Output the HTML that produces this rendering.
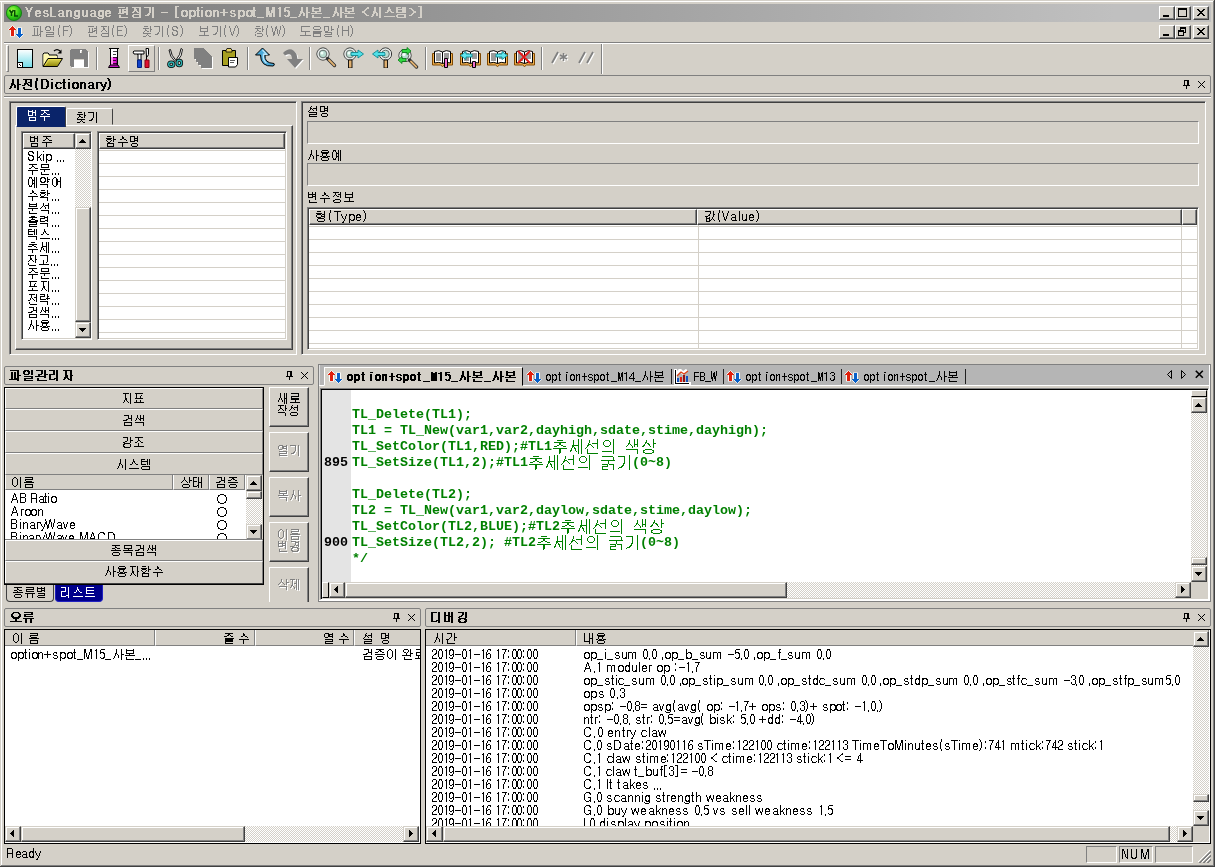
<!DOCTYPE html>
<html lang="ko"><head><meta charset="utf-8"><title>YesLanguage 편집기 - [option+spot_M15_사본_사본 &lt;시스템&gt;]</title>
<style>
html,body{margin:0;padding:0;background:#d4d0c8;overflow:hidden}
#app{position:relative;width:1215px;height:867px;overflow:hidden;background:#d4d0c8;
 font:12px/14px "Liberation Sans",sans-serif}
#app div{position:absolute;box-sizing:border-box}
.t{position:absolute;color:transparent;white-space:pre;overflow:hidden;
 font:12px/16px "Liberation Sans",sans-serif}
.t svg{position:absolute;left:0;top:0;fill:#000;shape-rendering:crispEdges}
svg{display:block}
/* classic 3d edges */
.sk{border:1px solid;border-color:#808080 #fff #fff #808080;
 box-shadow:inset 1px 1px #404040,inset -1px -1px #d4d0c8}
.sk1{border:1px solid;border-color:#808080 #fff #fff #808080}
.rs{border:1px solid;border-color:#fff #404040 #404040 #fff;
 box-shadow:inset -1px -1px #808080,inset 1px 1px #d4d0c8}
.rs1{border:1px solid;border-color:#fff #808080 #808080 #fff}
.sb{border:1px solid;border-color:#d4d0c8 #404040 #404040 #d4d0c8;
 box-shadow:inset -1px -1px #808080,inset 1px 1px #fff;background:#d4d0c8}
.trk{background:conic-gradient(#fff 25%,#d4d0c8 0 50%,#fff 0 75%,#d4d0c8 0) 0 0/2px 2px}
.cap{border:1px solid #808080;border-radius:2px;background:#d4d0c8}
.code{position:absolute;font:bold 13.33px/16px "Liberation Mono",monospace;color:#008000;
 white-space:pre;letter-spacing:0;will-change:transform}
.code .k{display:inline-block;position:relative;height:16px;vertical-align:top;
 color:transparent;overflow:hidden;font:12px/16px "Liberation Sans",sans-serif}
.code .k svg{position:absolute;left:0;top:0;fill:#008000;shape-rendering:crispEdges}
.ic{position:absolute}
</style></head>
<body>
<div id="app">
<svg width="0" height="0" style="position:absolute"><defs><path id="g0" d="M0 2h2v1h-2zm6 0h2v1h-2zm-5 1h2v1h-2zm4 0h2v1h-2zm-4 1h2v1h-2zm4 0h2v1h-2zm-3 1h4v1h-4zm0 1h4v1h-4zm1 1h2v1h-2zm0 1h2v1h-2zm0 1h2v1h-2zm0 1h2v1h-2zm0 1h2v1h-2z"/><path id="g1" d="M2 5h4v1h-4zm-1 1h6v1h-6zm0 1h2v1h-2zm4 0h2v1h-2zm-4 1h6v1h-6zm0 1h2v1h-2zm0 1h2v1h-2zm4 0h2v1h-2zm-3 1h4v1h-4z"/><path id="g2" d="M2 5h4v1h-4zm-1 1h2v1h-2zm3 0h2v1h-2zm-3 1h2v1h-2zm1 1h4v1h-4zm3 1h2v1h-2zm-4 1h2v1h-2zm4 0h2v1h-2zm-3 1h4v1h-4z"/><path id="g3" d="M1 2h2v1h-2zm0 1h2v1h-2zm0 1h2v1h-2zm0 1h2v1h-2zm0 1h2v1h-2zm0 1h2v1h-2zm0 1h2v1h-2zm0 1h2v1h-2zm0 1h2v1h-2zm0 1h6v1h-6z"/><path id="g4" d="M2 5h4v1h-4zm-1 1h2v1h-2zm4 0h2v1h-2zm0 1h2v1h-2zm-3 1h5v1h-5zm-1 1h2v1h-2zm4 0h2v1h-2zm-4 1h2v1h-2zm4 0h2v1h-2zm-3 1h6v1h-6z"/><path id="g5" d="M1 5h5v1h-5zm0 1h3v1h-3zm4 0h2v1h-2zm-4 1h2v1h-2zm4 0h2v1h-2zm-4 1h2v1h-2zm4 0h2v1h-2zm-4 1h2v1h-2zm4 0h2v1h-2zm-4 1h2v1h-2zm4 0h2v1h-2zm-4 1h2v1h-2zm4 0h2v1h-2z"/><path id="g6" d="M2 5h5v1h-5zm-1 1h6v1h-6zm0 1h2v1h-2zm4 0h2v1h-2zm-4 1h2v1h-2zm4 0h2v1h-2zm-4 1h2v1h-2zm4 0h2v1h-2zm-4 1h6v1h-6zm1 1h5v1h-5zm-2 1h2v1h-2zm5 0h2v1h-2zm-4 1h5v1h-5z"/><path id="g7" d="M1 5h2v1h-2zm4 0h2v1h-2zm-4 1h2v1h-2zm4 0h2v1h-2zm-4 1h2v1h-2zm4 0h2v1h-2zm-4 1h2v1h-2zm4 0h2v1h-2zm-4 1h2v1h-2zm4 0h2v1h-2zm-4 1h2v1h-2zm3 0h3v1h-3zm-2 1h5v1h-5z"/><path id="g8" d=""/><path id="g9" d="M1 2h7v1h-7zm8 0h2v1h-2zm0 1h2v1h-2zm-7 1h2v1h-2zm3 0h6v1h-6zm-3 1h2v1h-2zm3 0h2v1h-2zm4 0h2v1h-2zm-7 1h2v1h-2zm3 0h6v1h-6zm-3 1h2v1h-2zm3 0h6v1h-6zm-4 1h6v1h-6zm8 0h2v1h-2zm0 1h2v1h-2zm-7 1h2v1h-2zm0 1h2v1h-2zm0 1h9v1h-9z"/><path id="ga" d="M2 2h9v1h-9zm2 1h2v1h-2zm5 0h2v1h-2zm-5 1h3v1h-3zm5 0h2v1h-2zm-5 1h3v1h-3zm5 0h2v1h-2zm-6 1h2v1h-2zm3 0h2v1h-2zm3 0h2v1h-2zm-7 1h2v1h-2zm5 0h4v1h-4zm2 1h2v1h-2zm-6 1h8v1h-8zm-1 1h2v1h-2zm7 0h2v1h-2zm-7 1h2v1h-2zm7 0h2v1h-2zm-6 1h8v1h-8z"/><path id="gb" d="M1 2h7v1h-7zm8 0h2v1h-2zm-3 1h2v1h-2zm3 0h2v1h-2zm-3 1h2v1h-2zm3 0h2v1h-2zm-3 1h2v1h-2zm3 0h2v1h-2zm-3 1h2v1h-2zm3 0h2v1h-2zm-3 1h2v1h-2zm3 0h2v1h-2zm-4 1h2v1h-2zm4 0h2v1h-2zm-5 1h3v1h-3zm5 0h2v1h-2zm-7 1h4v1h-4zm7 0h2v1h-2zm0 1h2v1h-2zm0 1h2v1h-2z"/><path id="gc" d="M1 7h7v1h-7z"/><path id="gd" d="M2 1h4v1h-4zm0 1h2v1h-2zm0 1h2v1h-2zm0 1h2v1h-2zm0 1h2v1h-2zm0 1h2v1h-2zm0 1h2v1h-2zm0 1h2v1h-2zm0 1h2v1h-2zm0 1h2v1h-2zm0 1h2v1h-2zm0 1h4v1h-4z"/><path id="ge" d="M2 5h5v1h-5zm-1 1h3v1h-3zm4 0h3v1h-3zm-4 1h2v1h-2zm5 0h2v1h-2zm-5 1h2v1h-2zm5 0h2v1h-2zm-5 1h2v1h-2zm5 0h2v1h-2zm-5 1h3v1h-3zm4 0h3v1h-3zm-3 1h5v1h-5z"/><path id="gf" d="M1 5h6v1h-6zm0 1h3v1h-3zm4 0h3v1h-3zm-4 1h2v1h-2zm5 0h2v1h-2zm-5 1h2v1h-2zm5 0h2v1h-2zm-5 1h2v1h-2zm5 0h2v1h-2zm-5 1h3v1h-3zm4 0h3v1h-3zm-4 1h6v1h-6zm0 1h2v1h-2zm0 1h2v1h-2z"/><path id="gg" d="M1 2h2v1h-2zm0 1h2v1h-2zm0 1h2v1h-2zm-1 1h4v1h-4zm1 1h2v1h-2zm0 1h2v1h-2zm0 1h2v1h-2zm0 1h2v1h-2zm0 1h2v1h-2zm0 1h3v1h-3z"/><path id="gh" d="M1 2h2v1h-2zm0 3h2v1h-2zm0 1h2v1h-2zm0 1h2v1h-2zm0 1h2v1h-2zm0 1h2v1h-2zm0 1h2v1h-2zm0 1h2v1h-2z"/><path id="gi" d="M3 4h2v1h-2zm0 1h2v1h-2zm0 1h2v1h-2zm-3 1h8v1h-8zm3 1h2v1h-2zm0 1h2v1h-2zm0 1h2v1h-2z"/><path id="gj" d="M0 12h7v1h-7z"/><path id="gk" d="M1 2h3v1h-3zm6 0h3v1h-3zm-6 1h3v1h-3zm6 0h3v1h-3zm-6 1h3v1h-3zm6 0h3v1h-3zm-6 1h3v1h-3zm5 0h4v1h-4zm-5 1h4v1h-4zm5 0h4v1h-4zm-5 1h4v1h-4zm5 0h4v1h-4zm-5 1h6v1h-6zm7 0h2v1h-2zm-7 1h6v1h-6zm7 0h2v1h-2zm-7 1h2v1h-2zm3 0h3v1h-3zm4 0h2v1h-2zm-7 1h2v1h-2zm3 0h3v1h-3zm4 0h2v1h-2z"/><path id="gl" d="M3 2h2v1h-2zm-1 1h3v1h-3zm1 1h2v1h-2zm0 1h2v1h-2zm0 1h2v1h-2zm0 1h2v1h-2zm0 1h2v1h-2zm0 1h2v1h-2zm0 1h2v1h-2zm0 1h2v1h-2z"/><path id="gm" d="M2 2h5v1h-5zm-1 1h2v1h-2zm0 1h2v1h-2zm0 1h5v1h-5zm0 1h2v1h-2zm3 0h3v1h-3zm1 1h2v1h-2zm0 1h2v1h-2zm0 1h2v1h-2zm-4 1h2v1h-2zm3 0h3v1h-3zm-2 1h4v1h-4z"/><path id="gn" d="M4 2h2v1h-2zm5 0h2v1h-2zm-5 1h2v1h-2zm5 0h2v1h-2zm-5 1h2v1h-2zm5 0h2v1h-2zm-5 1h2v1h-2zm5 0h2v1h-2zm-6 1h3v1h-3zm6 0h2v1h-2zm-6 1h4v1h-4zm6 0h4v1h-4zm-6 1h2v1h-2zm3 0h2v1h-2zm3 0h2v1h-2zm-7 1h2v1h-2zm4 0h2v1h-2zm3 0h2v1h-2zm-7 1h2v1h-2zm4 0h2v1h-2zm3 0h2v1h-2zm-8 1h2v1h-2zm8 0h2v1h-2zm0 1h2v1h-2z"/><path id="go" d="M2 2h2v1h-2zm7 0h2v1h-2zm-7 1h9v1h-9zm0 1h2v1h-2zm7 0h2v1h-2zm-7 1h2v1h-2zm7 0h2v1h-2zm-7 1h9v1h-9zm3 1h2v1h-2zm-4 1h11v1h-11zm1 2h2v1h-2zm0 1h2v1h-2zm0 1h9v1h-9z"/><path id="gp" d="M6 2h2v1h-2zm-1 1h3v1h-3zm-1 1h2v1h-2zm-1 1h2v1h-2zm-2 1h3v1h-3zm0 1h3v1h-3zm2 1h2v1h-2zm1 1h2v1h-2zm1 1h3v1h-3z"/><path id="gq" d="M4 2h2v1h-2zm5 0h2v1h-2zm-5 1h2v1h-2zm5 0h2v1h-2zm-5 1h2v1h-2zm5 0h2v1h-2zm-5 1h2v1h-2zm5 0h2v1h-2zm-6 1h3v1h-3zm6 0h2v1h-2zm-6 1h4v1h-4zm6 0h2v1h-2zm-6 1h2v1h-2zm3 0h2v1h-2zm3 0h2v1h-2zm-7 1h2v1h-2zm4 0h2v1h-2zm3 0h2v1h-2zm-7 1h2v1h-2zm4 0h2v1h-2zm3 0h2v1h-2zm-8 1h2v1h-2zm8 0h2v1h-2zm0 1h2v1h-2z"/><path id="gr" d="M5 2h2v1h-2zm0 1h2v1h-2zm0 1h3v1h-3zm-1 1h4v1h-4zm0 1h2v1h-2zm3 0h2v1h-2zm-5 1h3v1h-3zm6 0h3v1h-3zm-7 4h11v1h-11z"/><path id="gs" d="M1 2h5v1h-5zm6 0h4v1h-4zm-6 1h2v1h-2zm6 0h4v1h-4zm-6 1h10v1h-10zm0 1h2v1h-2zm6 0h4v1h-4zm-6 1h2v1h-2zm6 0h4v1h-4zm-6 1h10v1h-10zm1 2h9v1h-9zm-1 1h2v1h-2zm8 0h2v1h-2zm-8 1h2v1h-2zm8 0h2v1h-2zm-7 1h9v1h-9z"/><path id="gt" d="M1 3h3v1h-3zm2 1h2v1h-2zm1 1h2v1h-2zm1 1h3v1h-3zm0 1h3v1h-3zm-1 1h2v1h-2zm-1 1h2v1h-2zm-2 1h3v1h-3z"/><path id="gu" d="M1 1h4v1h-4zm2 1h2v1h-2zm0 1h2v1h-2zm0 1h2v1h-2zm0 1h2v1h-2zm0 1h2v1h-2zm0 1h2v1h-2zm0 1h2v1h-2zm0 1h2v1h-2zm0 1h2v1h-2zm0 1h2v1h-2zm-2 1h4v1h-4z"/><path id="gv" d="M1 2h6v1h-6zm7 0h1v1h-1zm0 1h1v1h-1zm-6 1h1v1h-1zm3 0h1v1h-1zm3 0h1v1h-1zm-6 1h1v1h-1zm3 0h1v1h-1zm3 0h1v1h-1zm-6 1h1v1h-1zm3 0h1v1h-1zm3 0h1v1h-1zm-6 1h1v1h-1zm3 0h1v1h-1zm3 0h3v1h-3zm-6 1h1v1h-1zm3 0h1v1h-1zm3 0h1v1h-1zm-6 1h1v1h-1zm3 0h1v1h-1zm3 0h1v1h-1zm-6 1h1v1h-1zm3 0h1v1h-1zm2 0h2v1h-2zm-7 1h7v1h-7zm8 0h1v1h-1zm0 1h1v1h-1z"/><path id="gw" d="M2 2h4v1h-4zm7 0h1v1h-1zm-8 1h2v1h-2zm4 0h2v1h-2zm4 0h1v1h-1zm-8 1h1v1h-1zm5 0h1v1h-1zm3 0h1v1h-1zm-8 1h1v1h-1zm5 0h1v1h-1zm3 0h1v1h-1zm-7 1h4v1h-4zm7 0h1v1h-1zm-7 2h8v1h-8zm7 1h1v1h-1zm-7 1h8v1h-8zm0 1h1v1h-1zm0 1h8v1h-8z"/><path id="gx" d="M2 1h1v1h-1zm0 1h1v1h-1zm0 1h1v1h-1zm-1 1h1v1h-1zm0 1h1v1h-1zm0 1h1v1h-1zm0 1h1v1h-1zm0 1h1v1h-1zm0 1h1v1h-1zm0 1h1v1h-1zm1 1h1v1h-1zm0 1h1v1h-1z"/><path id="gy" d="M1 2h6v1h-6zm0 1h1v1h-1zm0 1h1v1h-1zm0 1h1v1h-1zm0 1h5v1h-5zm0 1h1v1h-1zm0 1h1v1h-1zm0 1h1v1h-1zm0 1h1v1h-1zm0 1h1v1h-1z"/><path id="gz" d="M0 1h1v1h-1zm1 1h1v1h-1zm0 1h1v1h-1zm1 1h1v1h-1zm0 1h1v1h-1zm0 1h1v1h-1zm0 1h1v1h-1zm0 1h1v1h-1zm0 1h1v1h-1zm-1 1h1v1h-1zm0 1h1v1h-1zm-1 1h1v1h-1z"/><path id="g10" d="M1 2h6v1h-6zm8 0h1v1h-1zm0 1h1v1h-1zm-7 1h1v1h-1zm3 0h1v1h-1zm2 0h3v1h-3zm-5 1h1v1h-1zm3 0h1v1h-1zm4 0h1v1h-1zm-7 1h1v1h-1zm3 0h1v1h-1zm2 0h3v1h-3zm-5 1h1v1h-1zm3 0h3v1h-3zm4 0h1v1h-1zm-8 1h5v1h-5zm8 0h1v1h-1zm0 1h1v1h-1zm-7 1h1v1h-1zm0 1h1v1h-1zm0 1h8v1h-8z"/><path id="g11" d="M2 2h6v1h-6zm7 0h1v1h-1zm-5 1h1v1h-1zm5 0h1v1h-1zm-5 1h2v1h-2zm5 0h1v1h-1zm-5 1h2v1h-2zm5 0h1v1h-1zm-6 1h1v1h-1zm3 0h1v1h-1zm3 0h1v1h-1zm-7 1h1v1h-1zm5 0h1v1h-1zm2 0h1v1h-1zm0 1h1v1h-1zm-6 1h7v1h-7zm-1 1h1v1h-1zm7 0h1v1h-1zm-7 1h1v1h-1zm7 0h1v1h-1zm-6 1h7v1h-7z"/><path id="g12" d="M1 2h6v1h-6zm0 1h1v1h-1zm0 1h1v1h-1zm0 1h1v1h-1zm0 1h5v1h-5zm0 1h1v1h-1zm0 1h1v1h-1zm0 1h1v1h-1zm0 1h1v1h-1zm0 1h6v1h-6z"/><path id="g13" d="M3 2h4v1h-4zm6 0h1v1h-1zm0 1h1v1h-1zm-7 1h6v1h-6zm7 0h1v1h-1zm-5 1h1v1h-1zm5 0h2v1h-2zm-5 1h2v1h-2zm5 0h1v1h-1zm-6 1h1v1h-1zm3 0h2v1h-2zm3 0h1v1h-1zm-7 1h1v1h-1zm0 1h8v1h-8zm4 1h1v1h-1zm-1 1h1v1h-1zm2 0h1v1h-1zm-5 1h3v1h-3zm6 0h2v1h-2z"/><path id="g14" d="M1 2h6v1h-6zm8 0h1v1h-1zm-3 1h1v1h-1zm3 0h1v1h-1zm-3 1h1v1h-1zm3 0h1v1h-1zm-3 1h1v1h-1zm3 0h1v1h-1zm-3 1h1v1h-1zm3 0h1v1h-1zm-3 1h1v1h-1zm3 0h1v1h-1zm-4 1h1v1h-1zm4 0h1v1h-1zm-5 1h2v1h-2zm5 0h1v1h-1zm-7 1h3v1h-3zm7 0h1v1h-1zm0 1h1v1h-1zm0 1h1v1h-1z"/><path id="g15" d="M2 2h4v1h-4zm-1 1h1v1h-1zm4 0h2v1h-2zm-4 1h1v1h-1zm5 0h1v1h-1zm-5 1h2v1h-2zm1 1h4v1h-4zm3 1h2v1h-2zm-4 1h1v1h-1zm5 0h1v1h-1zm-5 1h1v1h-1zm5 0h1v1h-1zm-5 1h2v1h-2zm4 0h2v1h-2zm-3 1h4v1h-4z"/><path id="g16" d="M2 2h1v1h-1zm7 0h1v1h-1zm-7 1h1v1h-1zm7 0h1v1h-1zm-7 1h8v1h-8zm0 1h1v1h-1zm7 0h1v1h-1zm-7 1h1v1h-1zm7 0h1v1h-1zm-7 1h8v1h-8zm4 1h1v1h-1zm0 1h1v1h-1zm0 1h1v1h-1zm-5 1h10v1h-10z"/><path id="g17" d="M0 2h1v1h-1zm6 0h1v1h-1zm-6 1h1v1h-1zm6 0h1v1h-1zm-5 1h1v1h-1zm4 0h1v1h-1zm-4 1h1v1h-1zm4 0h1v1h-1zm-4 1h1v1h-1zm4 0h1v1h-1zm-4 1h1v1h-1zm3 0h1v1h-1zm-2 1h1v1h-1zm2 0h1v1h-1zm-2 1h1v1h-1zm2 0h1v1h-1zm-2 1h2v1h-2zm1 1h1v1h-1z"/><path id="g18" d="M3 2h4v1h-4zm6 0h1v1h-1zm0 1h1v1h-1zm-7 1h6v1h-6zm7 0h1v1h-1zm-5 1h1v1h-1zm5 0h2v1h-2zm-5 1h2v1h-2zm5 0h1v1h-1zm-6 1h1v1h-1zm3 0h2v1h-2zm3 0h1v1h-1zm-7 1h1v1h-1zm2 1h5v1h-5zm-2 1h1v1h-1zm7 0h1v1h-1zm-7 1h1v1h-1zm7 0h1v1h-1zm-5 1h5v1h-5z"/><path id="g19" d="M0 2h1v1h-1zm5 0h1v1h-1zm4 0h1v1h-1zm-9 1h1v1h-1zm4 0h2v1h-2zm5 0h1v1h-1zm-8 1h1v1h-1zm3 0h2v1h-2zm5 0h1v1h-1zm-8 1h1v1h-1zm3 0h1v1h-1zm2 0h1v1h-1zm3 0h1v1h-1zm-8 1h1v1h-1zm3 0h1v1h-1zm2 0h1v1h-1zm2 0h1v1h-1zm-7 1h1v1h-1zm2 0h1v1h-1zm3 0h1v1h-1zm2 0h1v1h-1zm-6 1h2v1h-2zm4 0h1v1h-1zm2 0h1v1h-1zm-6 1h2v1h-2zm4 0h1v1h-1zm2 0h1v1h-1zm-6 1h2v1h-2zm5 0h1v1h-1zm-5 1h1v1h-1zm5 0h1v1h-1z"/><path id="g1a" d="M2 2h9v1h-9zm0 1h1v1h-1zm0 1h1v1h-1zm0 1h1v1h-1zm0 1h1v1h-1zm0 1h9v1h-9zm4 1h1v1h-1zm0 1h1v1h-1zm0 1h1v1h-1zm-5 1h11v1h-11z"/><path id="g1b" d="M3 2h6v1h-6zm-1 1h1v1h-1zm7 0h1v1h-1zm-7 1h1v1h-1zm7 0h1v1h-1zm-6 1h6v1h-6zm-1 2h9v1h-9zm0 1h8v1h-8zm0 1h8v1h-8zm0 1h1v1h-1zm7 0h1v1h-1zm-7 1h1v1h-1zm7 0h1v1h-1zm-7 1h8v1h-8z"/><path id="g1c" d="M1 2h5v1h-5zm7 0h1v1h-1zm-7 1h1v1h-1zm4 0h1v1h-1zm3 0h1v1h-1zm-7 1h1v1h-1zm4 0h1v1h-1zm3 0h1v1h-1zm-7 1h1v1h-1zm4 0h1v1h-1zm3 0h3v1h-3zm-7 1h1v1h-1zm4 0h1v1h-1zm3 0h1v1h-1zm-6 1h3v1h-3zm0 1h7v1h-7zm6 1h1v1h-1zm-6 1h7v1h-7zm-1 1h1v1h-1zm1 1h7v1h-7z"/><path id="g1d" d="M1 2h1v1h-1zm6 0h1v1h-1zm-6 1h1v1h-1zm6 0h1v1h-1zm-6 1h1v1h-1zm6 0h1v1h-1zm-6 1h1v1h-1zm6 0h1v1h-1zm-6 1h7v1h-7zm0 1h1v1h-1zm6 0h1v1h-1zm-6 1h1v1h-1zm6 0h1v1h-1zm-6 1h1v1h-1zm6 0h1v1h-1zm-6 1h1v1h-1zm6 0h1v1h-1zm-6 1h1v1h-1zm6 0h1v1h-1z"/><path id="g1e" d="M1 2h5v1h-5zm0 1h1v1h-1zm5 0h1v1h-1zm-5 1h1v1h-1zm5 0h1v1h-1zm-5 1h1v1h-1zm5 0h1v1h-1zm-5 1h1v1h-1zm5 0h1v1h-1zm-5 1h6v1h-6zm0 1h1v1h-1zm5 0h1v1h-1zm-5 1h1v1h-1zm5 0h1v1h-1zm-5 1h1v1h-1zm5 0h1v1h-1zm-5 1h1v1h-1zm5 0h1v1h-1z"/><path id="g1f" d="M2 5h3v1h-3zm-1 1h2v1h-2zm3 0h2v1h-2zm-3 1h1v1h-1zm4 0h1v1h-1zm-4 1h5v1h-5zm0 1h1v1h-1zm0 1h1v1h-1zm4 0h1v1h-1zm-3 1h3v1h-3z"/><path id="g1g" d="M2 5h3v1h-3zm-1 1h1v1h-1zm4 0h1v1h-1zm0 1h1v1h-1zm-3 1h4v1h-4zm-1 1h1v1h-1zm4 0h1v1h-1zm-4 1h1v1h-1zm4 0h1v1h-1zm-3 1h5v1h-5z"/><path id="g1h" d="M5 2h1v1h-1zm0 1h1v1h-1zm0 1h1v1h-1zm-3 1h4v1h-4zm-1 1h2v1h-2zm3 0h2v1h-2zm-3 1h1v1h-1zm4 0h1v1h-1zm-4 1h1v1h-1zm4 0h1v1h-1zm-4 1h1v1h-1zm4 0h1v1h-1zm-4 1h2v1h-2zm3 0h2v1h-2zm-2 1h4v1h-4z"/><path id="g1i" d="M0 5h1v1h-1zm5 0h1v1h-1zm-5 1h1v1h-1zm5 0h1v1h-1zm-4 1h1v1h-1zm3 0h1v1h-1zm-3 1h1v1h-1zm3 0h1v1h-1zm-2 1h1v1h-1zm2 0h1v1h-1zm-1 1h1v1h-1zm0 1h1v1h-1zm-1 1h1v1h-1zm-1 1h2v1h-2z"/><path id="g1j" d="M1 2h2v1h-2zm5 0h1v1h-1zm-5 1h2v1h-2zm5 0h1v1h-1zm-5 1h1v1h-1zm2 0h1v1h-1zm3 0h1v1h-1zm-5 1h1v1h-1zm2 0h1v1h-1zm3 0h1v1h-1zm-5 1h1v1h-1zm2 0h1v1h-1zm3 0h1v1h-1zm-5 1h1v1h-1zm3 0h1v1h-1zm2 0h1v1h-1zm-5 1h1v1h-1zm3 0h1v1h-1zm2 0h1v1h-1zm-5 1h1v1h-1zm3 0h1v1h-1zm2 0h1v1h-1zm-5 1h1v1h-1zm4 0h2v1h-2zm-4 1h1v1h-1zm5 0h1v1h-1z"/><path id="g1k" d="M1 2h1v1h-1zm5 0h1v1h-1zm-5 1h1v1h-1zm5 0h1v1h-1zm-5 1h1v1h-1zm5 0h1v1h-1zm-5 1h1v1h-1zm5 0h1v1h-1zm-5 1h1v1h-1zm5 0h1v1h-1zm-5 1h1v1h-1zm5 0h1v1h-1zm-5 1h1v1h-1zm5 0h1v1h-1zm-5 1h1v1h-1zm5 0h1v1h-1zm-5 1h2v1h-2zm4 0h2v1h-2zm-3 1h4v1h-4z"/><path id="g1l" d="M1 2h2v1h-2zm6 0h2v1h-2zm-6 1h2v1h-2zm6 0h2v1h-2zm-6 1h2v1h-2zm6 0h2v1h-2zm-6 1h2v1h-2zm5 0h1v1h-1zm2 0h1v1h-1zm-7 1h1v1h-1zm2 0h1v1h-1zm3 0h1v1h-1zm2 0h1v1h-1zm-7 1h1v1h-1zm2 0h1v1h-1zm3 0h1v1h-1zm2 0h1v1h-1zm-7 1h1v1h-1zm2 0h1v1h-1zm2 0h1v1h-1zm3 0h1v1h-1zm-7 1h1v1h-1zm2 0h1v1h-1zm2 0h1v1h-1zm3 0h1v1h-1zm-7 1h1v1h-1zm3 0h2v1h-2zm4 0h1v1h-1zm-7 1h1v1h-1zm3 0h2v1h-2zm4 0h1v1h-1z"/><path id="g1m" d="M2 2h9v1h-9zm2 1h2v1h-2zm5 0h2v1h-2zm-5 1h2v1h-2zm5 0h2v1h-2zm-5 1h2v1h-2zm3 0h4v1h-4zm-4 1h4v1h-4zm6 0h2v1h-2zm-6 1h2v1h-2zm3 0h2v1h-2zm3 0h2v1h-2zm-8 1h3v1h-3zm6 0h4v1h-4zm2 1h2v1h-2zm-7 1h2v1h-2zm0 1h2v1h-2zm1 1h8v1h-8z"/><path id="g1n" d="M2 1h2v1h-2zm0 1h2v1h-2zm0 1h2v1h-2zm-1 1h2v1h-2zm0 1h2v1h-2zm0 1h2v1h-2zm0 1h2v1h-2zm0 1h2v1h-2zm0 1h2v1h-2zm0 1h2v1h-2zm1 1h2v1h-2zm0 1h2v1h-2z"/><path id="g1o" d="M1 2h6v1h-6zm0 1h2v1h-2zm5 0h2v1h-2zm-5 1h2v1h-2zm5 0h3v1h-3zm-5 1h2v1h-2zm6 0h2v1h-2zm-6 1h2v1h-2zm6 0h2v1h-2zm-6 1h2v1h-2zm6 0h2v1h-2zm-6 1h2v1h-2zm6 0h2v1h-2zm-6 1h2v1h-2zm5 0h3v1h-3zm-5 1h2v1h-2zm5 0h2v1h-2zm-5 1h6v1h-6z"/><path id="g1p" d="M2 5h5v1h-5zm0 1h2v1h-2zm4 0h2v1h-2zm-5 1h2v1h-2zm0 1h2v1h-2zm0 1h2v1h-2zm1 1h2v1h-2zm4 0h2v1h-2zm-4 1h5v1h-5z"/><path id="g1q" d="M1 5h4v1h-4zm0 1h2v1h-2zm0 1h2v1h-2zm0 1h2v1h-2zm0 1h2v1h-2zm0 1h2v1h-2zm0 1h2v1h-2z"/><path id="g1r" d="M0 5h2v1h-2zm5 0h2v1h-2zm-5 1h2v1h-2zm5 0h2v1h-2zm-4 1h2v1h-2zm3 0h2v1h-2zm-3 1h2v1h-2zm3 0h2v1h-2zm-2 1h4v1h-4zm1 1h2v1h-2zm0 1h2v1h-2zm-1 1h2v1h-2zm-1 1h3v1h-3z"/><path id="g1s" d="M0 1h2v1h-2zm1 1h2v1h-2zm0 1h2v1h-2zm1 1h2v1h-2zm0 1h2v1h-2zm0 1h2v1h-2zm0 1h2v1h-2zm0 1h2v1h-2zm0 1h2v1h-2zm-1 1h2v1h-2zm0 1h2v1h-2zm-1 1h2v1h-2z"/><path id="g1t" d="M1 2h1v1h-1zm4 0h1v1h-1zm3 0h1v1h-1zm-7 1h5v1h-5zm7 0h1v1h-1zm-7 1h1v1h-1zm4 0h4v1h-4zm-4 1h1v1h-1zm4 0h1v1h-1zm3 0h1v1h-1zm-7 1h1v1h-1zm4 0h1v1h-1zm3 0h1v1h-1zm-7 1h5v1h-5zm7 0h1v1h-1zm-6 2h7v1h-7zm0 1h1v1h-1zm6 0h1v1h-1zm-6 1h1v1h-1zm6 0h1v1h-1zm-6 1h7v1h-7z"/><path id="g1u" d="M2 2h8v1h-8zm3 1h1v1h-1zm0 1h2v1h-2zm-1 1h1v1h-1zm3 0h1v1h-1zm-5 1h2v1h-2zm6 0h3v1h-3zm-7 2h10v1h-10zm4 1h1v1h-1zm0 1h1v1h-1zm0 1h1v1h-1zm0 1h1v1h-1z"/><path id="g1v" d="M1 2h1v1h-1zm0 1h1v1h-1zm0 1h1v1h-1zm0 1h1v1h-1zm4 0h1v1h-1zm-4 1h1v1h-1zm3 0h1v1h-1zm-3 1h1v1h-1zm2 0h1v1h-1zm-2 1h3v1h-3zm0 1h1v1h-1zm3 0h1v1h-1zm-3 1h1v1h-1zm3 0h1v1h-1zm-3 1h1v1h-1zm4 0h1v1h-1z"/><path id="g1w" d="M1 2h1v1h-1zm0 3h1v1h-1zm0 1h1v1h-1zm0 1h1v1h-1zm0 1h1v1h-1zm0 1h1v1h-1zm0 1h1v1h-1zm0 1h1v1h-1z"/><path id="g1x" d="M1 5h5v1h-5zm0 1h2v1h-2zm4 0h2v1h-2zm-4 1h1v1h-1zm5 0h1v1h-1zm-5 1h1v1h-1zm5 0h1v1h-1zm-5 1h1v1h-1zm5 0h1v1h-1zm-5 1h2v1h-2zm4 0h2v1h-2zm-4 1h1v1h-1zm2 0h3v1h-3zm-2 1h1v1h-1zm0 1h1v1h-1z"/><path id="g1y" d=""/><path id="g1z" d="M1 11h1v1h-1zm0 1h1v1h-1z"/><path id="g20" d="M2 2h8v1h-8zm0 1h1v1h-1zm7 0h1v1h-1zm-7 1h1v1h-1zm7 0h1v1h-1zm-7 1h8v1h-8zm-1 2h10v1h-10zm4 1h1v1h-1zm0 1h1v1h-1zm-3 1h1v1h-1zm0 1h1v1h-1zm0 1h8v1h-8z"/><path id="g21" d="M2 2h3v1h-3zm5 0h1v1h-1zm2 0h1v1h-1zm-7 1h1v1h-1zm2 0h1v1h-1zm3 0h1v1h-1zm2 0h1v1h-1zm-8 1h1v1h-1zm4 0h1v1h-1zm2 0h1v1h-1zm2 0h1v1h-1zm-8 1h1v1h-1zm4 0h3v1h-3zm4 0h1v1h-1zm-8 1h1v1h-1zm4 0h1v1h-1zm2 0h1v1h-1zm2 0h1v1h-1zm-8 1h1v1h-1zm4 0h1v1h-1zm2 0h1v1h-1zm2 0h1v1h-1zm-8 1h1v1h-1zm4 0h3v1h-3zm4 0h1v1h-1zm-8 1h1v1h-1zm4 0h1v1h-1zm2 0h1v1h-1zm2 0h1v1h-1zm-7 1h1v1h-1zm2 0h1v1h-1zm3 0h1v1h-1zm2 0h1v1h-1zm-7 1h3v1h-3zm5 0h1v1h-1zm2 0h1v1h-1zm-2 1h1v1h-1zm2 0h1v1h-1z"/><path id="g22" d="M2 2h4v1h-4zm6 0h1v1h-1zm-7 1h2v1h-2zm4 0h2v1h-2zm3 0h1v1h-1zm-7 1h1v1h-1zm5 0h1v1h-1zm2 0h3v1h-3zm-7 1h1v1h-1zm5 0h1v1h-1zm2 0h1v1h-1zm-7 1h2v1h-2zm4 0h2v1h-2zm3 0h2v1h-2zm-6 1h4v1h-4zm6 0h1v1h-1zm-7 2h8v1h-8zm7 1h1v1h-1zm0 1h1v1h-1zm0 1h1v1h-1z"/><path id="g23" d="M3 2h2v1h-2zm6 0h1v1h-1zm-7 1h1v1h-1zm3 0h1v1h-1zm4 0h1v1h-1zm-8 1h1v1h-1zm4 0h2v1h-2zm4 0h1v1h-1zm-8 1h1v1h-1zm4 0h2v1h-2zm4 0h1v1h-1zm-8 1h1v1h-1zm4 0h5v1h-5zm-4 1h1v1h-1zm4 0h2v1h-2zm4 0h1v1h-1zm-8 1h1v1h-1zm4 0h2v1h-2zm4 0h1v1h-1zm-8 1h1v1h-1zm4 0h2v1h-2zm4 0h1v1h-1zm-7 1h1v1h-1zm3 0h1v1h-1zm4 0h1v1h-1zm-6 1h2v1h-2zm6 0h1v1h-1zm0 1h1v1h-1z"/><path id="g24" d="M5 2h1v1h-1zm0 1h2v1h-2zm0 1h2v1h-2zm-2 1h2v1h-2zm4 0h2v1h-2zm2 1h1v1h-1zm-8 2h10v1h-10zm4 1h1v1h-1zm0 1h1v1h-1zm0 1h1v1h-1zm0 1h1v1h-1z"/><path id="g25" d="M2 2h4v1h-4zm6 0h1v1h-1zm0 1h1v1h-1zm-7 1h6v1h-6zm7 0h1v1h-1zm-6 1h4v1h-4zm6 0h3v1h-3zm-7 1h1v1h-1zm5 0h1v1h-1zm2 0h1v1h-1zm-7 1h1v1h-1zm4 0h1v1h-1zm3 0h1v1h-1zm-6 1h3v1h-3zm-1 1h8v1h-8zm7 1h1v1h-1zm0 1h1v1h-1zm0 1h1v1h-1z"/><path id="g26" d="M2 2h1v1h-1zm7 0h1v1h-1zm-7 1h8v1h-8zm0 1h1v1h-1zm7 0h1v1h-1zm-7 1h8v1h-8zm-1 2h10v1h-10zm4 1h1v1h-1zm0 1h1v1h-1zm-3 1h1v1h-1zm0 1h1v1h-1zm0 1h8v1h-8z"/><path id="g27" d="M4 2h1v1h-1zm5 0h1v1h-1zm-5 1h1v1h-1zm5 0h1v1h-1zm-5 1h1v1h-1zm2 0h4v1h-4zm-3 1h1v1h-1zm2 0h1v1h-1zm4 0h1v1h-1zm-7 1h1v1h-1zm4 0h1v1h-1zm3 0h1v1h-1zm-8 1h1v1h-1zm5 0h1v1h-1zm3 0h1v1h-1zm-7 2h8v1h-8zm7 1h1v1h-1zm0 1h1v1h-1zm0 1h1v1h-1z"/><path id="g28" d="M4 2h4v1h-4zm-2 1h8v1h-8zm3 1h1v1h-1zm-1 1h4v1h-4zm-2 1h2v1h-2zm6 0h3v1h-3zm-7 1h10v1h-10zm1 1h8v1h-8zm7 1h1v1h-1zm-7 1h8v1h-8zm0 1h1v1h-1zm0 1h8v1h-8z"/><path id="g29" d="M1 2h5v1h-5zm7 0h1v1h-1zm-3 1h4v1h-4zm-4 1h5v1h-5zm7 0h1v1h-1zm-7 1h1v1h-1zm7 0h1v1h-1zm-7 1h1v1h-1zm5 0h3v1h-3zm-5 1h5v1h-5zm7 0h1v1h-1zm-7 2h8v1h-8zm7 1h1v1h-1zm0 1h1v1h-1zm0 1h1v1h-1z"/><path id="g2a" d="M1 2h4v1h-4zm6 0h1v1h-1zm2 0h1v1h-1zm-8 1h1v1h-1zm6 0h1v1h-1zm2 0h1v1h-1zm-8 1h7v1h-7zm8 0h1v1h-1zm-8 1h1v1h-1zm6 0h1v1h-1zm2 0h1v1h-1zm-8 1h1v1h-1zm6 0h1v1h-1zm2 0h1v1h-1zm-8 1h5v1h-5zm6 0h1v1h-1zm2 0h1v1h-1zm-8 2h9v1h-9zm8 1h1v1h-1zm0 1h1v1h-1zm0 1h1v1h-1z"/><path id="g2b" d="M5 2h1v1h-1zm0 1h1v1h-1zm0 1h2v1h-2zm-1 1h1v1h-1zm2 0h1v1h-1zm-2 1h1v1h-1zm3 0h1v1h-1zm-5 1h2v1h-2zm6 0h2v1h-2zm-7 4h10v1h-10z"/><path id="g2c" d="M4 2h4v1h-4zm-2 2h8v1h-8zm3 1h2v1h-2zm-4 1h4v1h-4zm6 0h2v1h-2zm2 1h1v1h-1zm-8 2h10v1h-10zm4 1h1v1h-1zm0 1h1v1h-1zm0 1h1v1h-1z"/><path id="g2d" d="M3 2h1v1h-1zm4 0h1v1h-1zm2 0h1v1h-1zm-6 1h1v1h-1zm4 0h1v1h-1zm2 0h1v1h-1zm-6 1h1v1h-1zm4 0h1v1h-1zm2 0h1v1h-1zm-6 1h1v1h-1zm4 0h1v1h-1zm2 0h1v1h-1zm-6 1h5v1h-5zm6 0h1v1h-1zm-7 1h2v1h-2zm5 0h1v1h-1zm2 0h1v1h-1zm-7 1h1v1h-1zm2 0h1v1h-1zm3 0h1v1h-1zm2 0h1v1h-1zm-7 1h1v1h-1zm2 0h1v1h-1zm3 0h1v1h-1zm2 0h1v1h-1zm-8 1h1v1h-1zm4 0h1v1h-1zm2 0h1v1h-1zm2 0h1v1h-1zm-8 1h1v1h-1zm6 0h1v1h-1zm2 0h1v1h-1zm-2 1h1v1h-1zm2 0h1v1h-1z"/><path id="g2e" d="M2 2h6v1h-6zm7 0h1v1h-1zm-5 1h1v1h-1zm5 0h1v1h-1zm-5 1h1v1h-1zm5 0h1v1h-1zm-5 1h2v1h-2zm5 0h1v1h-1zm-5 1h2v1h-2zm5 0h2v1h-2zm-6 1h1v1h-1zm3 0h1v1h-1zm3 0h1v1h-1zm-7 1h1v1h-1zm5 0h1v1h-1zm2 0h1v1h-1zm0 1h1v1h-1zm-7 1h1v1h-1zm0 1h1v1h-1zm1 1h7v1h-7z"/><path id="g2f" d="M2 2h8v1h-8zm7 1h1v1h-1zm0 1h1v1h-1zm0 1h1v1h-1zm0 1h1v1h-1zm-4 1h1v1h-1zm4 0h1v1h-1zm-4 1h1v1h-1zm4 0h1v1h-1zm-4 1h1v1h-1zm3 0h1v1h-1zm-3 1h1v1h-1zm-4 1h10v1h-10z"/><path id="g2g" d="M2 2h8v1h-8zm1 1h1v1h-1zm0 1h1v1h-1zm5 0h1v1h-1zm-5 1h1v1h-1zm4 0h1v1h-1zm-4 1h1v1h-1zm4 0h1v1h-1zm-5 1h8v1h-8zm3 2h1v1h-1zm0 1h1v1h-1zm-4 1h10v1h-10z"/><path id="g2h" d="M2 2h6v1h-6zm7 0h1v1h-1zm-5 1h1v1h-1zm5 0h1v1h-1zm-5 1h1v1h-1zm5 0h1v1h-1zm-5 1h1v1h-1zm5 0h1v1h-1zm-5 1h1v1h-1zm5 0h1v1h-1zm-5 1h2v1h-2zm5 0h1v1h-1zm-5 1h2v1h-2zm5 0h1v1h-1zm-6 1h1v1h-1zm2 0h1v1h-1zm4 0h1v1h-1zm-6 1h1v1h-1zm3 0h1v1h-1zm3 0h1v1h-1zm-7 1h1v1h-1zm5 0h1v1h-1zm2 0h1v1h-1zm0 1h1v1h-1z"/><path id="g2i" d="M2 2h6v1h-6zm7 0h1v1h-1zm-5 1h1v1h-1zm5 0h1v1h-1zm-5 1h1v1h-1zm5 0h1v1h-1zm-5 1h1v1h-1zm3 0h3v1h-3zm-4 1h1v1h-1zm2 0h1v1h-1zm4 0h1v1h-1zm-6 1h1v1h-1zm3 0h1v1h-1zm3 0h1v1h-1zm-8 1h2v1h-2zm6 0h1v1h-1zm2 0h1v1h-1zm0 1h1v1h-1zm-7 1h1v1h-1zm0 1h1v1h-1zm1 1h7v1h-7z"/><path id="g2j" d="M1 2h5v1h-5zm7 0h1v1h-1zm-3 1h1v1h-1zm3 0h1v1h-1zm-7 1h5v1h-5zm7 0h2v1h-2zm-7 1h1v1h-1zm7 0h1v1h-1zm-7 1h1v1h-1zm6 0h4v1h-4zm-6 1h6v1h-6zm7 0h1v1h-1zm-7 2h8v1h-8zm7 1h1v1h-1zm0 1h1v1h-1zm0 1h1v1h-1z"/><path id="g2k" d="M2 2h5v1h-5zm7 0h1v1h-1zm-3 1h1v1h-1zm3 0h1v1h-1zm-3 1h1v1h-1zm3 0h1v1h-1zm-3 1h4v1h-4zm-2 1h2v1h-2zm5 0h1v1h-1zm-8 1h4v1h-4zm8 0h1v1h-1zm-7 2h8v1h-8zm0 1h1v1h-1zm7 0h1v1h-1zm-7 1h1v1h-1zm7 0h1v1h-1zm-7 1h8v1h-8z"/><path id="g2l" d="M3 2h1v1h-1zm3 0h1v1h-1zm3 0h1v1h-1zm-6 1h1v1h-1zm3 0h1v1h-1zm3 0h1v1h-1zm-6 1h1v1h-1zm3 0h1v1h-1zm3 0h1v1h-1zm-7 1h1v1h-1zm2 0h1v1h-1zm2 0h4v1h-4zm-4 1h1v1h-1zm3 0h2v1h-2zm4 0h1v1h-1zm-8 1h1v1h-1zm5 0h1v1h-1zm3 0h1v1h-1zm-8 2h9v1h-9zm8 1h1v1h-1zm0 1h1v1h-1zm0 1h1v1h-1z"/><path id="g2m" d="M4 2h1v1h-1zm5 0h1v1h-1zm-5 1h1v1h-1zm5 0h1v1h-1zm-5 1h1v1h-1zm5 0h1v1h-1zm-5 1h1v1h-1zm5 0h1v1h-1zm-6 1h2v1h-2zm6 0h1v1h-1zm-6 1h1v1h-1zm2 0h1v1h-1zm4 0h3v1h-3zm-6 1h1v1h-1zm3 0h1v1h-1zm3 0h1v1h-1zm-7 1h1v1h-1zm4 0h1v1h-1zm3 0h1v1h-1zm-7 1h1v1h-1zm4 0h1v1h-1zm3 0h1v1h-1zm-8 1h1v1h-1zm8 0h1v1h-1zm0 1h1v1h-1z"/><path id="g2n" d="M3 2h6v1h-6zm-1 1h1v1h-1zm7 0h1v1h-1zm-7 1h8v1h-8zm1 1h6v1h-6zm0 1h1v1h-1zm4 0h1v1h-1zm-4 1h1v1h-1zm4 0h1v1h-1zm-6 1h2v1h-2zm3 0h3v1h-3zm4 0h3v1h-3zm-5 1h6v1h-6zm-1 1h1v1h-1zm7 0h1v1h-1zm-7 1h1v1h-1zm7 0h1v1h-1zm-6 1h6v1h-6z"/><path id="g2o" d="M2 2h4v1h-4zm6 0h1v1h-1zm0 1h1v1h-1zm-7 1h6v1h-6zm7 0h1v1h-1zm-6 1h4v1h-4zm6 0h3v1h-3zm-7 1h1v1h-1zm5 0h1v1h-1zm2 0h1v1h-1zm-6 1h1v1h-1zm3 0h1v1h-1zm3 0h1v1h-1zm-5 1h2v1h-2zm-1 1h7v1h-7zm0 1h1v1h-1zm6 0h1v1h-1zm-6 1h1v1h-1zm6 0h1v1h-1zm-6 1h7v1h-7z"/><path id="g2p" d="M1 2h5v1h-5zm7 0h1v1h-1zm-7 1h1v1h-1zm4 0h1v1h-1zm3 0h1v1h-1zm-7 1h1v1h-1zm4 0h4v1h-4zm-4 1h1v1h-1zm4 0h1v1h-1zm3 0h1v1h-1zm-7 1h1v1h-1zm4 0h4v1h-4zm-4 1h5v1h-5zm7 0h1v1h-1zm-5 2h5v1h-5zm-1 1h1v1h-1zm6 0h1v1h-1zm-6 1h1v1h-1zm6 0h1v1h-1zm-5 1h5v1h-5z"/><path id="g2q" d="M4 2h1v1h-1zm5 0h1v1h-1zm-6 1h1v1h-1zm6 0h1v1h-1zm-6 1h2v1h-2zm3 0h4v1h-4zm-3 1h1v1h-1zm2 0h1v1h-1zm4 0h1v1h-1zm-7 1h1v1h-1zm4 0h1v1h-1zm3 0h1v1h-1zm-8 1h1v1h-1zm1 1h8v1h-8zm7 1h1v1h-1zm-7 1h8v1h-8zm0 1h1v1h-1zm0 1h8v1h-8z"/><path id="g2r" d="M1 2h1v1h-1zm4 0h1v1h-1zm3 0h1v1h-1zm-7 1h1v1h-1zm4 0h1v1h-1zm3 0h1v1h-1zm-7 1h8v1h-8zm0 1h1v1h-1zm4 0h1v1h-1zm3 0h1v1h-1zm-7 1h1v1h-1zm4 0h4v1h-4zm-4 1h5v1h-5zm7 0h1v1h-1zm0 1h1v1h-1zm0 1h1v1h-1zm-6 1h1v1h-1zm0 1h1v1h-1zm0 1h8v1h-8z"/><path id="g2s" d="M2 2h6v1h-6zm7 0h1v1h-1zm-5 1h1v1h-1zm5 0h1v1h-1zm-5 1h1v1h-1zm3 0h3v1h-3zm-4 1h1v1h-1zm2 0h1v1h-1zm4 0h1v1h-1zm-7 1h1v1h-1zm4 0h2v1h-2zm3 0h1v1h-1zm0 1h1v1h-1zm-5 2h5v1h-5zm-2 1h2v1h-2zm7 0h1v1h-1zm-7 1h1v1h-1zm7 0h1v1h-1zm-6 1h6v1h-6z"/><path id="g2t" d="M2 2h4v1h-4zm7 0h1v1h-1zm0 1h1v1h-1zm-8 1h6v1h-6zm8 0h1v1h-1zm-7 1h4v1h-4zm5 0h3v1h-3zm-6 1h1v1h-1zm5 0h1v1h-1zm3 0h1v1h-1zm-8 1h1v1h-1zm5 0h4v1h-4zm-4 1h4v1h-4zm7 0h1v1h-1zm-6 1h6v1h-6zm-1 1h1v1h-1zm7 0h1v1h-1zm-7 1h1v1h-1zm7 0h1v1h-1zm-6 1h6v1h-6z"/><path id="g2u" d="M0 2h7v1h-7zm3 1h1v1h-1zm0 1h1v1h-1zm0 1h1v1h-1zm0 1h1v1h-1zm0 1h1v1h-1zm0 1h1v1h-1zm0 1h1v1h-1zm0 1h1v1h-1zm0 1h1v1h-1z"/><path id="g2v" d="M1 2h6v1h-6zm8 0h1v1h-1zm-3 1h1v1h-1zm3 0h1v1h-1zm-3 1h1v1h-1zm3 0h1v1h-1zm-4 1h1v1h-1zm4 0h2v1h-2zm-5 1h2v1h-2zm5 0h1v1h-1zm-8 1h3v1h-3zm8 0h1v1h-1zm-7 1h1v1h-1zm3 0h1v1h-1zm3 0h1v1h-1zm-6 1h4v1h-4zm6 0h1v1h-1zm-6 1h1v1h-1zm3 0h1v1h-1zm2 0h1v1h-1zm2 0h1v1h-1zm-7 1h1v1h-1zm3 0h2v1h-2zm5 0h1v1h-1zm-8 1h4v1h-4z"/><path id="g2w" d="M1 2h1v1h-1zm0 1h1v1h-1zm0 1h1v1h-1zm0 1h1v1h-1zm0 1h1v1h-1zm0 1h1v1h-1zm0 1h1v1h-1zm0 1h1v1h-1zm0 1h1v1h-1zm0 1h1v1h-1z"/><path id="g2x" d="M1 5h1v1h-1zm4 0h1v1h-1zm-4 1h1v1h-1zm4 0h1v1h-1zm-4 1h1v1h-1zm4 0h1v1h-1zm-4 1h1v1h-1zm4 0h1v1h-1zm-4 1h1v1h-1zm4 0h1v1h-1zm-4 1h1v1h-1zm3 0h2v1h-2zm-2 1h4v1h-4z"/><path id="g2y" d="M1 2h9v1h-9zm7 1h2v1h-2zm-6 1h2v1h-2zm3 0h2v1h-2zm3 0h2v1h-2zm-6 1h2v1h-2zm3 0h2v1h-2zm3 0h2v1h-2zm-6 1h2v1h-2zm3 0h2v1h-2zm3 0h2v1h-2zm-6 1h2v1h-2zm3 0h2v1h-2zm3 0h4v1h-4zm-6 1h2v1h-2zm3 0h2v1h-2zm3 0h2v1h-2zm-6 1h2v1h-2zm3 0h2v1h-2zm3 0h2v1h-2zm-6 1h2v1h-2zm3 0h5v1h-5zm-5 1h10v1h-10zm8 1h2v1h-2z"/><path id="g2z" d="M2 2h5v1h-5zm7 0h2v1h-2zm-8 1h3v1h-3zm4 0h3v1h-3zm4 0h2v1h-2zm-8 1h2v1h-2zm5 0h2v1h-2zm3 0h2v1h-2zm-8 1h2v1h-2zm5 0h2v1h-2zm3 0h2v1h-2zm-7 1h5v1h-5zm7 0h2v1h-2zm-7 2h9v1h-9zm7 1h2v1h-2zm-7 1h9v1h-9zm0 1h2v1h-2zm0 1h9v1h-9z"/><path id="g30" d="M1 2h7v1h-7zm8 0h2v1h-2zm-3 1h2v1h-2zm3 0h2v1h-2zm-3 1h2v1h-2zm3 0h2v1h-2zm-3 1h2v1h-2zm3 0h2v1h-2zm-6 1h4v1h-4zm6 0h4v1h-4zm-6 1h2v1h-2zm6 0h2v1h-2zm-9 1h11v1h-11zm9 1h2v1h-2zm-7 1h2v1h-2zm0 1h2v1h-2zm0 1h10v1h-10z"/><path id="g31" d="M1 2h6v1h-6zm7 0h2v1h-2zm-3 1h2v1h-2zm3 0h2v1h-2zm-3 1h2v1h-2zm3 0h2v1h-2zm-3 1h2v1h-2zm3 0h2v1h-2zm-7 1h6v1h-6zm7 0h2v1h-2zm-7 1h2v1h-2zm7 0h2v1h-2zm-7 1h2v1h-2zm7 0h2v1h-2zm-7 1h2v1h-2zm7 0h2v1h-2zm-7 1h2v1h-2zm5 0h4v1h-4zm-5 1h6v1h-6zm7 0h2v1h-2zm0 1h2v1h-2z"/><path id="g32" d="M2 2h9v1h-9zm2 1h2v1h-2zm5 0h2v1h-2zm-5 1h2v1h-2zm5 0h2v1h-2zm-5 1h2v1h-2zm5 0h2v1h-2zm-5 1h2v1h-2zm5 0h2v1h-2zm-5 1h3v1h-3zm5 0h3v1h-3zm-5 1h3v1h-3zm5 0h2v1h-2zm-6 1h4v1h-4zm6 0h2v1h-2zm-6 1h2v1h-2zm3 0h2v1h-2zm3 0h2v1h-2zm-7 1h2v1h-2zm5 0h4v1h-4zm2 1h2v1h-2z"/><path id="g33" d="M2 2h8v1h-8zm1 1h1v1h-1zm0 1h1v1h-1zm5 0h1v1h-1zm-5 1h1v1h-1zm4 0h1v1h-1zm-4 1h1v1h-1zm4 0h1v1h-1zm-5 1h8v1h-8zm1 2h1v1h-1zm4 0h1v1h-1zm-4 1h1v1h-1zm4 0h1v1h-1zm-6 1h10v1h-10z"/><path id="g34" d="M2 2h5v1h-5zm7 0h1v1h-1zm-3 1h1v1h-1zm3 0h1v1h-1zm-3 1h1v1h-1zm3 0h1v1h-1zm-3 1h1v1h-1zm3 0h3v1h-3zm-5 1h2v1h-2zm5 0h1v1h-1zm-7 1h2v1h-2zm7 0h1v1h-1zm-6 1h6v1h-6zm-1 1h2v1h-2zm7 0h1v1h-1zm-7 1h1v1h-1zm7 0h1v1h-1zm-7 1h2v1h-2zm7 0h1v1h-1zm-6 1h6v1h-6z"/><path id="g35" d="M2 2h8v1h-8zm3 1h1v1h-1zm0 1h1v1h-1zm0 1h2v1h-2zm-1 1h1v1h-1zm3 0h1v1h-1zm-5 1h2v1h-2zm6 0h2v1h-2zm-3 1h1v1h-1zm0 1h1v1h-1zm0 1h1v1h-1zm-4 1h10v1h-10z"/><path id="g36" d="M4 2h1v1h-1zm5 0h1v1h-1zm-5 1h1v1h-1zm5 0h1v1h-1zm-5 1h1v1h-1zm5 0h1v1h-1zm-5 1h1v1h-1zm5 0h1v1h-1zm-6 1h2v1h-2zm6 0h1v1h-1zm-6 1h1v1h-1zm2 0h1v1h-1zm4 0h1v1h-1zm-6 1h1v1h-1zm3 0h1v1h-1zm3 0h1v1h-1zm-7 1h1v1h-1zm4 0h1v1h-1zm3 0h1v1h-1zm-7 1h1v1h-1zm4 0h1v1h-1zm3 0h1v1h-1zm-8 1h1v1h-1zm8 0h1v1h-1zm0 1h1v1h-1z"/><path id="g37" d="M1 2h4v1h-4zm6 0h1v1h-1zm2 0h1v1h-1zm-8 1h1v1h-1zm6 0h1v1h-1zm2 0h1v1h-1zm-8 1h7v1h-7zm8 0h1v1h-1zm-8 1h1v1h-1zm6 0h1v1h-1zm2 0h1v1h-1zm-8 1h1v1h-1zm6 0h1v1h-1zm2 0h1v1h-1zm-8 1h5v1h-5zm6 0h1v1h-1zm2 0h1v1h-1zm-7 2h8v1h-8zm-1 1h1v1h-1zm8 0h1v1h-1zm-8 1h1v1h-1zm8 0h1v1h-1zm-7 1h8v1h-8z"/><path id="g38" d="M3 2h2v1h-2zm6 0h1v1h-1zm-7 1h1v1h-1zm3 0h1v1h-1zm4 0h1v1h-1zm-8 1h1v1h-1zm5 0h1v1h-1zm3 0h1v1h-1zm-8 1h1v1h-1zm5 0h1v1h-1zm3 0h1v1h-1zm-8 1h1v1h-1zm5 0h1v1h-1zm3 0h1v1h-1zm-8 1h1v1h-1zm5 0h1v1h-1zm3 0h1v1h-1zm-8 1h1v1h-1zm5 0h1v1h-1zm3 0h1v1h-1zm-8 1h1v1h-1zm5 0h1v1h-1zm3 0h1v1h-1zm-7 1h1v1h-1zm3 0h1v1h-1zm4 0h1v1h-1zm-6 1h2v1h-2zm6 0h1v1h-1zm0 1h1v1h-1z"/><path id="g39" d="M2 2h8v1h-8zm7 1h1v1h-1zm-7 1h8v1h-8zm0 1h1v1h-1zm1 1h6v1h-6zm-2 1h10v1h-10zm1 2h8v1h-8zm0 1h1v1h-1zm7 0h1v1h-1zm-7 1h1v1h-1zm7 0h1v1h-1zm-7 1h8v1h-8z"/><path id="g3a" d="M4 2h1v1h-1zm5 0h1v1h-1zm-5 1h1v1h-1zm5 0h1v1h-1zm-5 1h1v1h-1zm5 0h1v1h-1zm-6 1h1v1h-1zm2 0h1v1h-1zm4 0h3v1h-3zm-7 1h1v1h-1zm4 0h1v1h-1zm3 0h1v1h-1zm-8 1h1v1h-1zm6 0h1v1h-1zm2 0h1v1h-1zm-6 2h6v1h-6zm-1 1h1v1h-1zm7 0h1v1h-1zm-7 1h1v1h-1zm7 0h1v1h-1zm-6 1h6v1h-6z"/><path id="g3b" d="M1 2h4v1h-4zm5 0h1v1h-1zm3 0h1v1h-1zm-8 1h1v1h-1zm5 0h1v1h-1zm3 0h1v1h-1zm-8 1h1v1h-1zm5 0h1v1h-1zm3 0h1v1h-1zm-8 1h1v1h-1zm5 0h1v1h-1zm3 0h1v1h-1zm-8 1h4v1h-4zm5 0h1v1h-1zm3 0h1v1h-1zm-8 1h1v1h-1zm5 0h4v1h-4zm-5 1h1v1h-1zm5 0h1v1h-1zm3 0h1v1h-1zm-8 1h1v1h-1zm5 0h1v1h-1zm3 0h1v1h-1zm-8 1h1v1h-1zm4 0h2v1h-2zm4 0h1v1h-1zm-8 1h4v1h-4zm5 0h1v1h-1zm3 0h1v1h-1zm-3 1h1v1h-1zm3 0h1v1h-1z"/><path id="g3c" d="M2 2h8v1h-8zm3 1h2v1h-2zm-1 1h1v1h-1zm2 0h2v1h-2zm-5 1h3v1h-3zm7 0h2v1h-2zm-7 2h10v1h-10zm2 2h6v1h-6zm-1 1h1v1h-1zm7 0h1v1h-1zm-7 1h1v1h-1zm7 0h1v1h-1zm-6 1h6v1h-6z"/><path id="g3d" d="M3 2h1v1h-1zm0 1h2v1h-2zm-1 1h1v1h-1zm2 0h1v1h-1zm-2 1h1v1h-1zm2 0h1v1h-1zm-2 1h1v1h-1zm3 0h1v1h-1zm-4 1h1v1h-1zm4 0h1v1h-1zm-4 1h5v1h-5zm0 1h1v1h-1zm5 0h1v1h-1zm-6 1h1v1h-1zm6 0h1v1h-1zm-6 1h1v1h-1zm6 0h1v1h-1z"/><path id="g3e" d="M1 2h5v1h-5zm0 1h1v1h-1zm5 0h1v1h-1zm-5 1h1v1h-1zm5 0h1v1h-1zm-5 1h1v1h-1zm5 0h1v1h-1zm-5 1h5v1h-5zm0 1h1v1h-1zm5 0h1v1h-1zm-5 1h1v1h-1zm5 0h1v1h-1zm-5 1h1v1h-1zm5 0h1v1h-1zm-5 1h1v1h-1zm5 0h1v1h-1zm-5 1h5v1h-5z"/><path id="g3f" d="M1 2h1v1h-1zm0 1h1v1h-1zm0 1h1v1h-1zm-1 1h3v1h-3zm1 1h1v1h-1zm0 1h1v1h-1zm0 1h1v1h-1zm0 1h1v1h-1zm0 1h1v1h-1zm0 1h2v1h-2z"/><path id="g3g" d="M2 5h4v1h-4zm-1 1h2v1h-2zm4 0h2v1h-2zm-4 1h1v1h-1zm5 0h1v1h-1zm-5 1h1v1h-1zm5 0h1v1h-1zm-5 1h1v1h-1zm5 0h1v1h-1zm-5 1h2v1h-2zm4 0h2v1h-2zm-3 1h4v1h-4z"/><path id="g3h" d="M1 5h3v1h-3zm0 1h1v1h-1zm0 1h1v1h-1zm0 1h1v1h-1zm0 1h1v1h-1zm0 1h1v1h-1zm0 1h1v1h-1z"/><path id="g3i" d="M1 5h1v1h-1zm2 0h2v1h-2zm-2 1h2v1h-2zm4 0h1v1h-1zm-4 1h1v1h-1zm4 0h1v1h-1zm-4 1h1v1h-1zm4 0h1v1h-1zm-4 1h1v1h-1zm4 0h1v1h-1zm-4 1h1v1h-1zm4 0h1v1h-1zm-4 1h1v1h-1zm4 0h1v1h-1z"/><path id="g3j" d="M0 5h1v1h-1zm4 0h1v1h-1zm-4 1h1v1h-1zm4 0h1v1h-1zm-3 1h1v1h-1zm2 0h1v1h-1zm-2 1h1v1h-1zm2 0h1v1h-1zm-2 1h1v1h-1zm2 0h1v1h-1zm-2 1h2v1h-2zm1 1h1v1h-1z"/><path id="g3k" d="M3 2h4v1h-4zm-1 1h1v1h-1zm4 0h2v1h-2zm-5 1h1v1h-1zm6 0h1v1h-1zm-6 1h1v1h-1zm0 1h1v1h-1zm0 1h1v1h-1zm0 1h1v1h-1zm0 1h1v1h-1zm6 0h1v1h-1zm-5 1h1v1h-1zm4 0h2v1h-2zm-3 1h4v1h-4z"/><path id="g3l" d="M1 2h5v1h-5zm0 1h1v1h-1zm5 0h1v1h-1zm-5 1h1v1h-1zm5 0h2v1h-2zm-5 1h1v1h-1zm6 0h1v1h-1zm-6 1h1v1h-1zm6 0h1v1h-1zm-6 1h1v1h-1zm6 0h1v1h-1zm-6 1h1v1h-1zm6 0h1v1h-1zm-6 1h1v1h-1zm5 0h2v1h-2zm-5 1h1v1h-1zm5 0h1v1h-1zm-5 1h5v1h-5z"/><path id="g3m" d="M2 2h8v1h-8zm3 1h1v1h-1zm0 1h2v1h-2zm-3 1h3v1h-3zm5 0h3v1h-3zm-2 1h1v1h-1zm-4 1h10v1h-10zm2 2h6v1h-6zm-1 1h1v1h-1zm7 0h1v1h-1zm-7 1h1v1h-1zm7 0h1v1h-1zm-6 1h6v1h-6z"/><path id="g3n" d="M2 2h8v1h-8zm0 1h1v1h-1zm7 0h1v1h-1zm-7 1h1v1h-1zm7 0h1v1h-1zm-7 1h8v1h-8zm4 1h1v1h-1zm-5 1h10v1h-10zm1 2h8v1h-8zm7 1h1v1h-1zm0 1h1v1h-1zm0 1h1v1h-1z"/><path id="g3o" d="M2 2h6v1h-6zm7 0h1v1h-1zm-5 1h1v1h-1zm5 0h1v1h-1zm-5 1h1v1h-1zm5 0h1v1h-1zm-5 1h1v1h-1zm5 0h1v1h-1zm-5 1h1v1h-1zm5 0h1v1h-1zm-5 1h2v1h-2zm5 0h2v1h-2zm-5 1h2v1h-2zm5 0h1v1h-1zm-6 1h1v1h-1zm2 0h1v1h-1zm4 0h1v1h-1zm-6 1h1v1h-1zm3 0h1v1h-1zm3 0h1v1h-1zm-7 1h1v1h-1zm5 0h1v1h-1zm2 0h1v1h-1zm0 1h1v1h-1z"/><path id="g3p" d="M2 2h8v1h-8zm7 1h1v1h-1zm-7 1h8v1h-8zm0 1h1v1h-1zm0 1h8v1h-8zm-1 2h10v1h-10zm2 1h1v1h-1zm5 0h1v1h-1zm-5 1h1v1h-1zm5 0h1v1h-1zm-5 1h1v1h-1zm5 0h1v1h-1zm-5 1h1v1h-1zm5 0h1v1h-1z"/><path id="g3q" d="M1 2h1v1h-1zm4 0h1v1h-1zm3 0h1v1h-1zm-7 1h8v1h-8zm0 1h1v1h-1zm4 0h1v1h-1zm3 0h1v1h-1zm-7 1h1v1h-1zm4 0h4v1h-4zm-4 1h5v1h-5zm7 0h1v1h-1zm-6 2h7v1h-7zm6 1h1v1h-1zm-6 1h7v1h-7zm-1 1h1v1h-1zm1 1h7v1h-7z"/><path id="g3r" d="M1 2h5v1h-5zm7 0h1v1h-1zm-3 1h1v1h-1zm3 0h1v1h-1zm-3 1h1v1h-1zm3 0h1v1h-1zm-3 1h1v1h-1zm3 0h1v1h-1zm-7 1h5v1h-5zm7 0h1v1h-1zm-7 1h1v1h-1zm7 0h1v1h-1zm-7 1h1v1h-1zm7 0h1v1h-1zm-7 1h1v1h-1zm7 0h1v1h-1zm-7 1h1v1h-1zm5 0h3v1h-3zm-5 1h5v1h-5zm7 0h1v1h-1zm0 1h1v1h-1z"/><path id="g3s" d="M2 2h8v1h-8zm0 1h1v1h-1zm0 1h1v1h-1zm0 1h8v1h-8zm0 1h1v1h-1zm0 1h1v1h-1zm0 1h8v1h-8zm-1 3h10v1h-10z"/><path id="g3t" d="M3 2h1v1h-1zm4 0h1v1h-1zm2 0h1v1h-1zm-6 1h1v1h-1zm4 0h1v1h-1zm2 0h1v1h-1zm-6 1h1v1h-1zm4 0h1v1h-1zm2 0h1v1h-1zm-6 1h1v1h-1zm4 0h1v1h-1zm2 0h1v1h-1zm-6 1h1v1h-1zm4 0h1v1h-1zm2 0h1v1h-1zm-7 1h1v1h-1zm2 0h1v1h-1zm3 0h3v1h-3zm-5 1h1v1h-1zm2 0h1v1h-1zm3 0h1v1h-1zm2 0h1v1h-1zm-8 1h1v1h-1zm4 0h1v1h-1zm2 0h1v1h-1zm2 0h1v1h-1zm-8 1h1v1h-1zm4 0h1v1h-1zm2 0h1v1h-1zm2 0h1v1h-1zm-2 1h1v1h-1zm2 0h1v1h-1zm-2 1h1v1h-1zm2 0h1v1h-1z"/><path id="g3u" d="M2 2h8v1h-8zm7 1h1v1h-1zm0 1h1v1h-1zm-7 1h8v1h-8zm0 1h1v1h-1zm0 1h8v1h-8zm0 1h8v1h-8zm4 1h1v1h-1zm0 1h1v1h-1zm-5 1h10v1h-10z"/><path id="g3v" d="M2 2h6v1h-6zm7 0h1v1h-1zm-5 1h1v1h-1zm5 0h1v1h-1zm-5 1h1v1h-1zm5 0h1v1h-1zm-5 1h2v1h-2zm5 0h2v1h-2zm-6 1h1v1h-1zm3 0h1v1h-1zm3 0h1v1h-1zm-7 1h1v1h-1zm5 0h1v1h-1zm2 0h1v1h-1zm-7 2h7v1h-7zm7 1h1v1h-1zm0 1h1v1h-1zm0 1h1v1h-1z"/><path id="g3w" d="M4 2h1v1h-1zm5 0h1v1h-1zm-6 1h1v1h-1zm6 0h1v1h-1zm-6 1h2v1h-2zm3 0h4v1h-4zm-3 1h1v1h-1zm2 0h1v1h-1zm4 0h1v1h-1zm-7 1h1v1h-1zm4 0h1v1h-1zm3 0h1v1h-1zm-8 1h1v1h-1zm8 0h1v1h-1zm-6 2h6v1h-6zm-1 1h1v1h-1zm7 0h1v1h-1zm-7 1h1v1h-1zm7 0h1v1h-1zm-6 1h6v1h-6z"/><path id="g3x" d="M2 2h4v1h-4zm7 0h1v1h-1zm-8 1h1v1h-1zm4 0h5v1h-5zm-4 1h1v1h-1zm4 0h2v1h-2zm4 0h1v1h-1zm-8 1h1v1h-1zm4 0h5v1h-5zm-3 1h3v1h-3zm7 0h1v1h-1zm-7 2h8v1h-8zm7 1h1v1h-1zm-7 1h8v1h-8zm0 1h1v1h-1zm0 1h8v1h-8z"/><path id="g3y" d="M2 2h1v1h-1zm7 0h1v1h-1zm-7 1h8v1h-8zm0 1h1v1h-1zm7 0h1v1h-1zm-7 1h8v1h-8zm4 1h1v1h-1zm-5 1h10v1h-10zm1 2h8v1h-8zm7 1h1v1h-1zm0 1h1v1h-1zm0 1h1v1h-1z"/><path id="g3z" d="M2 2h5v1h-5zm7 0h1v1h-1zm-3 1h4v1h-4zm0 1h1v1h-1zm3 0h1v1h-1zm-3 1h1v1h-1zm3 0h1v1h-1zm-4 1h1v1h-1zm2 0h3v1h-3zm-6 1h4v1h-4zm8 0h1v1h-1zm-6 1h6v1h-6zm-1 1h2v1h-2zm6 0h2v1h-2zm-6 1h1v1h-1zm7 0h1v1h-1zm-7 1h2v1h-2zm6 0h2v1h-2zm-5 1h6v1h-6z"/><path id="g40" d="M4 2h1v1h-1zm5 0h1v1h-1zm-5 1h1v1h-1zm5 0h1v1h-1zm-5 1h1v1h-1zm5 0h1v1h-1zm-6 1h1v1h-1zm2 0h1v1h-1zm4 0h3v1h-3zm-7 1h1v1h-1zm4 0h1v1h-1zm3 0h1v1h-1zm-8 1h1v1h-1zm6 0h1v1h-1zm2 0h1v1h-1zm-7 2h8v1h-8zm7 1h1v1h-1zm0 1h1v1h-1zm0 1h1v1h-1z"/><path id="g41" d="M1 2h5v1h-5zm6 0h1v1h-1zm2 0h1v1h-1zm-6 1h1v1h-1zm4 0h1v1h-1zm2 0h1v1h-1zm-6 1h1v1h-1zm4 0h1v1h-1zm2 0h1v1h-1zm-6 1h1v1h-1zm4 0h1v1h-1zm2 0h1v1h-1zm-6 1h1v1h-1zm2 0h3v1h-3zm4 0h1v1h-1zm-6 1h1v1h-1zm4 0h1v1h-1zm2 0h1v1h-1zm-7 1h2v1h-2zm5 0h1v1h-1zm2 0h1v1h-1zm-7 1h1v1h-1zm2 0h1v1h-1zm3 0h1v1h-1zm2 0h1v1h-1zm-8 1h1v1h-1zm4 0h1v1h-1zm2 0h1v1h-1zm2 0h1v1h-1zm-4 1h1v1h-1zm2 0h1v1h-1zm2 0h1v1h-1zm-2 1h1v1h-1zm2 0h1v1h-1z"/><path id="g42" d="M2 5h4v1h-4zm-1 1h6v1h-6zm0 1h2v1h-2zm4 0h2v1h-2zm-4 1h2v1h-2zm4 0h2v1h-2zm-4 1h2v1h-2zm4 0h2v1h-2zm-4 1h6v1h-6zm1 1h4v1h-4z"/><path id="g43" d="M1 5h5v1h-5zm0 1h6v1h-6zm0 1h2v1h-2zm4 0h2v1h-2zm-4 1h2v1h-2zm4 0h2v1h-2zm-4 1h2v1h-2zm4 0h2v1h-2zm-4 1h6v1h-6zm0 1h5v1h-5zm0 1h2v1h-2zm0 1h2v1h-2z"/><path id="g44" d="M2 3h2v1h-2zm0 1h2v1h-2zm-1 1h4v1h-4zm1 1h2v1h-2zm0 1h2v1h-2zm0 1h2v1h-2zm0 1h2v1h-2zm0 1h2v1h-2zm0 1h3v1h-3z"/><path id="g45" d="M3 3h3v1h-3zm0 2h2v1h-2zm0 1h2v1h-2zm0 1h2v1h-2zm0 1h2v1h-2zm0 1h2v1h-2zm0 1h2v1h-2zm0 1h2v1h-2z"/><path id="g46" d="M1 5h5v1h-5zm0 1h5v1h-5zm0 1h2v1h-2zm3 0h2v1h-2zm-3 1h2v1h-2zm3 0h2v1h-2zm-3 1h2v1h-2zm3 0h2v1h-2zm-3 1h2v1h-2zm3 0h2v1h-2zm-3 1h2v1h-2zm3 0h2v1h-2z"/><path id="g47" d="M3 4h2v1h-2zm0 1h2v1h-2zm0 1h2v1h-2zm-2 1h6v1h-6zm2 1h2v1h-2zm0 1h2v1h-2zm0 1h2v1h-2zm0 1h2v1h-2z"/><path id="g48" d="M2 5h4v1h-4zm-1 1h2v1h-2zm4 0h2v1h-2zm-4 1h2v1h-2zm1 1h4v1h-4zm3 1h2v1h-2zm-4 1h2v1h-2zm4 0h2v1h-2zm-3 1h4v1h-4z"/><path id="g49" d="M0 12h7v1h-7z"/><path id="g4a" d="M1 3h2v1h-2zm4 0h2v1h-2zm-4 1h6v1h-6zm0 1h6v1h-6zm0 1h6v1h-6zm0 1h6v1h-6zm0 1h6v1h-6zm0 1h6v1h-6zm0 1h6v1h-6zm0 1h6v1h-6z"/><path id="g4b" d="M3 3h2v1h-2zm-2 1h4v1h-4zm2 1h2v1h-2zm0 1h2v1h-2zm0 1h2v1h-2zm0 1h2v1h-2zm0 1h2v1h-2zm0 1h2v1h-2zm0 1h2v1h-2z"/><path id="g4c" d="M1 3h5v1h-5zm0 1h2v1h-2zm0 1h5v1h-5zm0 1h2v1h-2zm3 0h3v1h-3zm1 1h2v1h-2zm0 1h2v1h-2zm0 1h2v1h-2zm-4 1h2v1h-2zm3 0h2v1h-2zm-2 1h4v1h-4z"/><path id="g4d" d="M4 2h2v1h-2zm5 0h2v1h-2zm-5 1h2v1h-2zm5 0h2v1h-2zm-5 1h2v1h-2zm5 0h2v1h-2zm-5 1h2v1h-2zm5 0h2v1h-2zm-6 1h3v1h-3zm6 0h2v1h-2zm-6 1h4v1h-4zm6 0h4v1h-4zm-6 1h2v1h-2zm3 0h2v1h-2zm3 0h2v1h-2zm-7 1h2v1h-2zm4 0h2v1h-2zm3 0h2v1h-2zm-7 1h2v1h-2zm4 0h2v1h-2zm3 0h2v1h-2zm-8 1h2v1h-2zm8 0h2v1h-2zm0 1h2v1h-2z"/><path id="g4e" d="M2 2h2v1h-2zm7 0h2v1h-2zm-7 1h9v1h-9zm0 1h2v1h-2zm7 0h2v1h-2zm-7 1h2v1h-2zm7 0h2v1h-2zm-7 1h9v1h-9zm3 1h2v1h-2zm-4 1h11v1h-11zm1 2h2v1h-2zm0 1h2v1h-2zm0 1h9v1h-9z"/><path id="g4f" d="M2 5h3v1h-3zm-1 1h2v1h-2zm3 0h2v1h-2zm-3 1h1v1h-1zm4 0h1v1h-1zm-4 1h1v1h-1zm4 0h1v1h-1zm-4 1h1v1h-1zm4 0h1v1h-1zm-4 1h2v1h-2zm3 0h2v1h-2zm-2 1h3v1h-3z"/><path id="g4g" d="M1 5h1v1h-1zm2 0h2v1h-2zm-2 1h2v1h-2zm3 0h2v1h-2zm-3 1h1v1h-1zm4 0h1v1h-1zm-4 1h1v1h-1zm4 0h1v1h-1zm-4 1h1v1h-1zm4 0h1v1h-1zm-4 1h2v1h-2zm3 0h2v1h-2zm-3 1h1v1h-1zm2 0h2v1h-2zm-2 1h1v1h-1zm0 1h1v1h-1z"/><path id="g4h" d="M2 3h1v1h-1zm0 1h1v1h-1zm-1 1h3v1h-3zm1 1h1v1h-1zm0 1h1v1h-1zm0 1h1v1h-1zm0 1h1v1h-1zm0 1h1v1h-1zm0 1h2v1h-2z"/><path id="g4i" d="M3 3h2v1h-2zm0 2h1v1h-1zm0 1h1v1h-1zm0 1h1v1h-1zm0 1h1v1h-1zm0 1h1v1h-1zm0 1h1v1h-1zm0 1h1v1h-1z"/><path id="g4j" d="M1 5h1v1h-1zm2 0h2v1h-2zm-2 1h2v1h-2zm3 0h1v1h-1zm-3 1h1v1h-1zm3 0h1v1h-1zm-3 1h1v1h-1zm3 0h1v1h-1zm-3 1h1v1h-1zm3 0h1v1h-1zm-3 1h1v1h-1zm3 0h1v1h-1zm-3 1h1v1h-1zm3 0h1v1h-1z"/><path id="g4k" d="M3 4h1v1h-1zm0 1h1v1h-1zm0 1h1v1h-1zm-2 1h5v1h-5zm2 1h1v1h-1zm0 1h1v1h-1zm0 1h1v1h-1zm0 1h1v1h-1z"/><path id="g4l" d="M2 5h3v1h-3zm-1 1h1v1h-1zm4 0h1v1h-1zm-4 1h1v1h-1zm1 1h3v1h-3zm3 1h1v1h-1zm-4 1h1v1h-1zm4 0h1v1h-1zm-3 1h3v1h-3z"/><path id="g4m" d="M0 12h6v1h-6z"/><path id="g4n" d="M1 3h1v1h-1zm4 0h1v1h-1zm-4 1h2v1h-2zm3 0h2v1h-2zm-3 1h2v1h-2zm3 0h2v1h-2zm-3 1h2v1h-2zm3 0h2v1h-2zm-3 1h2v1h-2zm3 0h2v1h-2zm-3 1h3v1h-3zm4 0h1v1h-1zm-4 1h3v1h-3zm4 0h1v1h-1zm-4 1h1v1h-1zm2 0h1v1h-1zm2 0h1v1h-1zm-4 1h1v1h-1zm2 0h1v1h-1zm2 0h1v1h-1z"/><path id="g4o" d="M3 3h1v1h-1zm-2 1h3v1h-3zm2 1h1v1h-1zm0 1h1v1h-1zm0 1h1v1h-1zm0 1h1v1h-1zm0 1h1v1h-1zm0 1h1v1h-1zm0 1h1v1h-1z"/><path id="g4p" d="M4 3h1v1h-1zm-1 1h2v1h-2zm-1 1h1v1h-1zm2 0h1v1h-1zm-2 1h1v1h-1zm2 0h1v1h-1zm-3 1h1v1h-1zm3 0h1v1h-1zm-4 1h1v1h-1zm4 0h1v1h-1zm-4 1h6v1h-6zm4 1h1v1h-1zm0 1h1v1h-1z"/><path id="g4q" d="M4 2h1v1h-1zm5 0h1v1h-1zm-5 1h1v1h-1zm5 0h1v1h-1zm-5 1h1v1h-1zm5 0h1v1h-1zm-5 1h1v1h-1zm5 0h1v1h-1zm-6 1h2v1h-2zm6 0h1v1h-1zm-6 1h1v1h-1zm2 0h1v1h-1zm4 0h3v1h-3zm-6 1h1v1h-1zm3 0h1v1h-1zm3 0h1v1h-1zm-7 1h1v1h-1zm4 0h1v1h-1zm3 0h1v1h-1zm-7 1h1v1h-1zm4 0h1v1h-1zm3 0h1v1h-1zm-8 1h1v1h-1zm8 0h1v1h-1zm0 1h1v1h-1z"/><path id="g4r" d="M2 2h1v1h-1zm7 0h1v1h-1zm-7 1h8v1h-8zm0 1h1v1h-1zm7 0h1v1h-1zm-7 1h1v1h-1zm7 0h1v1h-1zm-7 1h8v1h-8zm3 1h1v1h-1zm-4 1h10v1h-10zm1 2h1v1h-1zm0 1h1v1h-1zm0 1h8v1h-8z"/><path id="g4s" d="M1 3h5v1h-5zm0 1h1v1h-1zm0 1h1v1h-1zm0 1h1v1h-1zm0 1h5v1h-5zm0 1h1v1h-1zm0 1h1v1h-1zm0 1h1v1h-1zm0 1h1v1h-1z"/><path id="g4t" d="M1 3h4v1h-4zm0 1h1v1h-1zm4 0h1v1h-1zm-4 1h1v1h-1zm4 0h1v1h-1zm-4 1h1v1h-1zm4 0h1v1h-1zm-4 1h4v1h-4zm0 1h1v1h-1zm4 0h1v1h-1zm-4 1h1v1h-1zm4 0h1v1h-1zm-4 1h1v1h-1zm4 0h1v1h-1zm-4 1h4v1h-4z"/><path id="g4u" d="M0 2h1v1h-1zm5 0h1v1h-1zm-5 1h1v1h-1zm3 0h1v1h-1zm2 0h1v1h-1zm-5 1h1v1h-1zm2 0h2v1h-2zm3 0h1v1h-1zm-5 1h1v1h-1zm2 0h2v1h-2zm3 0h1v1h-1zm-5 1h1v1h-1zm2 0h2v1h-2zm3 0h1v1h-1zm-5 1h1v1h-1zm2 0h3v1h-3zm-2 1h2v1h-2zm3 0h2v1h-2zm-3 1h2v1h-2zm3 0h2v1h-2zm-2 1h1v1h-1zm3 0h1v1h-1zm-3 1h1v1h-1zm3 0h1v1h-1z"/><path id="g4v" d="M2 3h3v1h-3zm-1 1h1v1h-1zm4 0h1v1h-1zm0 1h1v1h-1zm-2 1h2v1h-2zm2 1h1v1h-1zm0 1h1v1h-1zm-4 1h1v1h-1zm4 0h1v1h-1zm-4 1h1v1h-1zm3 0h2v1h-2zm-2 1h3v1h-3z"/><path id="g4w" d="M5 1h6v1h-6zm-3 2h12v1h-12zm5 1h2v1h-2zm0 1h2v1h-2zm-2 1h2v1h-2zm4 0h2v1h-2zm-7 1h3v1h-3zm9 0h3v1h-3zm-10 2h14v1h-14zm6 1h2v1h-2zm0 1h2v1h-2zm0 1h2v1h-2zm0 1h2v1h-2zm0 1h1v1h-1z"/><path id="g4x" d="M10 0h1v1h-1zm3 0h1v1h-1zm-8 1h1v1h-1zm5 0h1v1h-1zm3 0h1v1h-1zm-8 1h1v1h-1zm5 0h1v1h-1zm3 0h1v1h-1zm-8 1h1v1h-1zm5 0h1v1h-1zm3 0h1v1h-1zm-8 1h1v1h-1zm5 0h1v1h-1zm3 0h1v1h-1zm-8 1h1v1h-1zm5 0h1v1h-1zm3 0h1v1h-1zm-9 1h7v1h-7zm9 0h1v1h-1zm-9 1h2v1h-2zm6 0h1v1h-1zm3 0h1v1h-1zm-9 1h1v1h-1zm2 0h1v1h-1zm4 0h1v1h-1zm3 0h1v1h-1zm-10 1h1v1h-1zm3 0h2v1h-2zm4 0h1v1h-1zm3 0h1v1h-1zm-10 1h1v1h-1zm4 0h1v1h-1zm3 0h1v1h-1zm3 0h1v1h-1zm-11 1h2v1h-2zm5 0h1v1h-1zm3 0h1v1h-1zm3 0h1v1h-1zm-11 1h1v1h-1zm6 0h1v1h-1zm2 0h1v1h-1zm3 0h1v1h-1zm-3 1h1v1h-1zm3 0h1v1h-1zm-3 1h1v1h-1zm3 0h1v1h-1z"/><path id="g4y" d="M13 0h1v1h-1zm-8 1h1v1h-1zm8 0h1v1h-1zm-8 1h1v1h-1zm8 0h1v1h-1zm-8 1h1v1h-1zm8 0h1v1h-1zm-9 1h1v1h-1zm4 0h6v1h-6zm-4 1h3v1h-3zm9 0h1v1h-1zm-10 1h2v1h-2zm4 0h1v1h-1zm6 0h1v1h-1zm-10 1h1v1h-1zm5 0h1v1h-1zm5 0h1v1h-1zm-11 1h1v1h-1zm7 0h1v1h-1zm4 0h1v1h-1zm-12 1h1v1h-1zm12 0h1v1h-1zm-10 1h1v1h-1zm0 1h1v1h-1zm0 1h1v1h-1zm0 1h1v1h-1zm0 1h11v1h-11z"/><path id="g4z" d="M13 0h1v1h-1zm-8 1h4v1h-4zm8 0h1v1h-1zm-9 1h1v1h-1zm5 0h1v1h-1zm4 0h1v1h-1zm-10 1h1v1h-1zm7 0h1v1h-1zm3 0h1v1h-1zm-10 1h1v1h-1zm7 0h1v1h-1zm3 0h1v1h-1zm-10 1h1v1h-1zm7 0h1v1h-1zm3 0h1v1h-1zm-9 1h1v1h-1zm5 0h1v1h-1zm4 0h1v1h-1zm-8 1h4v1h-4zm8 0h1v1h-1zm0 1h1v1h-1zm0 1h1v1h-1zm0 1h1v1h-1zm0 1h1v1h-1zm-11 1h10v1h-10zm11 0h1v1h-1zm0 1h1v1h-1zm0 1h1v1h-1z"/><path id="g50" d="M10 0h1v1h-1zm3 0h1v1h-1zm-8 1h1v1h-1zm5 0h1v1h-1zm3 0h1v1h-1zm-8 1h1v1h-1zm5 0h1v1h-1zm3 0h1v1h-1zm-8 1h1v1h-1zm5 0h1v1h-1zm3 0h1v1h-1zm-9 1h2v1h-2zm6 0h1v1h-1zm3 0h1v1h-1zm-9 1h1v1h-1zm2 0h1v1h-1zm4 0h4v1h-4zm-7 1h1v1h-1zm4 0h1v1h-1zm3 0h1v1h-1zm3 0h1v1h-1zm-11 1h1v1h-1zm6 0h1v1h-1zm2 0h1v1h-1zm3 0h1v1h-1zm-5 1h1v1h-1zm-6 2h12v1h-12zm11 1h1v1h-1zm0 1h1v1h-1zm0 1h1v1h-1zm0 1h1v1h-1z"/><path id="g51" d="M13 0h1v1h-1zm-7 1h1v1h-1zm7 0h1v1h-1zm-7 1h1v1h-1zm7 0h1v1h-1zm-8 1h2v1h-2zm8 0h1v1h-1zm-8 1h1v1h-1zm2 0h2v1h-2zm6 0h3v1h-3zm-9 1h1v1h-1zm4 0h2v1h-2zm5 0h1v1h-1zm-10 1h2v1h-2zm6 0h1v1h-1zm4 0h1v1h-1zm-11 1h2v1h-2zm8 0h1v1h-1zm3 0h1v1h-1zm0 1h1v1h-1zm-8 2h7v1h-7zm-2 1h2v1h-2zm9 0h2v1h-2zm-9 1h1v1h-1zm10 0h1v1h-1zm-10 1h2v1h-2zm9 0h2v1h-2zm-7 1h7v1h-7z"/><path id="g52" d="M2 1h11v1h-11zm11 1h1v1h-1zm0 1h1v1h-1zm0 1h1v1h-1zm-12 1h14v1h-14zm7 1h1v1h-1zm0 1h1v1h-1zm0 1h1v1h-1zm-6 1h6v1h-6zm7 0h5v1h-5zm-2 1h1v1h-1zm6 0h1v1h-1zm-11 1h6v1h-6zm11 0h1v1h-1zm-11 1h1v1h-1zm11 0h1v1h-1zm-11 1h1v1h-1zm11 0h1v1h-1zm-11 1h6v1h-6zm11 0h1v1h-1z"/><path id="g53" d="M13 0h1v1h-1zm-11 1h7v1h-7zm11 0h1v1h-1zm-5 1h1v1h-1zm5 0h1v1h-1zm-5 1h1v1h-1zm5 0h1v1h-1zm-5 1h1v1h-1zm5 0h1v1h-1zm-5 1h1v1h-1zm5 0h1v1h-1zm-5 1h1v1h-1zm5 0h1v1h-1zm-5 1h1v1h-1zm5 0h1v1h-1zm-6 1h2v1h-2zm6 0h1v1h-1zm-6 1h1v1h-1zm6 0h1v1h-1zm-7 1h2v1h-2zm7 0h1v1h-1zm-8 1h2v1h-2zm8 0h1v1h-1zm-10 1h3v1h-3zm10 0h1v1h-1zm-11 1h1v1h-1zm11 0h1v1h-1zm0 1h1v1h-1z"/><path id="g54" d="M4 2h6v1h-6zm-1 1h2v1h-2zm6 0h2v1h-2zm-7 1h2v1h-2zm8 0h2v1h-2zm-8 1h2v1h-2zm8 0h2v1h-2zm-8 1h3v1h-3zm7 0h3v1h-3zm-6 1h8v1h-8zm1 1h6v1h-6zm2 1h2v1h-2zm0 1h2v1h-2zm-5 1h12v1h-12z"/><path id="g55" d="M2 2h9v1h-9zm7 1h2v1h-2zm-7 1h9v1h-9zm0 1h2v1h-2zm0 1h9v1h-9zm-1 2h11v1h-11zm2 1h2v1h-2zm5 0h2v1h-2zm-5 1h2v1h-2zm5 0h2v1h-2zm-5 1h2v1h-2zm5 0h2v1h-2zm-5 1h2v1h-2zm5 0h2v1h-2z"/><path id="g56" d="M2 2h8v1h-8zm3 1h2v1h-2zm-1 1h2v1h-2zm3 0h1v1h-1zm-6 1h3v1h-3zm7 0h2v1h-2zm-6 2h9v1h-9zm0 1h8v1h-8zm0 1h8v1h-8zm0 1h8v1h-8zm0 1h1v1h-1zm0 1h8v1h-8z"/><path id="g57" d="M3 4h1v1h-1zm0 1h1v1h-1zm0 1h1v1h-1zm-3 1h7v1h-7zm3 1h1v1h-1zm0 1h1v1h-1zm0 1h1v1h-1z"/><path id="g58" d="M2 5h3v1h-3zm-1 1h1v1h-1zm3 0h1v1h-1zm-3 1h1v1h-1zm1 1h3v1h-3zm3 1h1v1h-1zm-4 1h1v1h-1zm4 0h1v1h-1zm-3 1h3v1h-3z"/><path id="g59" d="M0 12h6v1h-6z"/><path id="g5a" d="M3 2h1v1h-1zm-1 1h2v1h-2zm1 1h1v1h-1zm0 1h1v1h-1zm0 1h1v1h-1zm0 1h1v1h-1zm0 1h1v1h-1zm0 1h1v1h-1zm0 1h1v1h-1zm0 1h1v1h-1z"/><path id="g5b" d="M2 2h4v1h-4zm-1 1h1v1h-1zm0 1h1v1h-1zm0 1h4v1h-4zm0 1h1v1h-1zm3 0h2v1h-2zm1 1h1v1h-1zm0 1h1v1h-1zm0 1h1v1h-1zm-4 1h1v1h-1zm3 0h2v1h-2zm-2 1h3v1h-3z"/><path id="g5c" d="M2 2h1v1h-1zm7 0h1v1h-1zm-7 1h8v1h-8zm0 1h1v1h-1zm7 0h1v1h-1zm-7 1h1v1h-1zm7 0h1v1h-1zm-7 1h8v1h-8zm3 1h1v1h-1zm-4 1h10v1h-10zm1 2h1v1h-1zm0 1h1v1h-1zm0 1h8v1h-8z"/><path id="g5d" d="M2 2h4v1h-4zm6 0h1v1h-1zm-7 1h1v1h-1zm5 0h1v1h-1zm2 0h1v1h-1zm-7 1h1v1h-1zm5 0h1v1h-1zm2 0h1v1h-1zm-6 1h2v1h-2zm3 0h1v1h-1zm3 0h1v1h-1zm-4 1h1v1h-1zm4 0h3v1h-3zm-4 1h1v1h-1zm4 0h1v1h-1zm-8 1h9v1h-9zm8 1h1v1h-1zm-6 1h1v1h-1zm0 1h1v1h-1zm0 1h8v1h-8z"/><path id="g5e" d="M2 2h8v1h-8zm7 1h1v1h-1zm0 1h1v1h-1zm-7 1h8v1h-8zm0 1h1v1h-1zm0 1h1v1h-1zm0 1h9v1h-9zm2 1h1v1h-1zm4 0h1v1h-1zm-4 1h1v1h-1zm4 0h1v1h-1zm-7 1h10v1h-10z"/><path id="g5f" d="M1 2h6v1h-6zm7 0h2v1h-2zm-7 1h2v1h-2zm7 0h2v1h-2zm-7 1h2v1h-2zm7 0h2v1h-2zm-7 1h2v1h-2zm7 0h2v1h-2zm-7 1h2v1h-2zm7 0h2v1h-2zm-7 1h2v1h-2zm7 0h2v1h-2zm-7 1h2v1h-2zm7 0h2v1h-2zm-7 1h2v1h-2zm7 0h2v1h-2zm-7 1h2v1h-2zm5 0h4v1h-4zm-5 1h6v1h-6zm7 0h2v1h-2zm0 1h2v1h-2z"/><path id="g5g" d="M1 2h2v1h-2zm4 0h2v1h-2zm3 0h2v1h-2zm-7 1h2v1h-2zm4 0h2v1h-2zm3 0h2v1h-2zm-7 1h2v1h-2zm4 0h2v1h-2zm3 0h2v1h-2zm-7 1h6v1h-6zm7 0h2v1h-2zm-7 1h2v1h-2zm4 0h5v1h-5zm-4 1h2v1h-2zm4 0h2v1h-2zm3 0h2v1h-2zm-7 1h2v1h-2zm4 0h2v1h-2zm3 0h2v1h-2zm-7 1h2v1h-2zm4 0h2v1h-2zm3 0h2v1h-2zm-7 1h2v1h-2zm4 0h2v1h-2zm3 0h2v1h-2zm-7 1h6v1h-6zm7 0h2v1h-2zm0 1h2v1h-2z"/><path id="g5h" d="M2 2h6v1h-6zm7 0h2v1h-2zm-3 1h2v1h-2zm3 0h2v1h-2zm-3 1h2v1h-2zm3 0h2v1h-2zm-4 1h2v1h-2zm4 0h2v1h-2zm-6 1h3v1h-3zm6 0h2v1h-2zm-7 1h2v1h-2zm7 0h2v1h-2zm-6 1h7v1h-7zm-1 1h3v1h-3zm6 0h3v1h-3zm-6 1h2v1h-2zm7 0h2v1h-2zm-7 1h3v1h-3zm6 0h3v1h-3zm-5 1h7v1h-7z"/><path id="g5i" d="M2 2h5v1h-5zm7 0h1v1h-1zm-3 1h1v1h-1zm3 0h1v1h-1zm-3 1h1v1h-1zm3 0h1v1h-1zm-3 1h1v1h-1zm3 0h1v1h-1zm-4 1h1v1h-1zm4 0h3v1h-3zm-5 1h1v1h-1zm5 0h1v1h-1zm-8 1h3v1h-3zm8 0h1v1h-1zm-7 1h1v1h-1zm7 0h1v1h-1zm-7 1h1v1h-1zm0 1h1v1h-1zm0 1h8v1h-8z"/><path id="g5j" d="M1 2h1v1h-1zm5 0h1v1h-1zm3 0h1v1h-1zm-8 1h1v1h-1zm5 0h1v1h-1zm3 0h1v1h-1zm-8 1h1v1h-1zm5 0h1v1h-1zm3 0h1v1h-1zm-8 1h1v1h-1zm5 0h1v1h-1zm3 0h1v1h-1zm-8 1h1v1h-1zm5 0h1v1h-1zm3 0h1v1h-1zm-8 1h1v1h-1zm5 0h4v1h-4zm-5 1h1v1h-1zm5 0h1v1h-1zm3 0h1v1h-1zm-8 1h1v1h-1zm5 0h1v1h-1zm3 0h1v1h-1zm-8 1h6v1h-6zm8 0h1v1h-1zm-3 1h1v1h-1zm3 0h1v1h-1zm-3 1h1v1h-1zm3 0h1v1h-1z"/><path id="g5k" d="M2 2h3v1h-3zm-1 1h1v1h-1zm4 0h1v1h-1zm-4 1h1v1h-1zm4 0h1v1h-1zm0 1h1v1h-1zm-1 1h2v1h-2zm-1 1h2v1h-2zm-1 1h1v1h-1zm-1 1h1v1h-1zm0 1h1v1h-1zm0 1h5v1h-5z"/><path id="g5l" d="M2 2h3v1h-3zm0 1h1v1h-1zm2 0h1v1h-1zm-3 1h1v1h-1zm4 0h1v1h-1zm-4 1h1v1h-1zm4 0h1v1h-1zm-4 1h1v1h-1zm4 0h1v1h-1zm-4 1h1v1h-1zm4 0h1v1h-1zm-4 1h1v1h-1zm4 0h1v1h-1zm-4 1h1v1h-1zm4 0h1v1h-1zm-3 1h1v1h-1zm2 0h1v1h-1zm-2 1h3v1h-3z"/><path id="g5m" d="M2 2h3v1h-3zm-1 1h2v1h-2zm3 0h2v1h-2zm-3 1h1v1h-1zm4 0h1v1h-1zm-4 1h1v1h-1zm4 0h1v1h-1zm-4 1h1v1h-1zm4 0h1v1h-1zm-4 1h1v1h-1zm3 0h2v1h-2zm-2 1h2v1h-2zm3 0h1v1h-1zm0 1h1v1h-1zm-4 1h1v1h-1zm3 0h1v1h-1zm-2 1h3v1h-3z"/><path id="g5n" d="M1 7h6v1h-6z"/><path id="g5o" d="M3 2h3v1h-3zm-1 1h1v1h-1zm3 0h1v1h-1zm-3 1h1v1h-1zm-1 1h1v1h-1zm0 1h1v1h-1zm2 0h2v1h-2zm-2 1h2v1h-2zm4 0h1v1h-1zm-4 1h1v1h-1zm4 0h1v1h-1zm-4 1h1v1h-1zm4 0h1v1h-1zm-4 1h1v1h-1zm4 0h1v1h-1zm-3 1h3v1h-3z"/><path id="g5p" d="M1 2h5v1h-5zm3 1h1v1h-1zm0 1h1v1h-1zm-1 1h1v1h-1zm0 1h1v1h-1zm-1 1h1v1h-1zm0 1h1v1h-1zm0 1h1v1h-1zm0 1h1v1h-1zm0 1h1v1h-1z"/><path id="g5q" d="M1 3h1v1h-1zm0 1h1v1h-1zm0 5h1v1h-1zm0 1h1v1h-1z"/><path id="g5r" d="M1 5h4v1h-4zm5 0h3v1h-3zm-5 1h1v1h-1zm4 0h1v1h-1zm3 0h1v1h-1zm-7 1h1v1h-1zm4 0h1v1h-1zm3 0h1v1h-1zm-7 1h1v1h-1zm4 0h1v1h-1zm3 0h1v1h-1zm-7 1h1v1h-1zm4 0h1v1h-1zm3 0h1v1h-1zm-7 1h1v1h-1zm4 0h1v1h-1zm3 0h1v1h-1zm-7 1h1v1h-1zm4 0h1v1h-1zm3 0h1v1h-1z"/><path id="g5s" d="M1 10h1v1h-1zm0 1h1v1h-1zm0 1h1v1h-1z"/><path id="g5t" d="M1 2h1v1h-1zm0 1h1v1h-1zm0 1h1v1h-1zm0 1h1v1h-1zm2 0h3v1h-3zm-2 1h2v1h-2zm4 0h2v1h-2zm-4 1h1v1h-1zm5 0h1v1h-1zm-5 1h1v1h-1zm5 0h1v1h-1zm-5 1h1v1h-1zm5 0h1v1h-1zm-5 1h2v1h-2zm4 0h2v1h-2zm-4 1h5v1h-5z"/><path id="g5u" d="M2 2h2v1h-2zm0 1h1v1h-1zm0 1h1v1h-1zm-1 1h3v1h-3zm1 1h1v1h-1zm0 1h1v1h-1zm0 1h1v1h-1zm0 1h1v1h-1zm0 1h1v1h-1zm0 1h1v1h-1z"/><path id="g5v" d="M2 5h4v1h-4zm0 1h1v1h-1zm4 0h1v1h-1zm-5 1h1v1h-1zm0 1h1v1h-1zm0 1h1v1h-1zm1 1h1v1h-1zm4 0h1v1h-1zm-4 1h4v1h-4z"/><path id="g5w" d="M2 2h3v1h-3zm-1 1h1v1h-1zm4 0h1v1h-1zm-4 1h1v1h-1zm4 0h1v1h-1zm0 1h1v1h-1zm-2 1h2v1h-2zm2 1h1v1h-1zm0 1h1v1h-1zm-4 1h1v1h-1zm4 0h1v1h-1zm-4 1h1v1h-1zm4 0h1v1h-1zm-3 1h3v1h-3z"/><path id="g5x" d="M2 2h3v1h-3zm-1 1h1v1h-1zm4 0h1v1h-1zm-4 1h1v1h-1zm4 0h1v1h-1zm-4 1h1v1h-1zm4 0h1v1h-1zm-3 1h3v1h-3zm-1 1h1v1h-1zm4 0h1v1h-1zm-4 1h1v1h-1zm4 0h1v1h-1zm-4 1h1v1h-1zm4 0h1v1h-1zm-4 1h1v1h-1zm4 0h1v1h-1zm-3 1h3v1h-3z"/><path id="g5y" d="M1 5h6v1h-6zm0 3h6v1h-6z"/><path id="g5z" d="M2 5h4v1h-4zm-1 1h2v1h-2zm3 0h2v1h-2zm-3 1h1v1h-1zm4 0h1v1h-1zm-4 1h1v1h-1zm4 0h1v1h-1zm-4 1h1v1h-1zm4 0h1v1h-1zm-4 1h2v1h-2zm3 0h2v1h-2zm-2 1h4v1h-4zm-2 1h1v1h-1zm5 0h1v1h-1zm-4 1h4v1h-4z"/><path id="g60" d="M4 2h1v1h-1zm0 1h1v1h-1zm-1 1h2v1h-2zm-1 1h1v1h-1zm2 0h1v1h-1zm-2 1h1v1h-1zm2 0h1v1h-1zm-2 1h1v1h-1zm2 0h1v1h-1zm-3 1h1v1h-1zm3 0h1v1h-1zm-3 1h6v1h-6zm3 1h1v1h-1zm0 1h1v1h-1z"/><path id="g61" d="M0 5h1v1h-1zm4 0h1v1h-1zm3 0h1v1h-1zm-7 1h1v1h-1zm3 0h2v1h-2zm4 0h1v1h-1zm-6 1h1v1h-1zm2 0h2v1h-2zm4 0h1v1h-1zm-6 1h1v1h-1zm2 0h1v1h-1zm2 0h1v1h-1zm2 0h1v1h-1zm-6 1h2v1h-2zm4 0h2v1h-2zm-4 1h2v1h-2zm5 0h1v1h-1zm-4 1h1v1h-1zm4 0h1v1h-1z"/><path id="g62" d="M6 2h1v1h-1zm-1 1h2v1h-2zm-1 1h1v1h-1zm-1 1h1v1h-1zm-2 1h2v1h-2zm0 1h2v1h-2zm2 1h1v1h-1zm1 1h1v1h-1zm1 1h2v1h-2z"/><path id="g63" d="M2 1h3v1h-3zm0 1h1v1h-1zm0 1h1v1h-1zm0 1h1v1h-1zm0 1h1v1h-1zm0 1h1v1h-1zm0 1h1v1h-1zm0 1h1v1h-1zm0 1h1v1h-1zm0 1h1v1h-1zm0 1h1v1h-1zm0 1h3v1h-3z"/><path id="g64" d="M1 1h3v1h-3zm2 1h1v1h-1zm0 1h1v1h-1zm0 1h1v1h-1zm0 1h1v1h-1zm0 1h1v1h-1zm0 1h1v1h-1zm0 1h1v1h-1zm0 1h1v1h-1zm0 1h1v1h-1zm0 1h1v1h-1zm-2 1h3v1h-3z"/><path id="g65" d="M1 2h1v1h-1zm0 1h1v1h-1zm0 1h1v1h-1zm0 1h1v1h-1zm0 1h1v1h-1zm0 1h1v1h-1zm0 1h1v1h-1zm0 1h1v1h-1zm0 1h1v1h-1zm0 1h1v1h-1z"/><path id="g66" d="M3 2h4v1h-4zm-1 1h1v1h-1zm4 0h2v1h-2zm-5 1h1v1h-1zm6 0h1v1h-1zm-6 1h1v1h-1zm0 1h1v1h-1zm0 1h1v1h-1zm4 0h3v1h-3zm-4 1h1v1h-1zm6 0h1v1h-1zm-6 1h1v1h-1zm6 0h1v1h-1zm-5 1h1v1h-1zm4 0h2v1h-2zm-3 1h3v1h-3zm4 0h1v1h-1z"/><path id="g67" d="M1 2h1v1h-1zm0 1h1v1h-1zm0 1h1v1h-1zm0 1h1v1h-1zm2 0h2v1h-2zm-2 1h2v1h-2zm4 0h1v1h-1zm-4 1h1v1h-1zm4 0h1v1h-1zm-4 1h1v1h-1zm4 0h1v1h-1zm-4 1h1v1h-1zm4 0h1v1h-1zm-4 1h1v1h-1zm4 0h1v1h-1zm-4 1h1v1h-1zm4 0h1v1h-1z"/></defs></svg>
<div style="left:0px;top:1px;width:1214px;height:1px;background:#fff"></div>
<div style="left:1px;top:1px;width:1px;height:865px;background:#fff"></div>
<div style="left:1213px;top:1px;width:1px;height:865px;background:#808080"></div>
<div style="left:1px;top:865px;width:1213px;height:1px;background:#808080"></div>
<div style="left:1214px;top:0px;width:1px;height:867px;background:#404040"></div>
<div style="left:0px;top:866px;width:1215px;height:1px;background:#404040"></div>
<div style="left:4px;top:4px;width:1207px;height:18px;background:linear-gradient(90deg,#808080 0,#808080 8%,#c0c0c0 92%,#c0c0c0 100%)"></div>
<span class="t" style="left:25px;top:5px;width:398px;height:16px">YesLanguage 편집기 - [option+spot_M15_사본_사본 &lt;시스템&gt;]<svg width="398" height="16" style="fill:#d4d0c8"><use href="#g0"/><use href="#g1" x="9"/><use href="#g2" x="17"/><use href="#g3" x="24"/><use href="#g4" x="32"/><use href="#g5" x="40"/><use href="#g6" x="48"/><use href="#g7" x="56"/><use href="#g4" x="64"/><use href="#g6" x="72"/><use href="#g1" x="79"/><use href="#g9" x="92"/><use href="#ga" x="105"/><use href="#gb" x="118"/><use href="#gc" x="135"/><use href="#gd" x="148"/><use href="#ge" x="155"/><use href="#gf" x="163"/><use href="#gg" x="171"/><use href="#gh" x="175"/><use href="#ge" x="179"/><use href="#g5" x="187"/><use href="#gi" x="195"/><use href="#g2" x="204"/><use href="#gf" x="212"/><use href="#ge" x="220"/><use href="#gg" x="227"/><use href="#gj" x="232"/><use href="#gk" x="240"/><use href="#gl" x="251"/><use href="#gm" x="258"/><use href="#gj" x="265"/><use href="#gn" x="272"/><use href="#go" x="285"/><use href="#gj" x="298"/><use href="#gn" x="306"/><use href="#go" x="318"/><use href="#gp" x="336"/><use href="#gq" x="345"/><use href="#gr" x="358"/><use href="#gs" x="370"/><use href="#gt" x="383"/><use href="#gu" x="392"/></svg></span>
<div class="rs" style="left:1159px;top:6px;width:16px;height:14px;background:#d4d0c8"></div>
<div class="rs" style="left:1175px;top:6px;width:16px;height:14px;background:#d4d0c8"></div>
<div class="rs" style="left:1193px;top:6px;width:16px;height:14px;background:#d4d0c8"></div>
<div class="rs" style="left:1159px;top:25px;width:16px;height:14px;background:#d4d0c8"></div>
<div class="rs" style="left:1175px;top:25px;width:16px;height:14px;background:#d4d0c8"></div>
<div class="rs" style="left:1193px;top:25px;width:16px;height:14px;background:#d4d0c8"></div>
<div style="left:4px;top:42px;width:1207px;height:1px;background:#808080"></div>
<div style="left:4px;top:43px;width:1207px;height:1px;background:#fff"></div>
<span class="t" style="left:32px;top:24px;width:41px;height:16px">파일(F)<svg width="41" height="16" style="fill:#808080"><use href="#gv"/><use href="#gw" x="12"/><use href="#gx" x="25"/><use href="#gy" x="30"/><use href="#gz" x="37"/></svg></span>
<span class="t" style="left:87px;top:24px;width:41px;height:16px">편집(E)<svg width="41" height="16" style="fill:#808080"><use href="#g10"/><use href="#g11" x="12"/><use href="#gx" x="24"/><use href="#g12" x="29"/><use href="#gz" x="37"/></svg></span>
<span class="t" style="left:141px;top:24px;width:43px;height:16px">찾기(S)<svg width="43" height="16" style="fill:#808080"><use href="#g13"/><use href="#g14" x="12"/><use href="#gx" x="25"/><use href="#g15" x="30"/><use href="#gz" x="39"/></svg></span>
<span class="t" style="left:198px;top:24px;width:42px;height:16px">보기(V)<svg width="42" height="16" style="fill:#808080"><use href="#g16"/><use href="#g14" x="13"/><use href="#gx" x="25"/><use href="#g17" x="31"/><use href="#gz" x="38"/></svg></span>
<span class="t" style="left:253px;top:24px;width:33px;height:16px">창(W)<svg width="33" height="16" style="fill:#808080"><use href="#g18"/><use href="#gx" x="12"/><use href="#g19" x="18"/><use href="#gz" x="29"/></svg></span>
<span class="t" style="left:299px;top:24px;width:55px;height:16px">도움말(H)<svg width="55" height="16" style="fill:#808080"><use href="#g1a"/><use href="#g1b" x="12"/><use href="#g1c" x="24"/><use href="#gx" x="37"/><use href="#g1d" x="42"/><use href="#gz" x="51"/></svg></span>
<div style="left:6px;top:45px;width:3px;height:27px;border:1px solid;border-color:#fff #808080 #808080 #fff"></div>
<div style="left:601px;top:44px;width:1px;height:30px;background:#808080"></div>
<div style="left:602px;top:44px;width:1px;height:30px;background:#fff"></div>
<div style="left:96px;top:47px;width:1px;height:23px;background:#808080"></div>
<div style="left:97px;top:47px;width:1px;height:23px;background:#fff"></div>
<div style="left:158px;top:47px;width:1px;height:23px;background:#808080"></div>
<div style="left:159px;top:47px;width:1px;height:23px;background:#fff"></div>
<div style="left:247px;top:47px;width:1px;height:23px;background:#808080"></div>
<div style="left:248px;top:47px;width:1px;height:23px;background:#fff"></div>
<div style="left:309px;top:47px;width:1px;height:23px;background:#808080"></div>
<div style="left:310px;top:47px;width:1px;height:23px;background:#fff"></div>
<div style="left:425px;top:47px;width:1px;height:23px;background:#808080"></div>
<div style="left:426px;top:47px;width:1px;height:23px;background:#fff"></div>
<div style="left:541px;top:47px;width:1px;height:23px;background:#808080"></div>
<div style="left:542px;top:47px;width:1px;height:23px;background:#fff"></div>
<div style="left:128px;top:45px;width:27px;height:27px;border:1px solid;border-color:#fff #808080 #808080 #fff"></div>
<span class="t" style="left:6px;top:846px;width:36px;height:16px">Ready<svg width="36" height="16"><use href="#g1e"/><use href="#g1f" x="9"/><use href="#g1g" x="15"/><use href="#g1h" x="22"/><use href="#g1i" x="29"/></svg></span>
<div class="sk1" style="left:1086px;top:846px;width:31px;height:17px;background:#d4d0c8"></div>
<div class="sk1" style="left:1119px;top:846px;width:34px;height:17px;background:#d4d0c8"></div>
<span class="t" style="left:1121px;top:847px;width:29px;height:16px">NUM<svg width="29" height="16"><use href="#g1j"/><use href="#g1k" x="9"/><use href="#g1l" x="19"/></svg></span>
<div class="sk1" style="left:1155px;top:846px;width:38px;height:17px;background:#d4d0c8"></div>
<div class="cap" style="left:4px;top:75px;width:1207px;height:19px;"></div>
<span class="t" style="left:8px;top:77px;width:104px;height:16px">사전(Dictionary)<svg width="104" height="16"><use href="#gn"/><use href="#g1m" x="13"/><use href="#g1n" x="26"/><use href="#g1o" x="32"/><use href="#gh" x="42"/><use href="#g1p" x="46"/><use href="#gg" x="54"/><use href="#gh" x="59"/><use href="#ge" x="63"/><use href="#g5" x="71"/><use href="#g4" x="79"/><use href="#g1q" x="87"/><use href="#g1r" x="92"/><use href="#g1s" x="99"/></svg></span>
<svg class="ic" style="left:1183px;top:80px" width="7" height="9" shape-rendering="crispEdges"><path d="M1 0h5v1h-5zM1 1h1v4h-1zM4 1h2v4h-2zM0 5h7v1h-7zM3 6h1v3h-1z"/></svg>
<svg class="ic" style="left:1198px;top:81px" width="7" height="7" shape-rendering="crispEdges"><path d="M0 0h1v1h-1zM1 1h1v1h-1zM2 2h1v1h-1zM3 3h1v1h-1zM4 4h1v1h-1zM5 5h1v1h-1zM6 6h1v1h-1zM6 0h1v1h-1zM5 1h1v1h-1zM4 2h1v1h-1zM2 4h1v1h-1zM1 5h1v1h-1zM0 6h1v1h-1z"/></svg>
<div style="left:4px;top:96px;width:1207px;height:1px;background:#808080"></div>
<div style="left:4px;top:97px;width:1207px;height:1px;background:#fff"></div>
<div class="sk" style="left:9px;top:101px;width:288px;height:254px;background:#d4d0c8"></div>
<div class="rs" style="left:15px;top:125px;width:278px;height:225px;background:#d4d0c8"></div>
<div style="left:16px;top:106px;width:50px;height:21px;background:#0a246a;border:1px solid;border-color:#fff #404040 #0a246a #fff;border-radius:2px 2px 0 0"></div>
<span class="t" style="left:27px;top:108px;width:24px;height:16px">범주<svg width="24" height="16" style="fill:#fff"><use href="#g1t"/><use href="#g1u" x="12"/></svg></span>
<div style="left:66px;top:108px;width:47px;height:17px;background:#d4d0c8;border:1px solid;border-color:#fff #404040 transparent #fff;border-radius:2px 2px 0 0"></div>
<span class="t" style="left:75px;top:110px;width:23px;height:16px">찾기<svg width="23" height="16"><use href="#g13"/><use href="#g14" x="12"/></svg></span>
<div class="sk" style="left:21px;top:131px;width:71px;height:209px;background:#fff"></div>
<div class="rs" style="left:23px;top:133px;width:52px;height:16px;background:#d4d0c8"></div>
<span class="t" style="left:29px;top:134px;width:24px;height:16px">범주<svg width="24" height="16"><use href="#g1t"/><use href="#g1u" x="12"/></svg></span>
<div class="sb" style="left:75px;top:133px;width:16px;height:16px;"></div>
<svg class="ic" style="left:79px;top:139px" width="7" height="4" shape-rendering="crispEdges"><path d="M3 0h1v1h-1zM2 1h3v1h-3zM1 2h5v1h-5zM0 3h7v1h-7z"/></svg>
<div class="trk" style="left:75px;top:149px;width:16px;height:173px;"></div>
<div class="sb" style="left:75px;top:207px;width:16px;height:115px;"></div>
<div class="sb" style="left:75px;top:322px;width:16px;height:16px;"></div>
<svg class="ic" style="left:79px;top:328px" width="7" height="4" shape-rendering="crispEdges"><path d="M0 0h7v1h-7zM1 1h5v1h-5zM2 2h3v1h-3zM3 3h1v1h-1z"/></svg>
<span class="t" style="left:27px;top:149px;width:38px;height:16px">Skip ...<svg width="38" height="16"><use href="#g15"/><use href="#g1v" x="9"/><use href="#g1w" x="15"/><use href="#g1x" x="18"/><use href="#g1z" x="29"/><use href="#g1z" x="32"/><use href="#g1z" x="35"/></svg></span>
<span class="t" style="left:27px;top:162px;width:33px;height:16px">주문...<svg width="33" height="16"><use href="#g1u"/><use href="#g20" x="12"/><use href="#g1z" x="24"/><use href="#g1z" x="27"/><use href="#g1z" x="30"/></svg></span>
<span class="t" style="left:27px;top:175px;width:35px;height:16px">예약어<svg width="35" height="16"><use href="#g21"/><use href="#g22" x="12"/><use href="#g23" x="24"/></svg></span>
<span class="t" style="left:27px;top:188px;width:33px;height:16px">수학...<svg width="33" height="16"><use href="#g24"/><use href="#g25" x="12"/><use href="#g1z" x="24"/><use href="#g1z" x="27"/><use href="#g1z" x="30"/></svg></span>
<span class="t" style="left:27px;top:201px;width:33px;height:16px">분석...<svg width="33" height="16"><use href="#g26"/><use href="#g27" x="12"/><use href="#g1z" x="24"/><use href="#g1z" x="27"/><use href="#g1z" x="30"/></svg></span>
<span class="t" style="left:27px;top:214px;width:33px;height:16px">출력...<svg width="33" height="16"><use href="#g28"/><use href="#g29" x="12"/><use href="#g1z" x="24"/><use href="#g1z" x="27"/><use href="#g1z" x="30"/></svg></span>
<span class="t" style="left:27px;top:227px;width:33px;height:16px">텍스...<svg width="33" height="16"><use href="#g2a"/><use href="#g2b" x="12"/><use href="#g1z" x="24"/><use href="#g1z" x="27"/><use href="#g1z" x="30"/></svg></span>
<span class="t" style="left:27px;top:240px;width:33px;height:16px">추세...<svg width="33" height="16"><use href="#g2c"/><use href="#g2d" x="12"/><use href="#g1z" x="24"/><use href="#g1z" x="27"/><use href="#g1z" x="30"/></svg></span>
<span class="t" style="left:26px;top:253px;width:33px;height:16px">잔고...<svg width="33" height="16"><use href="#g2e"/><use href="#g2f" x="12"/><use href="#g1z" x="24"/><use href="#g1z" x="27"/><use href="#g1z" x="30"/></svg></span>
<span class="t" style="left:27px;top:266px;width:33px;height:16px">주문...<svg width="33" height="16"><use href="#g1u"/><use href="#g20" x="12"/><use href="#g1z" x="24"/><use href="#g1z" x="27"/><use href="#g1z" x="30"/></svg></span>
<span class="t" style="left:27px;top:279px;width:33px;height:16px">포지...<svg width="33" height="16"><use href="#g2g"/><use href="#g2h" x="12"/><use href="#g1z" x="24"/><use href="#g1z" x="27"/><use href="#g1z" x="30"/></svg></span>
<span class="t" style="left:27px;top:292px;width:33px;height:16px">전략...<svg width="33" height="16"><use href="#g2i"/><use href="#g2j" x="12"/><use href="#g1z" x="24"/><use href="#g1z" x="27"/><use href="#g1z" x="30"/></svg></span>
<span class="t" style="left:27px;top:305px;width:33px;height:16px">검색...<svg width="33" height="16"><use href="#g2k"/><use href="#g2l" x="12"/><use href="#g1z" x="24"/><use href="#g1z" x="27"/><use href="#g1z" x="30"/></svg></span>
<span class="t" style="left:27px;top:318px;width:33px;height:16px">사용...<svg width="33" height="16"><use href="#g2m"/><use href="#g2n" x="12"/><use href="#g1z" x="24"/><use href="#g1z" x="27"/><use href="#g1z" x="30"/></svg></span>
<div class="sk" style="left:97px;top:131px;width:190px;height:209px;background:#fff"></div>
<div class="rs" style="left:99px;top:133px;width:186px;height:16px;background:#d4d0c8"></div>
<span class="t" style="left:105px;top:134px;width:34px;height:16px">함수명<svg width="34" height="16"><use href="#g2o"/><use href="#g24" x="12"/><use href="#g2p" x="24"/></svg></span>
<div style="left:99px;top:150px;width:186px;height:1px;background:#d4d0c8"></div>
<div style="left:99px;top:163px;width:186px;height:1px;background:#d4d0c8"></div>
<div style="left:99px;top:176px;width:186px;height:1px;background:#d4d0c8"></div>
<div style="left:99px;top:189px;width:186px;height:1px;background:#d4d0c8"></div>
<div style="left:99px;top:202px;width:186px;height:1px;background:#d4d0c8"></div>
<div style="left:99px;top:215px;width:186px;height:1px;background:#d4d0c8"></div>
<div style="left:99px;top:228px;width:186px;height:1px;background:#d4d0c8"></div>
<div style="left:99px;top:241px;width:186px;height:1px;background:#d4d0c8"></div>
<div style="left:99px;top:254px;width:186px;height:1px;background:#d4d0c8"></div>
<div style="left:99px;top:267px;width:186px;height:1px;background:#d4d0c8"></div>
<div style="left:99px;top:280px;width:186px;height:1px;background:#d4d0c8"></div>
<div style="left:99px;top:293px;width:186px;height:1px;background:#d4d0c8"></div>
<div style="left:99px;top:306px;width:186px;height:1px;background:#d4d0c8"></div>
<div style="left:99px;top:319px;width:186px;height:1px;background:#d4d0c8"></div>
<div style="left:99px;top:332px;width:186px;height:1px;background:#d4d0c8"></div>
<div class="sk" style="left:301px;top:101px;width:905px;height:254px;background:#d4d0c8"></div>
<span class="t" style="left:307px;top:104px;width:22px;height:16px">설명<svg width="22" height="16"><use href="#g2q"/><use href="#g2p" x="12"/></svg></span>
<div class="sk1" style="left:307px;top:121px;width:892px;height:23px;background:#d4d0c8"></div>
<span class="t" style="left:307px;top:148px;width:35px;height:16px">사용예<svg width="35" height="16"><use href="#g2m"/><use href="#g2n" x="12"/><use href="#g21" x="24"/></svg></span>
<div class="sk1" style="left:307px;top:163px;width:892px;height:23px;background:#d4d0c8"></div>
<span class="t" style="left:307px;top:190px;width:48px;height:16px">변수정보<svg width="48" height="16"><use href="#g2r"/><use href="#g24" x="12"/><use href="#g2s" x="24"/><use href="#g16" x="36"/></svg></span>
<div class="sk" style="left:307px;top:207px;width:892px;height:143px;background:#fff"></div>
<div class="rs" style="left:309px;top:209px;width:388px;height:16px;background:#d4d0c8"></div>
<span class="t" style="left:315px;top:209px;width:52px;height:16px">형(Type)<svg width="52" height="16"><use href="#g2t"/><use href="#gx" x="13"/><use href="#g2u" x="19"/><use href="#g1i" x="26"/><use href="#g1x" x="33"/><use href="#g1f" x="40"/><use href="#gz" x="48"/></svg></span>
<div class="rs" style="left:697px;top:209px;width:485px;height:16px;background:#d4d0c8"></div>
<span class="t" style="left:704px;top:209px;width:56px;height:16px">값(Value)<svg width="56" height="16"><use href="#g2v"/><use href="#gx" x="13"/><use href="#g17" x="18"/><use href="#g1g" x="26"/><use href="#g2w" x="34"/><use href="#g2x" x="37"/><use href="#g1f" x="44"/><use href="#gz" x="52"/></svg></span>
<div class="rs" style="left:1182px;top:209px;width:15px;height:16px;background:#d4d0c8"></div>
<div style="left:309px;top:226px;width:888px;height:1px;background:#d4d0c8"></div>
<div style="left:309px;top:239px;width:888px;height:1px;background:#d4d0c8"></div>
<div style="left:309px;top:252px;width:888px;height:1px;background:#d4d0c8"></div>
<div style="left:309px;top:265px;width:888px;height:1px;background:#d4d0c8"></div>
<div style="left:309px;top:278px;width:888px;height:1px;background:#d4d0c8"></div>
<div style="left:309px;top:291px;width:888px;height:1px;background:#d4d0c8"></div>
<div style="left:309px;top:304px;width:888px;height:1px;background:#d4d0c8"></div>
<div style="left:309px;top:317px;width:888px;height:1px;background:#d4d0c8"></div>
<div style="left:309px;top:330px;width:888px;height:1px;background:#d4d0c8"></div>
<div style="left:309px;top:343px;width:888px;height:1px;background:#d4d0c8"></div>
<div style="left:698px;top:225px;width:1px;height:123px;background:#d4d0c8"></div>
<div style="left:1181px;top:225px;width:1px;height:123px;background:#d4d0c8"></div>
<div class="cap" style="left:4px;top:366px;width:310px;height:19px;"></div>
<span class="t" style="left:9px;top:368px;width:65px;height:16px">파일관리자<svg width="65" height="16"><use href="#g2y"/><use href="#g2z" x="13"/><use href="#g30" x="26"/><use href="#g31" x="39"/><use href="#g32" x="52"/></svg></span>
<svg class="ic" style="left:286px;top:371px" width="7" height="9" shape-rendering="crispEdges"><path d="M1 0h5v1h-5zM1 1h1v4h-1zM4 1h2v4h-2zM0 5h7v1h-7zM3 6h1v3h-1z"/></svg>
<svg class="ic" style="left:301px;top:372px" width="7" height="7" shape-rendering="crispEdges"><path d="M0 0h1v1h-1zM1 1h1v1h-1zM2 2h1v1h-1zM3 3h1v1h-1zM4 4h1v1h-1zM5 5h1v1h-1zM6 6h1v1h-1zM6 0h1v1h-1zM5 1h1v1h-1zM4 2h1v1h-1zM2 4h1v1h-1zM1 5h1v1h-1zM0 6h1v1h-1z"/></svg>
<div style="left:4px;top:387px;width:260px;height:198px;border:1px solid #000;background:#d4d0c8"></div>
<div style="left:5px;top:388px;width:258px;height:21px;border:1px solid;border-color:#fff #808080 #808080 #fff"></div>
<span class="t" style="left:121px;top:391px;width:24px;height:16px">지표<svg width="24" height="16"><use href="#g2h"/><use href="#g33" x="12"/></svg></span>
<div style="left:5px;top:409px;width:258px;height:22px;border:1px solid;border-color:#fff #808080 #808080 #fff"></div>
<span class="t" style="left:122px;top:413px;width:23px;height:16px">검색<svg width="23" height="16"><use href="#g2k"/><use href="#g2l" x="12"/></svg></span>
<div style="left:5px;top:431px;width:258px;height:22px;border:1px solid;border-color:#fff #808080 #808080 #fff"></div>
<span class="t" style="left:121px;top:435px;width:24px;height:16px">강조<svg width="24" height="16"><use href="#g34"/><use href="#g35" x="12"/></svg></span>
<div style="left:5px;top:453px;width:258px;height:22px;border:1px solid;border-color:#fff #808080 #808080 #fff"></div>
<span class="t" style="left:116px;top:457px;width:35px;height:16px">시스템<svg width="35" height="16"><use href="#g36"/><use href="#g2b" x="12"/><use href="#g37" x="24"/></svg></span>
<div style="left:5px;top:475px;width:168px;height:15px;border-style:solid;border-width:0 1px 1px 1px;border-color:#808080 #808080 #808080 #fff;background:#d4d0c8"></div>
<span class="t" style="left:11px;top:475px;width:24px;height:16px">이름<svg width="24" height="16"><use href="#g38"/><use href="#g39" x="12"/></svg></span>
<div style="left:173px;top:475px;width:36px;height:15px;border-style:solid;border-width:0 1px 1px 1px;border-color:#808080 #808080 #808080 #fff;background:#d4d0c8"></div>
<span class="t" style="left:180px;top:475px;width:23px;height:16px">상태<svg width="23" height="16"><use href="#g3a"/><use href="#g3b" x="12"/></svg></span>
<div style="left:209px;top:475px;width:36px;height:15px;border-style:solid;border-width:0 1px 1px 1px;border-color:#808080 #808080 #808080 #fff;background:#d4d0c8"></div>
<span class="t" style="left:215px;top:475px;width:24px;height:16px">검증<svg width="24" height="16"><use href="#g2k"/><use href="#g3c" x="12"/></svg></span>
<div style="left:5px;top:490px;width:241px;height:50px;background:#fff"></div>
<div style="left:245px;top:475px;width:1px;height:65px;background:#fff"></div>
<div class="sb" style="left:246px;top:475px;width:16px;height:16px;"></div>
<svg class="ic" style="left:250px;top:481px" width="7" height="4" shape-rendering="crispEdges"><path d="M3 0h1v1h-1zM2 1h3v1h-3zM1 2h5v1h-5zM0 3h7v1h-7z"/></svg>
<div class="trk" style="left:246px;top:491px;width:16px;height:33px;"></div>
<div class="sb" style="left:246px;top:491px;width:16px;height:8px;"></div>
<div class="sb" style="left:246px;top:524px;width:16px;height:16px;"></div>
<svg class="ic" style="left:250px;top:530px" width="7" height="4" shape-rendering="crispEdges"><path d="M0 0h7v1h-7zM1 1h5v1h-5zM2 2h3v1h-3zM3 3h1v1h-1z"/></svg>
<div style="left:5px;top:490px;width:241px;height:50px;overflow:hidden"><svg class="ic" style="left:212px;top:4px" width="10" height="10" shape-rendering="crispEdges"><path d="M3 0h4v1h-4zM1 1h2v1h-2zM7 1h2v1h-2zM1 2h1v1h-1zM8 2h1v1h-1zM0 3h1v4h-1zM9 3h1v4h-1zM1 7h1v1h-1zM8 7h1v1h-1zM1 8h2v1h-2zM7 8h2v1h-2zM3 9h4v1h-4z"/></svg><svg class="ic" style="left:212px;top:17px" width="10" height="10" shape-rendering="crispEdges"><path d="M3 0h4v1h-4zM1 1h2v1h-2zM7 1h2v1h-2zM1 2h1v1h-1zM8 2h1v1h-1zM0 3h1v4h-1zM9 3h1v4h-1zM1 7h1v1h-1zM8 7h1v1h-1zM1 8h2v1h-2zM7 8h2v1h-2zM3 9h4v1h-4z"/></svg><svg class="ic" style="left:212px;top:30px" width="10" height="10" shape-rendering="crispEdges"><path d="M3 0h4v1h-4zM1 1h2v1h-2zM7 1h2v1h-2zM1 2h1v1h-1zM8 2h1v1h-1zM0 3h1v4h-1zM9 3h1v4h-1zM1 7h1v1h-1zM8 7h1v1h-1zM1 8h2v1h-2zM7 8h2v1h-2zM3 9h4v1h-4z"/></svg><svg class="ic" style="left:212px;top:43px" width="10" height="10" shape-rendering="crispEdges"><path d="M3 0h4v1h-4zM1 1h2v1h-2zM7 1h2v1h-2zM1 2h1v1h-1zM8 2h1v1h-1zM0 3h1v4h-1zM9 3h1v4h-1zM1 7h1v1h-1zM8 7h1v1h-1zM1 8h2v1h-2zM7 8h2v1h-2zM3 9h4v1h-4z"/></svg></div>
<div style="left:0;top:0;width:246px;height:540px;overflow:hidden"><span class="t" style="left:11px;top:491px;width:47px;height:16px">AB Ratio<svg width="47" height="16"><use href="#g3d"/><use href="#g3e" x="8"/><use href="#g1e" x="19"/><use href="#g1g" x="27"/><use href="#g3f" x="33"/><use href="#g1w" x="36"/><use href="#g3g" x="39"/></svg></span><span class="t" style="left:11px;top:504px;width:33px;height:16px">Aroon<svg width="33" height="16"><use href="#g3d"/><use href="#g3h" x="9"/><use href="#g3g" x="13"/><use href="#g3g" x="19"/><use href="#g3i" x="26"/></svg></span><span class="t" style="left:10px;top:517px;width:66px;height:16px">BinaryWave<svg width="66" height="16"><use href="#g3e"/><use href="#g1w" x="9"/><use href="#g3i" x="12"/><use href="#g1g" x="19"/><use href="#g3h" x="26"/><use href="#g1i" x="30"/><use href="#g19" x="35"/><use href="#g1g" x="46"/><use href="#g3j" x="53"/><use href="#g1f" x="59"/></svg></span><span class="t" style="left:10px;top:530px;width:106px;height:16px">BinaryWave MACD<svg width="106" height="16"><use href="#g3e"/><use href="#g1w" x="9"/><use href="#g3i" x="12"/><use href="#g1g" x="18"/><use href="#g3h" x="25"/><use href="#g1i" x="29"/><use href="#g19" x="35"/><use href="#g1g" x="46"/><use href="#g3j" x="52"/><use href="#g1f" x="58"/><use href="#g1l" x="69"/><use href="#g3d" x="79"/><use href="#g3k" x="87"/><use href="#g3l" x="97"/></svg></span></div>
<div style="left:5px;top:539px;width:258px;height:1px;background:#808080"></div>
<div style="left:5px;top:540px;width:258px;height:21px;border:1px solid;border-color:#fff #808080 #808080 #fff"></div>
<span class="t" style="left:110px;top:543px;width:47px;height:16px">종목검색<svg width="47" height="16"><use href="#g3m"/><use href="#g3n" x="12"/><use href="#g2k" x="24"/><use href="#g2l" x="36"/></svg></span>
<div style="left:5px;top:561px;width:258px;height:23px;border:1px solid;border-color:#fff #808080 #808080 #fff"></div>
<span class="t" style="left:104px;top:564px;width:60px;height:16px">사용자함수<svg width="60" height="16"><use href="#g2m"/><use href="#g2n" x="12"/><use href="#g3o" x="24"/><use href="#g2o" x="36"/><use href="#g24" x="48"/></svg></span>
<div style="left:5px;top:583px;width:258px;height:1px;background:#404040"></div>
<div style="left:6px;top:585px;width:48px;height:17px;border:1px solid #404040;border-top:none;border-radius:0 0 4px 4px;background:#d4d0c8"></div>
<span class="t" style="left:12px;top:585px;width:34px;height:16px">종류별<svg width="34" height="16"><use href="#g3m"/><use href="#g3p" x="12"/><use href="#g3q" x="24"/></svg></span>
<div style="left:55px;top:585px;width:48px;height:17px;border:1px solid #2020c0;border-top:none;border-radius:0 0 4px 4px;background:#00008c"></div>
<span class="t" style="left:60px;top:585px;width:36px;height:16px">리스트<svg width="36" height="16" style="fill:#fff"><use href="#g3r"/><use href="#g2b" x="12"/><use href="#g3s" x="24"/></svg></span>
<div class="rs" style="left:269px;top:387px;width:40px;height:40px;background:#d4d0c8"></div>
<div class="rs" style="left:269px;top:432px;width:40px;height:40px;background:#d4d0c8"></div>
<div class="rs" style="left:269px;top:477px;width:40px;height:40px;background:#d4d0c8"></div>
<div class="rs" style="left:269px;top:522px;width:40px;height:40px;background:#d4d0c8"></div>
<div class="rs" style="left:269px;top:567px;width:40px;height:40px;background:#d4d0c8"></div>
<span class="t" style="left:277px;top:391px;width:24px;height:16px">새로<svg width="24" height="16"><use href="#g3t"/><use href="#g3u" x="12"/></svg></span>
<span class="t" style="left:276px;top:403px;width:23px;height:16px">작성<svg width="23" height="16"><use href="#g3v"/><use href="#g3w" x="12"/></svg></span>
<span class="t" style="left:278px;top:444px;width:23px;height:16px"><svg width="23" height="16" style="fill:#fff"><use href="#g3x"/><use href="#g14" x="12"/></svg></span>
<span class="t" style="left:277px;top:443px;width:23px;height:16px">열기<svg width="23" height="16" style="fill:#808080"><use href="#g3x"/><use href="#g14" x="12"/></svg></span>
<span class="t" style="left:278px;top:489px;width:25px;height:16px"><svg width="25" height="16" style="fill:#fff"><use href="#g3y"/><use href="#g2m" x="12"/></svg></span>
<span class="t" style="left:277px;top:488px;width:25px;height:16px">복사<svg width="25" height="16" style="fill:#808080"><use href="#g3y"/><use href="#g2m" x="12"/></svg></span>
<span class="t" style="left:278px;top:528px;width:24px;height:16px"><svg width="24" height="16" style="fill:#fff"><use href="#g38"/><use href="#g39" x="12"/></svg></span>
<span class="t" style="left:277px;top:527px;width:24px;height:16px">이름<svg width="24" height="16" style="fill:#808080"><use href="#g38"/><use href="#g39" x="12"/></svg></span>
<span class="t" style="left:278px;top:540px;width:23px;height:16px"><svg width="23" height="16" style="fill:#fff"><use href="#g2r"/><use href="#g3z" x="12"/></svg></span>
<span class="t" style="left:277px;top:539px;width:23px;height:16px">변경<svg width="23" height="16" style="fill:#808080"><use href="#g2r"/><use href="#g3z" x="12"/></svg></span>
<span class="t" style="left:278px;top:578px;width:23px;height:16px"><svg width="23" height="16" style="fill:#fff"><use href="#g40"/><use href="#g41" x="12"/></svg></span>
<span class="t" style="left:277px;top:577px;width:23px;height:16px">삭제<svg width="23" height="16" style="fill:#808080"><use href="#g40"/><use href="#g41" x="12"/></svg></span>
<div style="left:266px;top:602px;width:50px;height:6px;background:#d4d0c8"></div>
<div style="left:318px;top:364px;width:893px;height:238px;border:1px solid #808080;box-shadow:inset -1px -1px #fff;background:#d4d0c8"></div>
<div style="left:319px;top:365px;width:890px;height:20px;background:#b5b5b5"></div>
<div style="left:319px;top:385px;width:890px;height:1px;background:#fff"></div>
<div style="left:319px;top:365px;width:1px;height:20px;background:#e0e0e0"></div>
<div style="left:324px;top:367px;width:199px;height:19px;background:#d4d0c8;border:1px solid;border-color:#fff #000 #d4d0c8 #fff"></div>
<span class="t" style="left:346px;top:369px;width:171px;height:16px">option+spot_M15_사본_사본<svg width="171" height="16"><use href="#g42"/><use href="#g43" x="7"/><use href="#g44" x="14"/><use href="#g45" x="21"/><use href="#g42" x="28"/><use href="#g46" x="35"/><use href="#g47" x="42"/><use href="#g48" x="49"/><use href="#g43" x="56"/><use href="#g42" x="63"/><use href="#g44" x="70"/><use href="#g49" x="77"/><use href="#g4a" x="84"/><use href="#g4b" x="91"/><use href="#g4c" x="98"/><use href="#g49" x="105"/><use href="#g4d" x="112"/><use href="#g4e" x="125"/><use href="#g49" x="138"/><use href="#g4d" x="145"/><use href="#g4e" x="158"/></svg></span>
<span class="t" style="left:545px;top:369px;width:120px;height:16px">option+spot_M14_사본<svg width="120" height="16"><use href="#g4f"/><use href="#g4g" x="6"/><use href="#g4h" x="12"/><use href="#g4i" x="18"/><use href="#g4f" x="24"/><use href="#g4j" x="30"/><use href="#g4k" x="36"/><use href="#g4l" x="42"/><use href="#g4g" x="48"/><use href="#g4f" x="54"/><use href="#g4h" x="60"/><use href="#g4m" x="66"/><use href="#g4n" x="72"/><use href="#g4o" x="78"/><use href="#g4p" x="84"/><use href="#g4m" x="90"/><use href="#g4q" x="96"/><use href="#g4r" x="108"/></svg></span>
<span class="t" style="left:693px;top:369px;width:25px;height:16px">FB_W<svg width="25" height="16"><use href="#g4s"/><use href="#g4t" x="6"/><use href="#g4m" x="12"/><use href="#g4u" x="18"/></svg></span>
<span class="t" style="left:745px;top:369px;width:91px;height:16px">option+spot_M13<svg width="91" height="16"><use href="#g4f"/><use href="#g4g" x="6"/><use href="#g4h" x="12"/><use href="#g4i" x="18"/><use href="#g4f" x="24"/><use href="#g4j" x="30"/><use href="#g4k" x="36"/><use href="#g4l" x="42"/><use href="#g4g" x="48"/><use href="#g4f" x="54"/><use href="#g4h" x="60"/><use href="#g4m" x="66"/><use href="#g4n" x="72"/><use href="#g4o" x="78"/><use href="#g4v" x="84"/></svg></span>
<span class="t" style="left:863px;top:369px;width:96px;height:16px">option+spot_사본<svg width="96" height="16"><use href="#g4f"/><use href="#g4g" x="6"/><use href="#g4h" x="12"/><use href="#g4i" x="18"/><use href="#g4f" x="24"/><use href="#g4j" x="30"/><use href="#g4k" x="36"/><use href="#g4l" x="42"/><use href="#g4g" x="48"/><use href="#g4f" x="54"/><use href="#g4h" x="60"/><use href="#g4m" x="66"/><use href="#g4q" x="72"/><use href="#g4r" x="84"/></svg></span>
<div style="left:671px;top:369px;width:1px;height:15px;background:#202020"></div>
<div style="left:723px;top:369px;width:1px;height:15px;background:#202020"></div>
<div style="left:841px;top:369px;width:1px;height:15px;background:#202020"></div>
<div style="left:965px;top:369px;width:1px;height:15px;background:#202020"></div>
<svg class="ic" style="left:1166px;top:369px" width="22" height="11"><path d="M5.5 1.5v8l-4-4zM15.5 1.5v8l4-4z" fill="none" stroke="#000" stroke-width="1"/></svg>
<svg class="ic" style="left:1195px;top:370px" width="9" height="9"><path d="M.8 .8l7 7M7.8 .8l-7 7" stroke="#000" stroke-width="1.6" fill="none"/></svg>
<div style="left:320px;top:388px;width:889px;height:212px;border:1px solid;border-color:#808080 #fff #fff #808080;box-shadow:inset 1px 1px #000,inset -1px -1px #d4d0c8;background:#fff"></div>
<div style="left:322px;top:390px;width:29px;height:192px;background:#e4e4e4"></div>
<div style="left:1191px;top:390px;width:16px;height:7px;border:1px solid;border-color:#fff #000 #000 #fff;background:#d4d0c8"></div>
<div class="sb" style="left:1191px;top:397px;width:16px;height:16px;"></div>
<svg class="ic" style="left:1195px;top:403px" width="7" height="4" shape-rendering="crispEdges"><path d="M3 0h1v1h-1zM2 1h3v1h-3zM1 2h5v1h-5zM0 3h7v1h-7z"/></svg>
<div class="trk" style="left:1191px;top:413px;width:16px;height:153px;"></div>
<div class="sb" style="left:1191px;top:557px;width:16px;height:8px;"></div>
<div class="sb" style="left:1191px;top:566px;width:16px;height:16px;"></div>
<svg class="ic" style="left:1195px;top:572px" width="7" height="4" shape-rendering="crispEdges"><path d="M0 0h7v1h-7zM1 1h5v1h-5zM2 2h3v1h-3zM3 3h1v1h-1z"/></svg>
<div style="left:322px;top:582px;width:7px;height:16px;border:1px solid;border-color:#fff #000 #000 #fff;background:#d4d0c8"></div>
<div class="sb" style="left:329px;top:582px;width:16px;height:16px;"></div>
<svg class="ic" style="left:334px;top:586px" width="4" height="7" shape-rendering="crispEdges"><path d="M3 0h1v7h-1zM2 1h1v5h-1zM1 2h1v3h-1zM0 3h1v1h-1z"/></svg>
<div class="sb" style="left:345px;top:582px;width:442px;height:16px;"></div>
<div class="trk" style="left:787px;top:582px;width:388px;height:16px;"></div>
<div class="sb" style="left:1175px;top:582px;width:16px;height:16px;"></div>
<svg class="ic" style="left:1181px;top:586px" width="4" height="7" shape-rendering="crispEdges"><path d="M0 0h1v7h-1zM1 1h1v5h-1zM2 2h1v3h-1zM3 3h1v1h-1z"/></svg>
<div style="left:1191px;top:582px;width:16px;height:16px;background:#d4d0c8"></div>
<div class="code" style="left:352px;top:407px;height:16px">TL_Delete(TL1);</div>
<div class="code" style="left:352px;top:423px;height:16px">TL1 = TL_New(var1,var2,dayhigh,sdate,stime,dayhigh);</div>
<div class="code" style="left:352px;top:439px;height:16px">TL_SetColor(TL1,RED);#TL1<span class="k" style="width:64px">추세선의<svg width="65" height="17"><use href="#g4w"/><use href="#g4x" x="16"/><use href="#g4y" x="32"/><use href="#g4z" x="48"/></svg></span> <span class="k" style="width:32px">색상<svg width="33" height="17"><use href="#g50"/><use href="#g51" x="16"/></svg></span></div>
<div class="code" style="left:352px;top:455px;height:16px">TL_SetSize(TL1,2);#TL1<span class="k" style="width:64px">추세선의<svg width="65" height="17"><use href="#g4w"/><use href="#g4x" x="16"/><use href="#g4y" x="32"/><use href="#g4z" x="48"/></svg></span> <span class="k" style="width:32px">굵기<svg width="33" height="17"><use href="#g52"/><use href="#g53" x="16"/></svg></span>(0~8)</div>
<div class="code" style="left:352px;top:487px;height:16px">TL_Delete(TL2);</div>
<div class="code" style="left:352px;top:503px;height:16px">TL2 = TL_New(var1,var2,daylow,sdate,stime,daylow);</div>
<div class="code" style="left:352px;top:519px;height:16px">TL_SetColor(TL2,BLUE);#TL2<span class="k" style="width:64px">추세선의<svg width="65" height="17"><use href="#g4w"/><use href="#g4x" x="16"/><use href="#g4y" x="32"/><use href="#g4z" x="48"/></svg></span> <span class="k" style="width:32px">색상<svg width="33" height="17"><use href="#g50"/><use href="#g51" x="16"/></svg></span></div>
<div class="code" style="left:352px;top:535px;height:16px">TL_SetSize(TL2,2); #TL2<span class="k" style="width:64px">추세선의<svg width="65" height="17"><use href="#g4w"/><use href="#g4x" x="16"/><use href="#g4y" x="32"/><use href="#g4z" x="48"/></svg></span> <span class="k" style="width:32px">굵기<svg width="33" height="17"><use href="#g52"/><use href="#g53" x="16"/></svg></span>(0~8)</div>
<div class="code" style="left:352px;top:551px;height:16px">*/</div>
<div class="code" style="left:324px;top:455px;height:16px;color:#000">895</div>
<div class="code" style="left:324px;top:535px;height:16px;color:#000">900</div>
<div class="cap" style="left:4px;top:608px;width:417px;height:19px;"></div>
<span class="t" style="left:9px;top:610px;width:26px;height:16px">오류<svg width="26" height="16"><use href="#g54"/><use href="#g55" x="13"/></svg></span>
<svg class="ic" style="left:393px;top:613px" width="7" height="9" shape-rendering="crispEdges"><path d="M1 0h5v1h-5zM1 1h1v4h-1zM4 1h2v4h-2zM0 5h7v1h-7zM3 6h1v3h-1z"/></svg>
<svg class="ic" style="left:408px;top:614px" width="7" height="7" shape-rendering="crispEdges"><path d="M0 0h1v1h-1zM1 1h1v1h-1zM2 2h1v1h-1zM3 3h1v1h-1zM4 4h1v1h-1zM5 5h1v1h-1zM6 6h1v1h-1zM6 0h1v1h-1zM5 1h1v1h-1zM4 2h1v1h-1zM2 4h1v1h-1zM1 5h1v1h-1zM0 6h1v1h-1z"/></svg>
<div style="left:4px;top:629px;width:417px;height:215px;border:1px solid #000;background:#fff"></div>
<div style="left:5px;top:630px;width:150px;height:16px;border-style:solid;border-width:0 1px 1px 0px;border-color:#808080 #808080 #808080 #fff;background:#d4d0c8"></div>
<span class="t" style="left:12px;top:631px;width:28px;height:16px">이 름<svg width="28" height="16"><use href="#g38"/><use href="#g39" x="16"/></svg></span>
<div style="left:155px;top:630px;width:100px;height:16px;border-style:solid;border-width:0 1px 1px 1px;border-color:#808080 #808080 #808080 #fff;background:#d4d0c8"></div>
<span class="t" style="left:223px;top:631px;width:27px;height:16px">줄 수<svg width="27" height="16"><use href="#g56"/><use href="#g24" x="15"/></svg></span>
<div style="left:255px;top:630px;width:99px;height:16px;border-style:solid;border-width:0 1px 1px 1px;border-color:#808080 #808080 #808080 #fff;background:#d4d0c8"></div>
<span class="t" style="left:323px;top:631px;width:27px;height:16px">열 수<svg width="27" height="16"><use href="#g3x"/><use href="#g24" x="15"/></svg></span>
<div style="left:354px;top:630px;width:66px;height:16px;border-style:solid;border-width:0 0 1px 1px;border-color:#808080 #fff;background:#d4d0c8"></div>
<span class="t" style="left:362px;top:631px;width:28px;height:16px">설 명<svg width="28" height="16"><use href="#g2q"/><use href="#g2p" x="18"/></svg></span>
<span class="t" style="left:10px;top:647px;width:141px;height:16px">option+spot_M15_사본_...<svg width="141" height="16"><use href="#g3g"/><use href="#g1x" x="7"/><use href="#g3f" x="14"/><use href="#g1w" x="18"/><use href="#g3g" x="21"/><use href="#g3i" x="27"/><use href="#g57" x="34"/><use href="#g58" x="42"/><use href="#g1x" x="49"/><use href="#g3g" x="56"/><use href="#g3f" x="63"/><use href="#g59" x="67"/><use href="#g1l" x="73"/><use href="#g5a" x="83"/><use href="#g5b" x="89"/><use href="#g59" x="95"/><use href="#g2m" x="102"/><use href="#g5c" x="114"/><use href="#g59" x="125"/><use href="#g1z" x="132"/><use href="#g1z" x="135"/><use href="#g1z" x="138"/></svg></span>
<div style="left:0;top:640px;width:420px;height:30px;overflow:hidden"><div style="left:0;top:-640px;width:500px;height:700px"><span class="t" style="left:362px;top:647px;width:64px;height:16px">검증이 완료<svg width="64" height="16"><use href="#g2k"/><use href="#g3c" x="12"/><use href="#g38" x="24"/><use href="#g5d" x="40"/><use href="#g5e" x="52"/></svg></span></div></div>
<div class="sb" style="left:5px;top:826px;width:16px;height:16px;"></div>
<svg class="ic" style="left:10px;top:830px" width="4" height="7" shape-rendering="crispEdges"><path d="M3 0h1v7h-1zM2 1h1v5h-1zM1 2h1v3h-1zM0 3h1v1h-1z"/></svg>
<div class="sb" style="left:21px;top:826px;width:224px;height:16px;"></div>
<div class="trk" style="left:245px;top:826px;width:158px;height:16px;"></div>
<div class="sb" style="left:403px;top:826px;width:16px;height:16px;"></div>
<svg class="ic" style="left:409px;top:830px" width="4" height="7" shape-rendering="crispEdges"><path d="M0 0h1v7h-1zM1 1h1v5h-1zM2 2h1v3h-1zM3 3h1v1h-1z"/></svg>
<div class="cap" style="left:425px;top:608px;width:786px;height:19px;"></div>
<span class="t" style="left:430px;top:610px;width:38px;height:16px">디버깅<svg width="38" height="16"><use href="#g5f"/><use href="#g5g" x="13"/><use href="#g5h" x="26"/></svg></span>
<svg class="ic" style="left:1183px;top:613px" width="7" height="9" shape-rendering="crispEdges"><path d="M1 0h5v1h-5zM1 1h1v4h-1zM4 1h2v4h-2zM0 5h7v1h-7zM3 6h1v3h-1z"/></svg>
<svg class="ic" style="left:1198px;top:614px" width="7" height="7" shape-rendering="crispEdges"><path d="M0 0h1v1h-1zM1 1h1v1h-1zM2 2h1v1h-1zM3 3h1v1h-1zM4 4h1v1h-1zM5 5h1v1h-1zM6 6h1v1h-1zM6 0h1v1h-1zM5 1h1v1h-1zM4 2h1v1h-1zM2 4h1v1h-1zM1 5h1v1h-1zM0 6h1v1h-1z"/></svg>
<div style="left:425px;top:629px;width:786px;height:215px;border:1px solid #000;background:#fff"></div>
<div style="left:426px;top:630px;width:150px;height:16px;border-style:solid;border-width:0 1px 1px 0px;border-color:#808080 #808080 #808080 #fff;background:#d4d0c8"></div>
<span class="t" style="left:433px;top:631px;width:25px;height:16px">시간<svg width="25" height="16"><use href="#g36"/><use href="#g5i" x="12"/></svg></span>
<div style="left:576px;top:630px;width:633px;height:16px;border-style:solid;border-width:0 1px 1px 1px;border-color:#808080 #808080 #808080 #fff;background:#d4d0c8"></div>
<span class="t" style="left:583px;top:631px;width:24px;height:16px">내용<svg width="24" height="16"><use href="#g5j"/><use href="#g2n" x="12"/></svg></span>
<div class="sb" style="left:1193px;top:631px;width:16px;height:16px;"></div>
<svg class="ic" style="left:1197px;top:637px" width="7" height="4" shape-rendering="crispEdges"><path d="M3 0h1v1h-1zM2 1h3v1h-3zM1 2h5v1h-5zM0 3h7v1h-7z"/></svg>
<div class="trk" style="left:1193px;top:647px;width:16px;height:163px;"></div>
<div class="sb" style="left:1193px;top:794px;width:16px;height:8px;"></div>
<div class="sb" style="left:1193px;top:810px;width:16px;height:16px;"></div>
<svg class="ic" style="left:1197px;top:816px" width="7" height="4" shape-rendering="crispEdges"><path d="M0 0h7v1h-7zM1 1h5v1h-5zM2 2h3v1h-3zM3 3h1v1h-1z"/></svg>
<div class="sb" style="left:426px;top:826px;width:17px;height:16px;"></div>
<svg class="ic" style="left:432px;top:830px" width="4" height="7" shape-rendering="crispEdges"><path d="M3 0h1v7h-1zM2 1h1v5h-1zM1 2h1v3h-1zM0 3h1v1h-1z"/></svg>
<div class="sb" style="left:443px;top:826px;width:727px;height:16px;"></div>
<div class="trk" style="left:1170px;top:826px;width:7px;height:16px;"></div>
<div class="sb" style="left:1177px;top:826px;width:16px;height:16px;"></div>
<svg class="ic" style="left:1183px;top:830px" width="4" height="7" shape-rendering="crispEdges"><path d="M0 0h1v7h-1zM1 1h1v5h-1zM2 2h1v3h-1zM3 3h1v1h-1z"/></svg>
<div style="left:1193px;top:826px;width:16px;height:16px;background:#d4d0c8"></div>
<div style="left:426px;top:646px;width:767px;height:180px;overflow:hidden"><div style="left:-426px;top:-646px;width:1215px;height:867px"><span class="t" style="left:431px;top:647px;width:108px;height:16px">2019-01-16 17:00:00<svg width="108" height="16"><use href="#g5k"/><use href="#g5l" x="6"/><use href="#g5a" x="12"/><use href="#g5m" x="17"/><use href="#g5n" x="23"/><use href="#g5l" x="30"/><use href="#g5a" x="36"/><use href="#g5n" x="42"/><use href="#g5a" x="49"/><use href="#g5o" x="54"/><use href="#g5a" x="64"/><use href="#g5p" x="70"/><use href="#g5q" x="76"/><use href="#g5l" x="80"/><use href="#g5l" x="85"/><use href="#g5q" x="91"/><use href="#g5l" x="95"/><use href="#g5l" x="101"/></svg></span><span class="t" style="left:583px;top:647px;width:249px;height:16px">op_i_sum 0.0 ,op_b_sum -5.0 ,op_f_sum 0.0<svg width="249" height="16"><use href="#g3g"/><use href="#g1x" x="7"/><use href="#g59" x="14"/><use href="#g1w" x="21"/><use href="#g59" x="24"/><use href="#g58" x="31"/><use href="#g2x" x="38"/><use href="#g5r" x="44"/><use href="#g5l" x="59"/><use href="#g1z" x="65"/><use href="#g5l" x="68"/><use href="#g5s" x="78"/><use href="#g3g" x="81"/><use href="#g1x" x="88"/><use href="#g59" x="95"/><use href="#g5t" x="102"/><use href="#g59" x="109"/><use href="#g58" x="116"/><use href="#g2x" x="122"/><use href="#g5r" x="129"/><use href="#g5n" x="144"/><use href="#g5b" x="151"/><use href="#g1z" x="157"/><use href="#g5l" x="160"/><use href="#g5s" x="170"/><use href="#g3g" x="173"/><use href="#g1x" x="180"/><use href="#g59" x="187"/><use href="#g5u" x="194"/><use href="#g59" x="198"/><use href="#g58" x="204"/><use href="#g2x" x="211"/><use href="#g5r" x="218"/><use href="#g5l" x="233"/><use href="#g1z" x="239"/><use href="#g5l" x="242"/></svg></span><span class="t" style="left:431px;top:660px;width:108px;height:16px">2019-01-16 17:00:00<svg width="108" height="16"><use href="#g5k"/><use href="#g5l" x="6"/><use href="#g5a" x="12"/><use href="#g5m" x="17"/><use href="#g5n" x="23"/><use href="#g5l" x="30"/><use href="#g5a" x="36"/><use href="#g5n" x="42"/><use href="#g5a" x="49"/><use href="#g5o" x="54"/><use href="#g5a" x="64"/><use href="#g5p" x="70"/><use href="#g5q" x="76"/><use href="#g5l" x="80"/><use href="#g5l" x="85"/><use href="#g5q" x="91"/><use href="#g5l" x="95"/><use href="#g5l" x="101"/></svg></span><span class="t" style="left:584px;top:660px;width:117px;height:16px">A.1 moduler op :-1.7<svg width="117" height="16"><use href="#g3d"/><use href="#g1z" x="9"/><use href="#g5a" x="12"/><use href="#g5r" x="22"/><use href="#g3g" x="33"/><use href="#g1h" x="40"/><use href="#g2x" x="47"/><use href="#g2w" x="54"/><use href="#g1f" x="57"/><use href="#g3h" x="64"/><use href="#g3g" x="72"/><use href="#g1x" x="79"/><use href="#g5q" x="90"/><use href="#g5n" x="94"/><use href="#g5a" x="101"/><use href="#g1z" x="107"/><use href="#g5p" x="110"/></svg></span><span class="t" style="left:431px;top:673px;width:108px;height:16px">2019-01-16 17:00:00<svg width="108" height="16"><use href="#g5k"/><use href="#g5l" x="6"/><use href="#g5a" x="12"/><use href="#g5m" x="17"/><use href="#g5n" x="23"/><use href="#g5l" x="30"/><use href="#g5a" x="36"/><use href="#g5n" x="42"/><use href="#g5a" x="49"/><use href="#g5o" x="54"/><use href="#g5a" x="64"/><use href="#g5p" x="70"/><use href="#g5q" x="76"/><use href="#g5l" x="80"/><use href="#g5l" x="85"/><use href="#g5q" x="91"/><use href="#g5l" x="95"/><use href="#g5l" x="101"/></svg></span><span class="t" style="left:583px;top:673px;width:598px;height:16px">op_stic_sum 0.0 ,op_stip_sum 0.0 ,op_stdc_sum 0.0 ,op_stdp_sum 0.0 ,op_stfc_sum -3.0 ,op_stfp_sum5.0<svg width="598" height="16"><use href="#g3g"/><use href="#g1x" x="7"/><use href="#g59" x="14"/><use href="#g58" x="21"/><use href="#g3f" x="28"/><use href="#g1w" x="32"/><use href="#g5v" x="34"/><use href="#g59" x="41"/><use href="#g58" x="48"/><use href="#g2x" x="55"/><use href="#g5r" x="62"/><use href="#g5l" x="77"/><use href="#g1z" x="83"/><use href="#g5l" x="86"/><use href="#g5s" x="96"/><use href="#g3g" x="98"/><use href="#g1x" x="105"/><use href="#g59" x="112"/><use href="#g58" x="119"/><use href="#g3f" x="126"/><use href="#g1w" x="130"/><use href="#g1x" x="133"/><use href="#g59" x="140"/><use href="#g58" x="147"/><use href="#g2x" x="154"/><use href="#g5r" x="161"/><use href="#g5l" x="175"/><use href="#g1z" x="181"/><use href="#g5l" x="184"/><use href="#g5s" x="194"/><use href="#g3g" x="197"/><use href="#g1x" x="204"/><use href="#g59" x="211"/><use href="#g58" x="218"/><use href="#g3f" x="225"/><use href="#g1h" x="229"/><use href="#g5v" x="235"/><use href="#g59" x="242"/><use href="#g58" x="249"/><use href="#g2x" x="256"/><use href="#g5r" x="263"/><use href="#g5l" x="278"/><use href="#g1z" x="284"/><use href="#g5l" x="287"/><use href="#g5s" x="296"/><use href="#g3g" x="299"/><use href="#g1x" x="306"/><use href="#g59" x="313"/><use href="#g58" x="320"/><use href="#g3f" x="327"/><use href="#g1h" x="331"/><use href="#g1x" x="338"/><use href="#g59" x="345"/><use href="#g58" x="352"/><use href="#g2x" x="359"/><use href="#g5r" x="365"/><use href="#g5l" x="380"/><use href="#g1z" x="386"/><use href="#g5l" x="389"/><use href="#g5s" x="399"/><use href="#g3g" x="402"/><use href="#g1x" x="409"/><use href="#g59" x="416"/><use href="#g58" x="423"/><use href="#g3f" x="429"/><use href="#g5u" x="433"/><use href="#g5v" x="437"/><use href="#g59" x="444"/><use href="#g58" x="451"/><use href="#g2x" x="458"/><use href="#g5r" x="465"/><use href="#g5n" x="480"/><use href="#g5w" x="487"/><use href="#g1z" x="492"/><use href="#g5l" x="495"/><use href="#g5s" x="505"/><use href="#g3g" x="508"/><use href="#g1x" x="515"/><use href="#g59" x="522"/><use href="#g58" x="529"/><use href="#g3f" x="536"/><use href="#g5u" x="540"/><use href="#g1x" x="544"/><use href="#g59" x="551"/><use href="#g58" x="558"/><use href="#g2x" x="564"/><use href="#g5r" x="571"/><use href="#g5b" x="582"/><use href="#g1z" x="588"/><use href="#g5l" x="591"/></svg></span><span class="t" style="left:431px;top:686px;width:108px;height:16px">2019-01-16 17:00:00<svg width="108" height="16"><use href="#g5k"/><use href="#g5l" x="6"/><use href="#g5a" x="12"/><use href="#g5m" x="17"/><use href="#g5n" x="23"/><use href="#g5l" x="30"/><use href="#g5a" x="36"/><use href="#g5n" x="42"/><use href="#g5a" x="49"/><use href="#g5o" x="54"/><use href="#g5a" x="64"/><use href="#g5p" x="70"/><use href="#g5q" x="76"/><use href="#g5l" x="80"/><use href="#g5l" x="85"/><use href="#g5q" x="91"/><use href="#g5l" x="95"/><use href="#g5l" x="101"/></svg></span><span class="t" style="left:583px;top:686px;width:43px;height:16px">ops 0.3<svg width="43" height="16"><use href="#g3g"/><use href="#g1x" x="7"/><use href="#g58" x="15"/><use href="#g5l" x="26"/><use href="#g1z" x="33"/><use href="#g5w" x="36"/></svg></span><span class="t" style="left:431px;top:699px;width:108px;height:16px">2019-01-16 17:00:00<svg width="108" height="16"><use href="#g5k"/><use href="#g5l" x="6"/><use href="#g5a" x="12"/><use href="#g5m" x="17"/><use href="#g5n" x="23"/><use href="#g5l" x="30"/><use href="#g5a" x="36"/><use href="#g5n" x="42"/><use href="#g5a" x="49"/><use href="#g5o" x="54"/><use href="#g5a" x="64"/><use href="#g5p" x="70"/><use href="#g5q" x="76"/><use href="#g5l" x="80"/><use href="#g5l" x="85"/><use href="#g5q" x="91"/><use href="#g5l" x="95"/><use href="#g5l" x="101"/></svg></span><span class="t" style="left:583px;top:699px;width:300px;height:16px">opsp: -0.8= avg(avg( op: -1.7+ ops: 0.3)+ spot: -1.0.)<svg width="300" height="16"><use href="#g3g"/><use href="#g1x" x="7"/><use href="#g58" x="14"/><use href="#g1x" x="21"/><use href="#g5q" x="28"/><use href="#g5n" x="36"/><use href="#g5l" x="43"/><use href="#g1z" x="49"/><use href="#g5x" x="51"/><use href="#g5y" x="57"/><use href="#g1g" x="69"/><use href="#g3j" x="76"/><use href="#g5z" x="82"/><use href="#gx" x="89"/><use href="#g1g" x="94"/><use href="#g3j" x="101"/><use href="#g5z" x="107"/><use href="#gx" x="114"/><use href="#g3g" x="123"/><use href="#g1x" x="130"/><use href="#g5q" x="137"/><use href="#g5n" x="145"/><use href="#g5a" x="151"/><use href="#g1z" x="157"/><use href="#g5p" x="160"/><use href="#g57" x="166"/><use href="#g3g" x="178"/><use href="#g1x" x="185"/><use href="#g58" x="192"/><use href="#g5q" x="199"/><use href="#g5l" x="207"/><use href="#g1z" x="213"/><use href="#g5w" x="216"/><use href="#gz" x="222"/><use href="#g57" x="227"/><use href="#g58" x="239"/><use href="#g1x" x="246"/><use href="#g3g" x="252"/><use href="#g3f" x="259"/><use href="#g5q" x="263"/><use href="#g5n" x="271"/><use href="#g5a" x="278"/><use href="#g1z" x="284"/><use href="#g5l" x="287"/><use href="#g1z" x="293"/><use href="#gz" x="296"/></svg></span><span class="t" style="left:431px;top:712px;width:108px;height:16px">2019-01-16 17:00:00<svg width="108" height="16"><use href="#g5k"/><use href="#g5l" x="6"/><use href="#g5a" x="12"/><use href="#g5m" x="17"/><use href="#g5n" x="23"/><use href="#g5l" x="30"/><use href="#g5a" x="36"/><use href="#g5n" x="42"/><use href="#g5a" x="49"/><use href="#g5o" x="54"/><use href="#g5a" x="64"/><use href="#g5p" x="70"/><use href="#g5q" x="76"/><use href="#g5l" x="80"/><use href="#g5l" x="85"/><use href="#g5q" x="91"/><use href="#g5l" x="95"/><use href="#g5l" x="101"/></svg></span><span class="t" style="left:583px;top:712px;width:232px;height:16px">ntr: -0.8. str: 0.5=avg( bisk: 5.0 +dd: -4.0)<svg width="232" height="16"><use href="#g3i"/><use href="#g3f" x="7"/><use href="#g3h" x="11"/><use href="#g5q" x="15"/><use href="#g5n" x="23"/><use href="#g5l" x="30"/><use href="#g1z" x="36"/><use href="#g5x" x="39"/><use href="#g1z" x="45"/><use href="#g58" x="52"/><use href="#g3f" x="59"/><use href="#g3h" x="63"/><use href="#g5q" x="67"/><use href="#g5l" x="75"/><use href="#g1z" x="81"/><use href="#g5b" x="84"/><use href="#g5y" x="90"/><use href="#g1g" x="98"/><use href="#g3j" x="105"/><use href="#g5z" x="111"/><use href="#gx" x="117"/><use href="#g5t" x="126"/><use href="#g1w" x="133"/><use href="#g58" x="136"/><use href="#g1v" x="143"/><use href="#g5q" x="149"/><use href="#g5b" x="157"/><use href="#g1z" x="163"/><use href="#g5l" x="166"/><use href="#g57" x="176"/><use href="#g1h" x="184"/><use href="#g1h" x="191"/><use href="#g5q" x="198"/><use href="#g5n" x="206"/><use href="#g60" x="213"/><use href="#g1z" x="219"/><use href="#g5l" x="222"/><use href="#gz" x="228"/></svg></span><span class="t" style="left:431px;top:725px;width:108px;height:16px">2019-01-16 17:00:00<svg width="108" height="16"><use href="#g5k"/><use href="#g5l" x="6"/><use href="#g5a" x="12"/><use href="#g5m" x="17"/><use href="#g5n" x="23"/><use href="#g5l" x="30"/><use href="#g5a" x="36"/><use href="#g5n" x="42"/><use href="#g5a" x="49"/><use href="#g5o" x="54"/><use href="#g5a" x="64"/><use href="#g5p" x="70"/><use href="#g5q" x="76"/><use href="#g5l" x="80"/><use href="#g5l" x="85"/><use href="#g5q" x="91"/><use href="#g5l" x="95"/><use href="#g5l" x="101"/></svg></span><span class="t" style="left:583px;top:725px;width:84px;height:16px">C.0 entry claw<svg width="84" height="16"><use href="#g3k"/><use href="#g1z" x="10"/><use href="#g5l" x="14"/><use href="#g1f" x="24"/><use href="#g3i" x="31"/><use href="#g3f" x="39"/><use href="#g3h" x="43"/><use href="#g1i" x="47"/><use href="#g5v" x="57"/><use href="#g2w" x="65"/><use href="#g1g" x="68"/><use href="#g61" x="75"/></svg></span><span class="t" style="left:431px;top:738px;width:108px;height:16px">2019-01-16 17:00:00<svg width="108" height="16"><use href="#g5k"/><use href="#g5l" x="6"/><use href="#g5a" x="12"/><use href="#g5m" x="17"/><use href="#g5n" x="23"/><use href="#g5l" x="30"/><use href="#g5a" x="36"/><use href="#g5n" x="42"/><use href="#g5a" x="49"/><use href="#g5o" x="54"/><use href="#g5a" x="64"/><use href="#g5p" x="70"/><use href="#g5q" x="76"/><use href="#g5l" x="80"/><use href="#g5l" x="85"/><use href="#g5q" x="91"/><use href="#g5l" x="95"/><use href="#g5l" x="101"/></svg></span><span class="t" style="left:583px;top:738px;width:520px;height:16px">C.0 sDate:20190116 sTime:122100 ctime:122113 TimeToMinutes(sTime):741 mtick:742 stick:1<svg width="520" height="16"><use href="#g3k"/><use href="#g1z" x="10"/><use href="#g5l" x="13"/><use href="#g58" x="23"/><use href="#g3l" x="30"/><use href="#g1g" x="40"/><use href="#g3f" x="47"/><use href="#g1f" x="51"/><use href="#g5q" x="58"/><use href="#g5k" x="62"/><use href="#g5l" x="68"/><use href="#g5a" x="74"/><use href="#g5m" x="80"/><use href="#g5l" x="86"/><use href="#g5a" x="92"/><use href="#g5a" x="98"/><use href="#g5o" x="104"/><use href="#g58" x="114"/><use href="#g2u" x="121"/><use href="#g1w" x="128"/><use href="#g5r" x="131"/><use href="#g1f" x="142"/><use href="#g5q" x="149"/><use href="#g5a" x="153"/><use href="#g5k" x="159"/><use href="#g5k" x="165"/><use href="#g5a" x="171"/><use href="#g5l" x="177"/><use href="#g5l" x="183"/><use href="#g5v" x="193"/><use href="#g3f" x="200"/><use href="#g1w" x="204"/><use href="#g5r" x="207"/><use href="#g1f" x="218"/><use href="#g5q" x="225"/><use href="#g5a" x="229"/><use href="#g5k" x="235"/><use href="#g5k" x="241"/><use href="#g5a" x="247"/><use href="#g5a" x="253"/><use href="#g5w" x="259"/><use href="#g2u" x="269"/><use href="#g1w" x="276"/><use href="#g5r" x="279"/><use href="#g1f" x="290"/><use href="#g2u" x="297"/><use href="#g3g" x="304"/><use href="#g1l" x="311"/><use href="#g1w" x="321"/><use href="#g3i" x="324"/><use href="#g2x" x="331"/><use href="#g3f" x="338"/><use href="#g1f" x="342"/><use href="#g58" x="349"/><use href="#gx" x="356"/><use href="#g58" x="361"/><use href="#g2u" x="368"/><use href="#g1w" x="375"/><use href="#g5r" x="378"/><use href="#g1f" x="389"/><use href="#gz" x="396"/><use href="#g5q" x="401"/><use href="#g5p" x="405"/><use href="#g60" x="411"/><use href="#g5a" x="417"/><use href="#g5r" x="427"/><use href="#g3f" x="438"/><use href="#g1w" x="442"/><use href="#g5v" x="445"/><use href="#g1v" x="452"/><use href="#g5q" x="458"/><use href="#g5p" x="462"/><use href="#g60" x="468"/><use href="#g5k" x="474"/><use href="#g58" x="484"/><use href="#g3f" x="491"/><use href="#g1w" x="495"/><use href="#g5v" x="498"/><use href="#g1v" x="505"/><use href="#g5q" x="511"/><use href="#g5a" x="515"/></svg></span><span class="t" style="left:431px;top:751px;width:108px;height:16px">2019-01-16 17:00:00<svg width="108" height="16"><use href="#g5k"/><use href="#g5l" x="6"/><use href="#g5a" x="12"/><use href="#g5m" x="17"/><use href="#g5n" x="23"/><use href="#g5l" x="30"/><use href="#g5a" x="36"/><use href="#g5n" x="42"/><use href="#g5a" x="49"/><use href="#g5o" x="54"/><use href="#g5a" x="64"/><use href="#g5p" x="70"/><use href="#g5q" x="76"/><use href="#g5l" x="80"/><use href="#g5l" x="85"/><use href="#g5q" x="91"/><use href="#g5l" x="95"/><use href="#g5l" x="101"/></svg></span><span class="t" style="left:583px;top:751px;width:281px;height:16px">C.1 claw stime:122100 &lt; ctime:122113 stick:1 &lt;= 4<svg width="281" height="16"><use href="#g3k"/><use href="#g1z" x="10"/><use href="#g5a" x="13"/><use href="#g5v" x="23"/><use href="#g2w" x="29"/><use href="#g1g" x="32"/><use href="#g61" x="39"/><use href="#g58" x="52"/><use href="#g3f" x="59"/><use href="#g1w" x="63"/><use href="#g5r" x="66"/><use href="#g1f" x="77"/><use href="#g5q" x="83"/><use href="#g5a" x="87"/><use href="#g5k" x="93"/><use href="#g5k" x="99"/><use href="#g5a" x="105"/><use href="#g5l" x="111"/><use href="#g5l" x="117"/><use href="#g62" x="127"/><use href="#g5v" x="138"/><use href="#g3f" x="145"/><use href="#g1w" x="149"/><use href="#g5r" x="152"/><use href="#g1f" x="163"/><use href="#g5q" x="170"/><use href="#g5a" x="174"/><use href="#g5k" x="180"/><use href="#g5k" x="186"/><use href="#g5a" x="191"/><use href="#g5a" x="197"/><use href="#g5w" x="203"/><use href="#g58" x="213"/><use href="#g3f" x="220"/><use href="#g1w" x="224"/><use href="#g5v" x="227"/><use href="#g1v" x="234"/><use href="#g5q" x="240"/><use href="#g5a" x="244"/><use href="#g62" x="253"/><use href="#g5y" x="261"/><use href="#g60" x="273"/></svg></span><span class="t" style="left:431px;top:764px;width:108px;height:16px">2019-01-16 17:00:00<svg width="108" height="16"><use href="#g5k"/><use href="#g5l" x="6"/><use href="#g5a" x="12"/><use href="#g5m" x="17"/><use href="#g5n" x="23"/><use href="#g5l" x="30"/><use href="#g5a" x="36"/><use href="#g5n" x="42"/><use href="#g5a" x="49"/><use href="#g5o" x="54"/><use href="#g5a" x="64"/><use href="#g5p" x="70"/><use href="#g5q" x="76"/><use href="#g5l" x="80"/><use href="#g5l" x="85"/><use href="#g5q" x="91"/><use href="#g5l" x="95"/><use href="#g5l" x="101"/></svg></span><span class="t" style="left:583px;top:764px;width:131px;height:16px">C.1 claw t_buf[3]= -0.8<svg width="131" height="16"><use href="#g3k"/><use href="#g1z" x="10"/><use href="#g5a" x="13"/><use href="#g5v" x="22"/><use href="#g2w" x="29"/><use href="#g1g" x="32"/><use href="#g61" x="39"/><use href="#g3f" x="51"/><use href="#g59" x="55"/><use href="#g5t" x="62"/><use href="#g2x" x="69"/><use href="#g5u" x="76"/><use href="#g63" x="79"/><use href="#g5w" x="85"/><use href="#g64" x="91"/><use href="#g5y" x="97"/><use href="#g5n" x="108"/><use href="#g5l" x="115"/><use href="#g1z" x="121"/><use href="#g5x" x="124"/></svg></span><span class="t" style="left:431px;top:777px;width:108px;height:16px">2019-01-16 17:00:00<svg width="108" height="16"><use href="#g5k"/><use href="#g5l" x="6"/><use href="#g5a" x="12"/><use href="#g5m" x="17"/><use href="#g5n" x="23"/><use href="#g5l" x="30"/><use href="#g5a" x="36"/><use href="#g5n" x="42"/><use href="#g5a" x="49"/><use href="#g5o" x="54"/><use href="#g5a" x="64"/><use href="#g5p" x="70"/><use href="#g5q" x="76"/><use href="#g5l" x="80"/><use href="#g5l" x="85"/><use href="#g5q" x="91"/><use href="#g5l" x="95"/><use href="#g5l" x="101"/></svg></span><span class="t" style="left:583px;top:777px;width:79px;height:16px">C.1 It takes ...<svg width="79" height="16"><use href="#g3k"/><use href="#g1z" x="10"/><use href="#g5a" x="13"/><use href="#g65" x="23"/><use href="#g3f" x="26"/><use href="#g3f" x="34"/><use href="#g1g" x="39"/><use href="#g1v" x="46"/><use href="#g1f" x="52"/><use href="#g58" x="59"/><use href="#g1z" x="70"/><use href="#g1z" x="73"/><use href="#g1z" x="76"/></svg></span><span class="t" style="left:431px;top:790px;width:108px;height:16px">2019-01-16 17:00:00<svg width="108" height="16"><use href="#g5k"/><use href="#g5l" x="6"/><use href="#g5a" x="12"/><use href="#g5m" x="17"/><use href="#g5n" x="23"/><use href="#g5l" x="30"/><use href="#g5a" x="36"/><use href="#g5n" x="42"/><use href="#g5a" x="49"/><use href="#g5o" x="54"/><use href="#g5a" x="64"/><use href="#g5p" x="70"/><use href="#g5q" x="76"/><use href="#g5l" x="80"/><use href="#g5l" x="85"/><use href="#g5q" x="91"/><use href="#g5l" x="95"/><use href="#g5l" x="101"/></svg></span><span class="t" style="left:583px;top:790px;width:180px;height:16px">G.0 scannig strength weakness<svg width="180" height="16"><use href="#g66"/><use href="#g1z" x="10"/><use href="#g5l" x="13"/><use href="#g58" x="23"/><use href="#g5v" x="30"/><use href="#g1g" x="37"/><use href="#g3i" x="44"/><use href="#g3i" x="51"/><use href="#g1w" x="58"/><use href="#g5z" x="61"/><use href="#g58" x="72"/><use href="#g3f" x="79"/><use href="#g3h" x="83"/><use href="#g1f" x="87"/><use href="#g3i" x="94"/><use href="#g5z" x="101"/><use href="#g3f" x="108"/><use href="#g67" x="112"/><use href="#g61" x="123"/><use href="#g1f" x="132"/><use href="#g1g" x="139"/><use href="#g1v" x="146"/><use href="#g3i" x="152"/><use href="#g1f" x="159"/><use href="#g58" x="166"/><use href="#g58" x="173"/></svg></span><span class="t" style="left:431px;top:803px;width:108px;height:16px">2019-01-16 17:00:00<svg width="108" height="16"><use href="#g5k"/><use href="#g5l" x="6"/><use href="#g5a" x="12"/><use href="#g5m" x="17"/><use href="#g5n" x="23"/><use href="#g5l" x="30"/><use href="#g5a" x="36"/><use href="#g5n" x="42"/><use href="#g5a" x="49"/><use href="#g5o" x="54"/><use href="#g5a" x="64"/><use href="#g5p" x="70"/><use href="#g5q" x="76"/><use href="#g5l" x="80"/><use href="#g5l" x="85"/><use href="#g5q" x="91"/><use href="#g5l" x="95"/><use href="#g5l" x="101"/></svg></span><span class="t" style="left:583px;top:803px;width:251px;height:16px">G.0 buy weakness 0.5 vs sell weakness 1.5<svg width="251" height="16"><use href="#g66"/><use href="#g1z" x="10"/><use href="#g5l" x="13"/><use href="#g5t" x="24"/><use href="#g2x" x="31"/><use href="#g1i" x="38"/><use href="#g61" x="48"/><use href="#g1f" x="57"/><use href="#g1g" x="65"/><use href="#g1v" x="72"/><use href="#g3i" x="78"/><use href="#g1f" x="85"/><use href="#g58" x="92"/><use href="#g58" x="99"/><use href="#g5l" x="111"/><use href="#g1z" x="117"/><use href="#g5b" x="120"/><use href="#g3j" x="130"/><use href="#g58" x="136"/><use href="#g58" x="148"/><use href="#g1f" x="155"/><use href="#g2w" x="162"/><use href="#g2w" x="165"/><use href="#g61" x="172"/><use href="#g1f" x="181"/><use href="#g1g" x="189"/><use href="#g1v" x="196"/><use href="#g3i" x="202"/><use href="#g1f" x="209"/><use href="#g58" x="216"/><use href="#g58" x="223"/><use href="#g5a" x="235"/><use href="#g1z" x="241"/><use href="#g5b" x="244"/></svg></span><span class="t" style="left:431px;top:816px;width:108px;height:16px">2019-01-16 17:00:00<svg width="108" height="16"><use href="#g5k"/><use href="#g5l" x="6"/><use href="#g5a" x="12"/><use href="#g5m" x="17"/><use href="#g5n" x="23"/><use href="#g5l" x="30"/><use href="#g5a" x="36"/><use href="#g5n" x="42"/><use href="#g5a" x="49"/><use href="#g5o" x="54"/><use href="#g5a" x="64"/><use href="#g5p" x="70"/><use href="#g5q" x="76"/><use href="#g5l" x="80"/><use href="#g5l" x="85"/><use href="#g5q" x="91"/><use href="#g5l" x="95"/><use href="#g5l" x="101"/></svg></span><span class="t" style="left:583px;top:816px;width:107px;height:16px">I.0 display position<svg width="107" height="16"><use href="#g65"/><use href="#g1z" x="3"/><use href="#g5l" x="6"/><use href="#g1h" x="16"/><use href="#g1w" x="23"/><use href="#g58" x="27"/><use href="#g1x" x="34"/><use href="#g2w" x="41"/><use href="#g1g" x="44"/><use href="#g1i" x="51"/><use href="#g1x" x="61"/><use href="#g3g" x="68"/><use href="#g58" x="76"/><use href="#g1w" x="83"/><use href="#g3f" x="86"/><use href="#g1w" x="90"/><use href="#g3g" x="93"/><use href="#g3i" x="100"/></svg></span></div></div>
<svg class="ic" style="left:6px;top:5px" width="16" height="16"><defs><radialGradient id="ag" cx=".4" cy=".35" r=".7"><stop offset="0" stop-color="#b4ff50"/><stop offset=".55" stop-color="#38d018"/><stop offset="1" stop-color="#109010"/></radialGradient></defs><circle cx="8" cy="8" r="7.6" fill="url(#ag)" stroke="#0c7c0c" stroke-width=".8"/><path d="M3.5 5l2 3v3M7.5 5l-2 3M8.7 5v6h3.3" fill="none" stroke="#044a04" stroke-width="1.5"/></svg>
<svg class="ic" style="left:1163px;top:15px" width="6" height="2" shape-rendering="crispEdges"><path d="M0 0h6v2h-6z"/></svg>
<svg class="ic" style="left:1197px;top:9px" width="8" height="7" shape-rendering="crispEdges"><path d="M0 0h2v1h-2zM6 0h2v1h-2zM1 1h2v1h-2zM5 1h2v1h-2zM2 2h4v1h-4zM3 3h2v1h-2zM2 4h4v1h-4zM1 5h2v1h-2zM5 5h2v1h-2zM0 6h2v1h-2zM6 6h2v1h-2z"/></svg>
<svg class="ic" style="left:1163px;top:34px" width="6" height="2" shape-rendering="crispEdges"><path d="M0 0h6v2h-6z"/></svg>
<svg class="ic" style="left:1197px;top:28px" width="8" height="7" shape-rendering="crispEdges"><path d="M0 0h2v1h-2zM6 0h2v1h-2zM1 1h2v1h-2zM5 1h2v1h-2zM2 2h4v1h-4zM3 3h2v1h-2zM2 4h4v1h-4zM1 5h2v1h-2zM5 5h2v1h-2zM0 6h2v1h-2zM6 6h2v1h-2z"/></svg>
<svg class="ic" style="left:1178px;top:8px" width="9" height="9" shape-rendering="crispEdges"><path d="M0 0h9v9h-9zM1 2v6h7v-6z" fill-rule="evenodd"/></svg>
<svg class="ic" style="left:1178px;top:27px" width="8" height="9" shape-rendering="crispEdges"><path d="M2 0h6v6h-2v-1h1v-3h-4v1h-1zM0 3h6v6h-6zM1 5v3h4v-3z" fill-rule="evenodd"/></svg>
<svg class="ic" style="left:9px;top:26px;overflow:visible" width="14" height="12"><path d="M3.5 -.8l4.6 4.6h-2.2v6.6h-4.8v-6.6h-2.2zM10.5 12.8l-4.6 -4.6h2.2v-6.6h4.8v6.6h2.2z" fill="#fff"/><path d="M3 0h1v1h-1zM2 1h3v1h-3zM1 2h5v1h-5zM0 3h7v1h-7zM2 4h3v6h-3z" fill="#e0200c"/><path d="M9 2h3v6h-3zM7 8h7v1h-7zM8 9h5v1h-5zM9 10h3v1h-3zM10 11h1v1h-1z" fill="#0860c8"/></svg>
<svg class="ic" style="left:328px;top:371px;overflow:visible" width="14" height="12"><path d="M3.5 -.8l4.6 4.6h-2.2v6.6h-4.8v-6.6h-2.2zM10.5 12.8l-4.6 -4.6h2.2v-6.6h4.8v6.6h2.2z" fill="#fff"/><path d="M3 0h1v1h-1zM2 1h3v1h-3zM1 2h5v1h-5zM0 3h7v1h-7zM2 4h3v6h-3z" fill="#e0200c"/><path d="M9 2h3v6h-3zM7 8h7v1h-7zM8 9h5v1h-5zM9 10h3v1h-3zM10 11h1v1h-1z" fill="#0860c8"/></svg>
<svg class="ic" style="left:527px;top:371px;overflow:visible" width="14" height="12"><path d="M3.5 -.8l4.6 4.6h-2.2v6.6h-4.8v-6.6h-2.2zM10.5 12.8l-4.6 -4.6h2.2v-6.6h4.8v6.6h2.2z" fill="#fff"/><path d="M3 0h1v1h-1zM2 1h3v1h-3zM1 2h5v1h-5zM0 3h7v1h-7zM2 4h3v6h-3z" fill="#e0200c"/><path d="M9 2h3v6h-3zM7 8h7v1h-7zM8 9h5v1h-5zM9 10h3v1h-3zM10 11h1v1h-1z" fill="#0860c8"/></svg>
<svg class="ic" style="left:727px;top:371px;overflow:visible" width="14" height="12"><path d="M3.5 -.8l4.6 4.6h-2.2v6.6h-4.8v-6.6h-2.2zM10.5 12.8l-4.6 -4.6h2.2v-6.6h4.8v6.6h2.2z" fill="#fff"/><path d="M3 0h1v1h-1zM2 1h3v1h-3zM1 2h5v1h-5zM0 3h7v1h-7zM2 4h3v6h-3z" fill="#e0200c"/><path d="M9 2h3v6h-3zM7 8h7v1h-7zM8 9h5v1h-5zM9 10h3v1h-3zM10 11h1v1h-1z" fill="#0860c8"/></svg>
<svg class="ic" style="left:845px;top:371px;overflow:visible" width="14" height="12"><path d="M3.5 -.8l4.6 4.6h-2.2v6.6h-4.8v-6.6h-2.2zM10.5 12.8l-4.6 -4.6h2.2v-6.6h4.8v6.6h2.2z" fill="#fff"/><path d="M3 0h1v1h-1zM2 1h3v1h-3zM1 2h5v1h-5zM0 3h7v1h-7zM2 4h3v6h-3z" fill="#e0200c"/><path d="M9 2h3v6h-3zM7 8h7v1h-7zM8 9h5v1h-5zM9 10h3v1h-3zM10 11h1v1h-1z" fill="#0860c8"/></svg>
<svg class="ic" style="left:674px;top:369px" width="17" height="16" shape-rendering="crispEdges"><path d="M0 0h3v16h-3zM0 13h17v3h-17z" fill="#fff"/><path d="M2 5l4-4 3 3 4-3" stroke="#fff" stroke-width="3" fill="none" shape-rendering="auto"/><path d="M1 1h1v14h-1zM1 14h14v1h-14z" fill="#000"/><path d="M3 9h2v4h-2z" fill="#1050c0"/><path d="M6 8h2v5h-2z" fill="#e02010"/><path d="M9 6h2v7h-2z" fill="#901010"/><path d="M12 7h2v6h-2z" fill="#1050c0"/><path d="M3 7l4-4 3 2 4-3" stroke="#e04010" stroke-width="1.3" fill="none" shape-rendering="auto"/></svg>
<svg class="ic" style="left:17px;top:49px" width="16" height="19" shape-rendering="crispEdges"><defs><linearGradient id="ng" x1="0" y1="0" x2="0" y2="1"><stop offset="0" stop-color="#fff"/><stop offset="1" stop-color="#70dce8"/></linearGradient></defs><rect x=".5" y=".5" width="15" height="18" fill="url(#ng)" stroke="#000"/><rect x=".5" y="13.5" width="5" height="5" fill="#fff" stroke="#000"/><path d="M2 15h1v1h-1zM3 16h1v1h-1z" fill="#000"/></svg>
<svg class="ic" style="left:42px;top:48px" width="22" height="20"><defs><linearGradient id="og" x1="0" y1="0" x2="0" y2="1"><stop offset="0" stop-color="#e4dc58"/><stop offset="1" stop-color="#8c8408"/></linearGradient></defs><path d="M1 18v-12l1-1h4l1 1v1h8v3" fill="#ffffc8" stroke="#000"/><path d="M1.5 6.5h4.5l1 1.5h8v2.500h-9l-4.500 7z" fill="#fff8b0"/><path d="M1 18.500l5-8h14.500l-5 8z" fill="url(#og)" stroke="#000"/><path d="M3 17.500l4-6h12" fill="none" stroke="#e8dc50"/><path d="M12 3q3-3 6 0" fill="none" stroke="#000" stroke-width="1.2"/><path d="M19.500 1.500v4h-4z" fill="#000"/></svg>
<svg class="ic" style="left:70px;top:49px" width="20" height="20" shape-rendering="crispEdges"><path d="M0 1l1-1h14l3 3v14l-1 1h-16l-1-1zM10 1v3h2v-3z" transform="translate(1,1)" fill="#fff" fill-rule="evenodd"/><path d="M0 1l1-1h14l3 3v14l-1 1h-16l-1-1zM10 1v3h2v-3z" fill="#808080" fill-rule="evenodd"/><path d="M4 10h10v8h-10z" fill="#fff"/><path d="M4 10h10v1h-10z" fill="#d4d0c8"/></svg>
<svg class="ic" style="left:108px;top:48px" width="13" height="21"><path d="M1 0h10v1h-10z" fill="#000"/><path d="M2.500 1v16.500h7v-16.500" fill="#fff" stroke="#000"/><path d="M3 9h6v8h-6z" fill="#e818d8"/><path d="M3 9h2v8h-2z" fill="#ff90f0"/><path d="M8 9h1v8h-1z" fill="#a000a0"/><path d="M.500 19.500l1.500-2.500h8l1.500 2.500z" fill="#c010c0" stroke="#000"/><path d="M5 3h4v1h-4zM5 6h3v1h-3zM5 9h4v1h-4zM5 12h3v1h-3zM5 15h4v1h-4z" fill="#000" opacity=".75"/></svg>
<svg class="ic" style="left:132px;top:48px" width="18" height="20"><path d="M1 4l1-1h10v3h-3v1h-3v-1h-4z" fill="#fff" stroke="#000"/><path d="M6 6h3v6h-3z" fill="#fff" stroke="#000"/><path d="M5.500 12h4v7.500h-4z" fill="#1040c8" stroke="#002080"/><path d="M14 .500h2.500v6l-1 2h-1z" fill="#fff" stroke="#000"/><path d="M14.500 8v4" stroke="#000"/><path d="M13 12h4v7.500h-4z" fill="#e01030" stroke="#800010"/></svg>
<svg class="ic" style="left:167px;top:48px" width="18" height="21"><path d="M3.500 1.500q.5 6 5.500 11l-1 1q-5.500-5-6-11.500zM14 .500q-.5 6.500-5 11.500l1 1.500q5.500-6 5.500-12z" fill="#fff" stroke="#000" stroke-width=".9"/><ellipse cx="4.300" cy="16.300" rx="2.600" ry="2.300" fill="none" stroke="#000" stroke-width="3"/><ellipse cx="12.300" cy="15" rx="2.300" ry="2.700" fill="none" stroke="#000" stroke-width="3"/><ellipse cx="4.300" cy="16.300" rx="2.600" ry="2.300" fill="none" stroke="#30b0b0" stroke-width="1.500"/><ellipse cx="12.300" cy="15" rx="2.300" ry="2.700" fill="none" stroke="#30b0b0" stroke-width="1.500"/></svg>
<svg class="ic" style="left:194px;top:48px" width="20" height="22" shape-rendering="crispEdges"><path d="M0 0h9l9 9v11h-11v-3h-3v-3h-2v-3h-2z" transform="translate(1,1)" fill="#fff"/><path d="M0 0h9l9 9v11h-11v-3h-3v-3h-2v-3h-2z" fill="#808080"/></svg>
<svg class="ic" style="left:222px;top:48px" width="17" height="20"><path d="M.500 2.500h13v15h-13z" fill="#a8a020" stroke="#000"/><path d="M4 2.500l1-2h4l1 2v1.500h-6z" fill="#e8d060" stroke="#000" stroke-width=".8"/><path d="M6.500 9.500h9v7l-2 2.500h-7z" fill="#fff" stroke="#000"/><path d="M8 12.500h5M8 14.500h4" stroke="#303030" stroke-width=".8"/></svg>
<svg class="ic" style="left:255px;top:47px" width="21" height="20"><path d="M7.500 1l7 7h-4.500q-1 8 9 8.500q1 2-1 2.500q-12.500 1-12.500-11h-5z" fill="#48a8d8" stroke="#000" stroke-width="1"/><path d="M7.500 3l4 4.200h-3q-1 6 3 9" fill="none" stroke="#b8e4f8" stroke-width="1.400"/></svg>
<svg class="ic" style="left:282px;top:48px" width="24" height="22"><path d="M0 4q8-8 13.500 1l1 5h5.500l-8 9-8-9h5q0-7-7-3.500z" transform="translate(2,2)" fill="#fff"/><path d="M0 4q8-8 13.500 1l1 5h5.500l-8 9-8-9h5q0-7-7-3.500z" transform="translate(1,1)" fill="#808080"/></svg>
<svg class="ic" style="left:316px;top:47px" width="21" height="21"><circle cx="7" cy="7" r="6.1" fill="#d8ece4" stroke="#303030" stroke-width="1"/><circle cx="7" cy="7" r="5" fill="none" stroke="#e8e8e8" stroke-width="1.200"/><circle cx="7" cy="7" r="3.8" fill="#b8dcd0" stroke="#505050" stroke-width=".8"/><circle cx="6" cy="6" r="1.500" fill="#f4fffa"/><path d="M11.500 11.500l7 7" stroke="#303030" stroke-width="3.400" stroke-linecap="round"/><path d="M13 13l5.300 5.300" stroke="#e0b070" stroke-width="1.900" stroke-linecap="round"/></svg>
<svg class="ic" style="left:343px;top:47px" width="22" height="21"><circle cx="7" cy="7" r="6.1" fill="#d8ece4" stroke="#303030" stroke-width="1"/><circle cx="7" cy="7" r="5" fill="none" stroke="#e8e8e8" stroke-width="1.200"/><circle cx="7" cy="7" r="3.8" fill="#b8dcd0" stroke="#505050" stroke-width=".8"/><circle cx="6" cy="6" r="1.500" fill="#f4fffa"/><path d="M5.500 13h3.500v8h-3.500z" fill="#e0b070" stroke="#000" stroke-width=".9"/><path d="M8 5.500h7v-2.500l5.500 4-5.500 4v-2.500h-7z" fill="#50e0e8" stroke="#108890" stroke-width=".9"/></svg>
<svg class="ic" style="left:371px;top:47px" width="22" height="21"><circle cx="14.5" cy="7" r="6.1" fill="#d8ece4" stroke="#303030" stroke-width="1"/><circle cx="14.5" cy="7" r="5" fill="none" stroke="#e8e8e8" stroke-width="1.200"/><circle cx="14.5" cy="7" r="3.8" fill="#b8dcd0" stroke="#505050" stroke-width=".8"/><circle cx="13.5" cy="6" r="1.500" fill="#f4fffa"/><path d="M13 13h3.500v8h-3.500z" fill="#e0b070" stroke="#000" stroke-width=".9"/><path d="M14 5.500h-7v-2.500l-5.500 4 5.500 4v-2.500h7z" fill="#50e0e8" stroke="#108890" stroke-width=".9"/></svg>
<svg class="ic" style="left:397px;top:47px" width="22" height="22"><circle cx="8" cy="8.5" r="6.1" fill="#d8ece4" stroke="#303030" stroke-width="1"/><circle cx="8" cy="8.5" r="5" fill="none" stroke="#e8e8e8" stroke-width="1.200"/><circle cx="8" cy="8.5" r="3.8" fill="#b8dcd0" stroke="#505050" stroke-width=".8"/><circle cx="7" cy="7.5" r="1.500" fill="#f4fffa"/><path d="M12.500 13l7 7" stroke="#303030" stroke-width="3.400" stroke-linecap="round"/><path d="M14 14.500l5.300 5.300" stroke="#e0b070" stroke-width="1.900" stroke-linecap="round"/><path d="M5 2.500h5v-2l4 3.500-4 3.500v-2h-5z" fill="#30d840" stroke="#087818" stroke-width=".8"/><path d="M9 11.500h-4v-2l-4 3.500 4 3.500v-2h4z" fill="#30d840" stroke="#087818" stroke-width=".8"/></svg>
<svg class="ic" style="left:432px;top:48px" width="21" height="20"><path d="M.500 5.500h20v11.500h-8l-2 1.500-2-1.500h-8z" fill="#f0b050" stroke="#804800" stroke-width="1"/><path d="M2.500 3.500q4.500-2 8 .500q3.500-2.500 8-.500v11.500q-4.500-1.500-8 .500q-3.500-2-8-.500z" fill="#fff" stroke="#000" stroke-width="1"/><path d="M10.500 4v11.500" stroke="#000"/><path d="M4 6h5M4 8h5M4 10h5M4 12h5M12 6h5M12 8h5M12 10h5" stroke="#202020" stroke-width=".9"/><path d="M12.500 10.500h3v9h-3z" fill="#f070d0" stroke="#000" stroke-width="1"/></svg>
<svg class="ic" style="left:460px;top:48px" width="21" height="20"><path d="M.500 5.500h20v11.500h-8l-2 1.500-2-1.500h-8z" fill="#f0b050" stroke="#804800" stroke-width="1"/><path d="M2.500 3.500q4.500-2 8 .500q3.500-2.500 8-.500v11.500q-4.500-1.500-8 .500q-3.500-2-8-.500z" fill="#fff" stroke="#000" stroke-width="1"/><path d="M10.500 4v11.500" stroke="#000"/><path d="M4 6h5M4 8h5M4 10h5M4 12h5M12 6h5M12 8h5M12 10h5" stroke="#202020" stroke-width=".9"/><path d="M12.500 13.500h3v6h-3z" fill="#f070d0" stroke="#000" stroke-width="1"/><path d="M12 6h-6v-2.500l-5.500 4 5.500 4v-2.500h6z" fill="#60e8f0" stroke="#108890" stroke-width=".9"/></svg>
<svg class="ic" style="left:487px;top:48px" width="21" height="20"><path d="M.500 5.500h20v11.500h-8l-2 1.500-2-1.500h-8z" fill="#f0b050" stroke="#804800" stroke-width="1"/><path d="M2.500 3.500q4.500-2 8 .500q3.500-2.500 8-.500v11.500q-4.500-1.500-8 .500q-3.500-2-8-.500z" fill="#fff" stroke="#000" stroke-width="1"/><path d="M10.500 4v11.500" stroke="#000"/><path d="M4 6h5M4 8h5M4 10h5M4 12h5M12 6h5M12 8h5M12 10h5" stroke="#202020" stroke-width=".9"/><path d="M9 6h6v-2.500l5.500 4-5.500 4v-2.500h-6z" fill="#60e8f0" stroke="#108890" stroke-width=".9"/></svg>
<svg class="ic" style="left:514px;top:48px" width="21" height="20"><path d="M.500 5.500h20v11.500h-8l-2 1.500-2-1.500h-8z" fill="#f0b050" stroke="#804800" stroke-width="1"/><path d="M2.500 3.500q4.500-2 8 .500q3.500-2.500 8-.500v11.500q-4.500-1.500-8 .500q-3.500-2-8-.500z" fill="#fff" stroke="#000" stroke-width="1"/><path d="M10.500 4v11.500" stroke="#000"/><path d="M4 6h5M4 8h5M4 10h5M4 12h5M12 6h5M12 8h5M12 10h5" stroke="#202020" stroke-width=".9"/><path d="M4 3l12 12M16 3l-12 12" stroke="#e01818" stroke-width="1.800"/></svg>
<svg class="ic" style="left:552px;top:52px" width="18" height="14"><path d="M1 12l6-11" stroke="#fff" stroke-width="1.800"/><path d="M12.500 2v8M9 4l7 4M16 4l-7 4" stroke="#fff" stroke-width="1.500"/></svg>
<svg class="ic" style="left:579px;top:52px" width="17" height="14"><path d="M1 12l6-11M9 12l6-11" stroke="#fff" stroke-width="1.800"/></svg>
<svg class="ic" style="left:551px;top:51px" width="18" height="14"><path d="M1 12l6-11" stroke="#808080" stroke-width="1.800"/><path d="M12.500 2v8M9 4l7 4M16 4l-7 4" stroke="#808080" stroke-width="1.500"/></svg>
<svg class="ic" style="left:578px;top:51px" width="17" height="14"><path d="M1 12l6-11M9 12l6-11" stroke="#808080" stroke-width="1.800"/></svg>
<svg class="ic" style="left:1198px;top:850px" width="13" height="13" shape-rendering="crispEdges"><path d="M12 0l-12 12M12 4l-8 8M12 8l-4 4" stroke="#fff" stroke-width="1" shape-rendering="auto"/><path d="M13 1l-12 12M13 2l-11 11M13 5l-8 8M13 6l-7 7M13 9l-4 4M13 10l-3 3" stroke="#808080" stroke-width="1" shape-rendering="auto"/></svg>
</div>
</body></html>
